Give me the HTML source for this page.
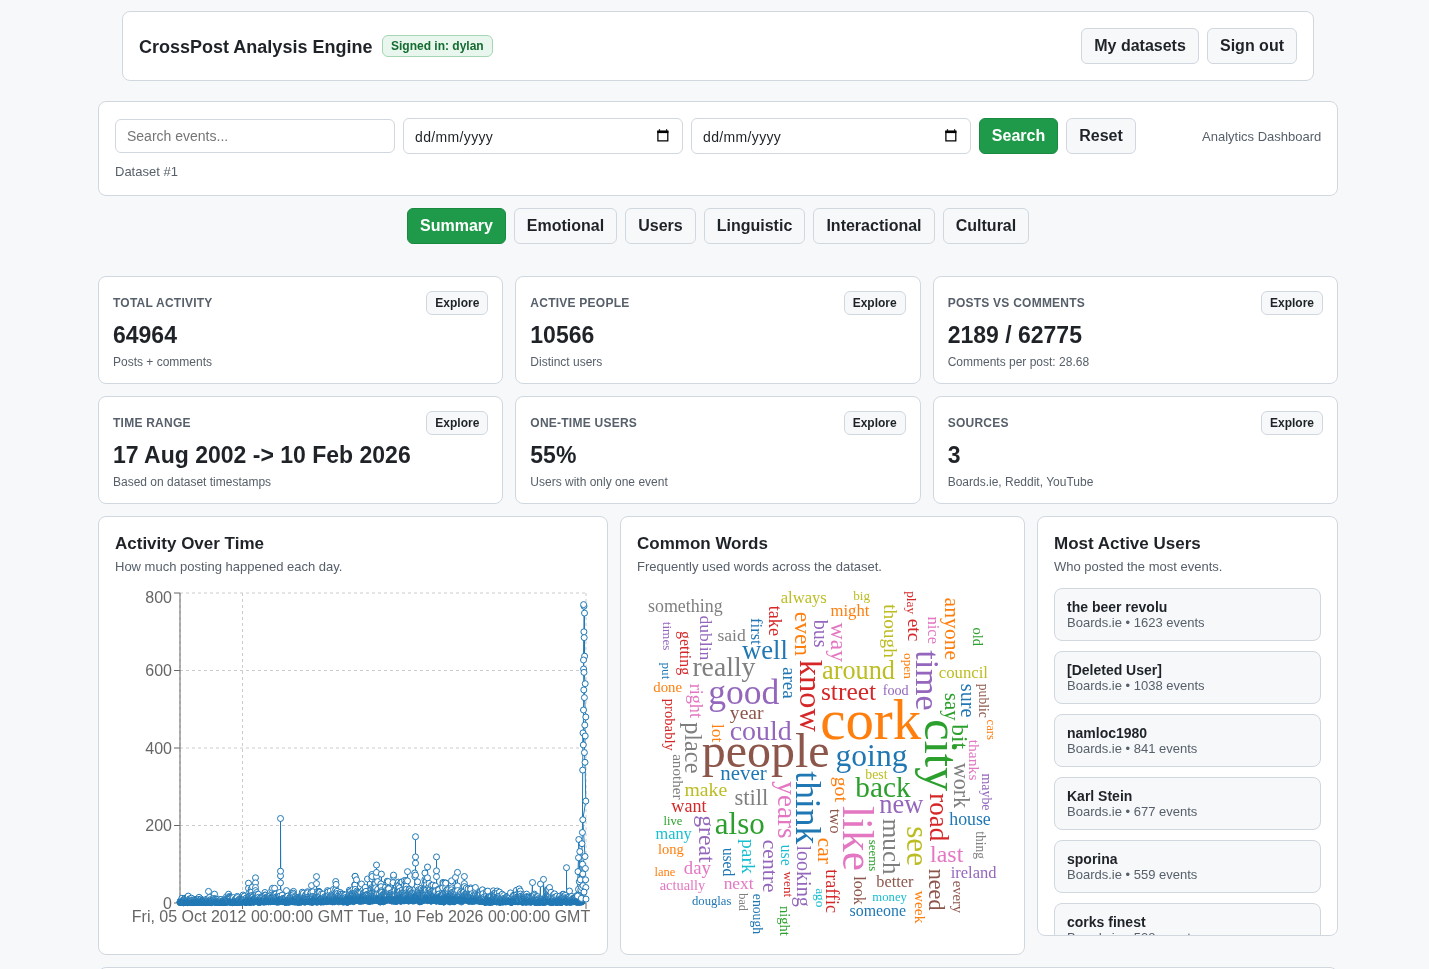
<!DOCTYPE html>
<html><head><meta charset="utf-8">
<style>
*{box-sizing:border-box;}
html,body{margin:0;padding:0;}
body{background:#f6f8fa;font-family:"Liberation Sans",sans-serif;color:#1f2328;width:1429px;height:969px;overflow:hidden;position:relative;}
.card{position:absolute;background:#fff;border:1px solid #d0d7de;border-radius:8px;}
.btn{position:absolute;height:36px;border:1px solid #d0d7de;background:#f6f8fa;border-radius:6px;font-weight:bold;font-size:16px;color:#1f2328;display:flex;align-items:center;justify-content:center;}
.btn.green{background:#1f9a4a;border-color:#1a8a40;color:#fff;}
.inp{position:absolute;border:1px solid #d0d7de;border-radius:6px;background:#fff;font-size:14px;display:flex;align-items:center;}
.abs{position:absolute;white-space:nowrap;}
.lbl{font-size:12px;font-weight:bold;color:#57606a;letter-spacing:0.02em;}
.big{font-size:23px;font-weight:bold;color:#1f2328;}
.sub{font-size:12px;color:#57606a;}
.exp{position:absolute;height:24px;padding-bottom:1px;width:62px;border:1px solid #d0d7de;background:#f6f8fa;border-radius:6px;font-size:12px;font-weight:bold;display:flex;align-items:center;justify-content:center;}
.ctitle{font-size:17px;font-weight:bold;}
.csub{font-size:13px;color:#57606a;}
.dots circle{r:3px;}
.uitem{position:absolute;left:16px;width:267px;height:53px;border:1px solid #d0d7de;background:#f6f8fa;border-radius:8px;}
.uname{position:absolute;left:12px;top:10px;font-size:14px;font-weight:bold;white-space:nowrap;}
.usub{position:absolute;left:12px;top:26px;font-size:13px;color:#57606a;white-space:nowrap;}
</style></head>
<body>
<div id="root" style="position:absolute;left:0;top:0;width:1429px;height:969px;will-change:transform;">
<!-- header -->
<div class="card" style="left:122px;top:11px;width:1192px;height:70px;">
  <div class="abs" style="left:16px;top:25px;font-size:18px;font-weight:bold;">CrossPost Analysis Engine</div>
  <div class="abs" style="left:259px;top:23px;height:22px;padding:0 8px;border:1px solid #a5d6b4;background:#e9f6ee;color:#136c30;border-radius:6px;font-size:12px;font-weight:bold;display:flex;align-items:center;">Signed in: dylan</div>
</div>
<div class="btn" style="left:1081px;top:28px;width:118px;">My datasets</div>
<div class="btn" style="left:1207px;top:28px;width:90px;">Sign out</div>

<!-- filter card -->
<div class="card" style="left:98px;top:101px;width:1240px;height:95px;"></div>
<div class="inp" style="left:115px;top:119px;width:280px;height:34px;padding-left:11px;color:#757575;font-size:14px;">Search events...</div>
<div class="inp" style="left:403px;top:118px;width:280px;height:36px;padding-left:11px;padding-top:2px;letter-spacing:0.35px;">dd/mm/yyyy<svg style="position:absolute;left:252px;top:9px" width="14" height="14" viewBox="0 0 14 14"><path d="M1.9 3.4h9.9v9.5H1.9z" fill="none" stroke="#000" stroke-width="1.25"/><path d="M1.3 2.6h11.1v2.5H1.3z" fill="#000"/><path d="M2.9 1.3h1.2v1.5H2.9zM10 1.3h1.2v1.5H10z" fill="#000"/></svg></div>
<div class="inp" style="left:691px;top:118px;width:280px;height:36px;padding-left:11px;padding-top:2px;letter-spacing:0.35px;">dd/mm/yyyy<svg style="position:absolute;left:252px;top:9px" width="14" height="14" viewBox="0 0 14 14"><path d="M1.9 3.4h9.9v9.5H1.9z" fill="none" stroke="#000" stroke-width="1.25"/><path d="M1.3 2.6h11.1v2.5H1.3z" fill="#000"/><path d="M2.9 1.3h1.2v1.5H2.9zM10 1.3h1.2v1.5H10z" fill="#000"/></svg></div>
<div class="btn green" style="left:979px;top:118px;width:79px;">Search</div>
<div class="btn" style="left:1066px;top:118px;width:70px;">Reset</div>
<div class="abs" style="left:1202px;top:129px;font-size:13px;color:#57606a;">Analytics Dashboard</div>
<div class="abs" style="left:115px;top:164px;font-size:13px;color:#57606a;">Dataset #1</div>

<!-- tabs -->
<div class="btn green" style="left:407px;top:208px;width:99px;">Summary</div>
<div class="btn" style="left:514px;top:208px;width:103px;">Emotional</div>
<div class="btn" style="left:625px;top:208px;width:71px;">Users</div>
<div class="btn" style="left:704px;top:208px;width:101px;">Linguistic</div>
<div class="btn" style="left:813px;top:208px;width:122px;">Interactional</div>
<div class="btn" style="left:943px;top:208px;width:86px;">Cultural</div>

<div class="card" style="left:98px;top:276px;width:405.33px;height:108px;">
  <div class="abs lbl" style="left:14px;top:19px;">TOTAL ACTIVITY</div>
  <div class="exp" style="right:14px;top:14px;">Explore</div>
  <div class="abs big" style="left:14px;top:45px;">64964</div>
  <div class="abs sub" style="left:14px;top:78px;">Posts + comments</div>
</div>
<div class="card" style="left:515.33px;top:276px;width:405.33px;height:108px;">
  <div class="abs lbl" style="left:14px;top:19px;">ACTIVE PEOPLE</div>
  <div class="exp" style="right:14px;top:14px;">Explore</div>
  <div class="abs big" style="left:14px;top:45px;">10566</div>
  <div class="abs sub" style="left:14px;top:78px;">Distinct users</div>
</div>
<div class="card" style="left:932.67px;top:276px;width:405.33px;height:108px;">
  <div class="abs lbl" style="left:14px;top:19px;">POSTS VS COMMENTS</div>
  <div class="exp" style="right:14px;top:14px;">Explore</div>
  <div class="abs big" style="left:14px;top:45px;">2189 / 62775</div>
  <div class="abs sub" style="left:14px;top:78px;">Comments per post: 28.68</div>
</div>
<div class="card" style="left:98px;top:396px;width:405.33px;height:108px;">
  <div class="abs lbl" style="left:14px;top:19px;">TIME RANGE</div>
  <div class="exp" style="right:14px;top:14px;">Explore</div>
  <div class="abs big" style="left:14px;top:45px;">17 Aug 2002 -&gt; 10 Feb 2026</div>
  <div class="abs sub" style="left:14px;top:78px;">Based on dataset timestamps</div>
</div>
<div class="card" style="left:515.33px;top:396px;width:405.33px;height:108px;">
  <div class="abs lbl" style="left:14px;top:19px;">ONE-TIME USERS</div>
  <div class="exp" style="right:14px;top:14px;">Explore</div>
  <div class="abs big" style="left:14px;top:45px;">55%</div>
  <div class="abs sub" style="left:14px;top:78px;">Users with only one event</div>
</div>
<div class="card" style="left:932.67px;top:396px;width:405.33px;height:108px;">
  <div class="abs lbl" style="left:14px;top:19px;">SOURCES</div>
  <div class="exp" style="right:14px;top:14px;">Explore</div>
  <div class="abs big" style="left:14px;top:45px;">3</div>
  <div class="abs sub" style="left:14px;top:78px;">Boards.ie, Reddit, YouTube</div>
</div>
<div class="card" style="left:98px;top:516px;width:510px;height:439px;">
  <div class="abs ctitle" style="left:16px;top:17px;">Activity Over Time</div>
  <div class="abs csub" style="left:16px;top:42px;">How much posting happened each day.</div>
</div>
<!-- CHART -->
<svg style="position:absolute;left:0;top:0" width="1429" height="969" font-family="Liberation Sans" font-size="16">
<g stroke="#ccc" stroke-dasharray="3 3" fill="none"><line x1="180" y1="593" x2="586" y2="593"/><line x1="180" y1="670.5" x2="586" y2="670.5"/><line x1="180" y1="748" x2="586" y2="748"/><line x1="180" y1="825.5" x2="586" y2="825.5"/><line x1="180" y1="903" x2="586" y2="903"/><line x1="180" y1="593" x2="180" y2="903"/><line x1="242.5" y1="593" x2="242.5" y2="903"/><line x1="586" y1="593" x2="586" y2="903"/></g>
<g stroke="#666" fill="none"><line x1="180" y1="593" x2="180" y2="903"/><line x1="180" y1="903" x2="586" y2="903"/><line x1="174" y1="593" x2="180" y2="593"/><line x1="174" y1="670.5" x2="180" y2="670.5"/><line x1="174" y1="748" x2="180" y2="748"/><line x1="174" y1="825.5" x2="180" y2="825.5"/><line x1="174" y1="903" x2="180" y2="903"/><line x1="242.5" y1="903" x2="242.5" y2="909"/><line x1="586" y1="903" x2="586" y2="909"/></g>
<g fill="#666" text-anchor="end"><text x="172" y="603">800</text><text x="172" y="676">600</text><text x="172" y="753.5">400</text><text x="172" y="831">200</text><text x="172" y="908.7">0</text></g>
<g fill="#666" text-anchor="middle"><text x="242.5" y="921.5">Fri, 05 Oct 2012 00:00:00 GMT</text><text x="474" y="921.5">Tue, 10 Feb 2026 00:00:00 GMT</text></g>
<path d="M180.0,901.9L180.1,901.8L180.2,902.6L180.2,902.4L180.3,902.4L180.4,902.2L180.5,902.3L180.6,901.6L180.6,901.8L180.7,901.0L180.8,900.6L180.9,901.9L181.0,902.6L181.0,902.5L181.1,902.3L181.2,902.1L181.3,902.2L181.4,900.8L181.4,901.3L181.5,900.1L181.6,902.0L181.7,901.7L181.8,901.8L181.8,901.2L181.9,898.3L182.0,900.7L182.1,901.6L182.2,901.7L182.3,901.9L182.3,901.9L182.4,901.9L182.5,902.1L182.6,902.0L182.7,902.1L182.7,901.3L182.8,901.8L182.9,901.3L183.0,901.1L183.1,901.2L183.1,900.5L183.2,902.1L183.3,901.9L183.4,902.2L183.5,902.7L183.5,902.6L183.6,902.4L183.7,902.7L183.8,902.5L183.9,902.6L183.9,902.6L184.0,901.9L184.1,901.2L184.2,900.9L184.3,900.9L184.3,901.8L184.4,900.4L184.5,899.7L184.6,899.7L184.7,898.5L184.7,899.7L184.8,900.5L184.9,900.2L185.0,899.9L185.1,898.2L185.1,900.3L185.2,898.3L185.3,899.7L185.4,899.2L185.5,899.8L185.5,901.9L185.6,901.9L185.7,902.0L185.8,902.1L185.9,900.0L186.0,901.1L186.0,900.8L186.1,900.5L186.2,901.3L186.3,902.2L186.4,902.4L186.4,901.5L186.5,902.0L186.6,901.7L186.7,901.6L186.8,902.2L186.8,901.6L186.9,901.4L187.0,902.2L187.1,902.4L187.2,902.4L187.2,901.8L187.3,902.1L187.4,902.6L187.5,901.8L187.6,902.2L187.6,902.3L187.7,902.4L187.8,902.7L187.9,902.2L188.0,901.6L188.0,900.8L188.1,900.9L188.2,896.1L188.3,900.7L188.4,901.0L188.4,901.5L188.5,902.5L188.6,902.5L188.7,902.4L188.8,902.3L188.8,902.3L188.9,902.2L189.0,902.0L189.1,902.1L189.2,901.2L189.2,901.5L189.3,900.3L189.4,898.9L189.5,899.9L189.6,901.4L189.6,901.2L189.7,900.0L189.8,902.1L189.9,902.2L190.0,900.2L190.1,901.0L190.1,901.7L190.2,902.1L190.3,902.2L190.4,902.3L190.5,902.5L190.5,902.3L190.6,902.2L190.7,902.5L190.8,901.8L190.9,901.1L190.9,901.6L191.0,901.8L191.1,901.5L191.2,901.6L191.3,901.2L191.3,900.3L191.4,898.7L191.5,898.2L191.6,900.0L191.7,900.9L191.7,902.1L191.8,901.9L191.9,900.6L192.0,900.3L192.1,901.3L192.1,901.2L192.2,901.6L192.3,901.6L192.4,901.9L192.5,900.6L192.5,902.2L192.6,902.4L192.7,902.0L192.8,902.6L192.9,902.5L192.9,902.6L193.0,902.4L193.1,902.2L193.2,902.1L193.3,902.0L193.3,902.0L193.4,900.5L193.5,901.2L193.6,902.0L193.7,901.8L193.8,902.4L193.8,902.5L193.9,902.0L194.0,901.8L194.1,901.8L194.2,901.0L194.2,901.8L194.3,902.5L194.4,901.9L194.5,901.9L194.6,899.6L194.6,901.7L194.7,901.7L194.8,901.9L194.9,901.7L195.0,901.7L195.0,901.9L195.1,900.7L195.2,899.8L195.3,900.0L195.4,899.8L195.4,900.1L195.5,901.9L195.6,902.2L195.7,901.9L195.8,901.7L195.8,900.1L195.9,901.3L196.0,901.5L196.1,901.5L196.2,901.3L196.2,900.2L196.3,901.4L196.4,900.6L196.5,900.5L196.6,901.9L196.6,902.3L196.7,902.2L196.8,900.9L196.9,900.8L197.0,900.4L197.0,900.5L197.1,901.7L197.2,902.0L197.3,902.5L197.4,901.9L197.5,902.0L197.5,901.1L197.6,901.3L197.7,902.2L197.8,902.2L197.9,901.5L197.9,901.7L198.0,901.6L198.1,902.3L198.2,902.3L198.3,901.7L198.3,901.7L198.4,901.5L198.5,901.4L198.6,901.9L198.7,901.8L198.7,901.7L198.8,902.0L198.9,900.6L199.0,898.7L199.1,897.3L199.1,899.3L199.2,901.6L199.3,901.0L199.4,901.6L199.5,901.0L199.5,901.4L199.6,901.9L199.7,902.5L199.8,902.2L199.9,901.7L199.9,901.2L200.0,900.4L200.1,901.9L200.2,901.7L200.3,901.0L200.3,900.0L200.4,901.8L200.5,901.5L200.6,900.6L200.7,900.2L200.7,901.4L200.8,900.6L200.9,900.6L201.0,899.0L201.1,900.8L201.1,900.9L201.2,901.0L201.3,900.5L201.4,901.8L201.5,901.8L201.6,902.3L201.6,902.2L201.7,902.2L201.8,902.1L201.9,901.5L202.0,901.2L202.0,900.9L202.1,900.7L202.2,901.1L202.3,901.6L202.4,901.4L202.4,902.3L202.5,902.0L202.6,902.1L202.7,902.2L202.8,902.0L202.8,901.8L202.9,902.2L203.0,902.1L203.1,901.6L203.2,902.0L203.2,901.4L203.3,902.2L203.4,902.3L203.5,901.8L203.6,901.9L203.6,902.0L203.7,901.6L203.8,901.1L203.9,901.3L204.0,901.1L204.0,901.2L204.1,901.6L204.2,901.4L204.3,901.6L204.4,902.4L204.4,902.4L204.5,902.0L204.6,901.9L204.7,901.8L204.8,902.0L204.8,902.4L204.9,902.5L205.0,902.6L205.1,902.7L205.2,902.4L205.3,902.4L205.3,902.5L205.4,902.2L205.5,901.7L205.6,902.3L205.7,901.8L205.7,902.3L205.8,900.3L205.9,900.4L206.0,902.1L206.1,901.3L206.1,901.9L206.2,901.6L206.3,900.0L206.4,899.3L206.5,901.6L206.5,901.5L206.6,901.9L206.7,901.6L206.8,901.8L206.9,901.8L206.9,900.5L207.0,901.4L207.1,900.3L207.2,901.5L207.3,901.7L207.3,902.3L207.4,901.5L207.5,901.5L207.6,902.2L207.7,902.0L207.7,902.0L207.8,902.1L207.9,902.2L208.0,901.7L208.5,891.4L208.1,901.2L208.2,900.8L208.3,900.1L208.4,899.1L208.5,899.5L208.5,901.0L208.6,900.3L208.7,901.8L208.8,902.0L208.9,901.2L208.9,902.2L209.0,902.3L209.1,902.5L209.2,902.2L209.3,902.4L209.4,902.1L209.4,901.9L209.5,900.3L209.6,897.4L209.7,900.3L209.8,901.3L209.8,901.4L209.9,901.7L210.0,901.8L210.1,901.8L210.2,901.1L210.2,899.8L210.3,901.6L210.4,901.2L210.5,901.2L210.6,901.9L210.6,901.8L210.7,902.0L210.8,901.8L210.9,901.6L211.0,902.3L211.0,902.3L211.1,902.0L211.2,902.2L211.3,902.7L211.4,902.2L211.4,902.1L211.5,901.6L211.6,901.9L211.7,902.2L211.8,901.5L211.8,901.4L211.9,901.7L212.0,901.4L212.1,901.7L212.2,901.4L212.2,900.8L212.3,901.0L212.4,901.5L212.5,900.9L212.6,899.8L212.6,900.2L212.7,900.6L212.8,900.9L212.9,901.5L213.0,901.0L213.1,901.5L213.1,901.7L213.2,901.4L213.3,900.0L213.4,898.9L213.5,901.1L213.5,899.7L213.6,899.3L213.7,900.0L213.8,899.2L213.9,899.7L213.9,897.1L214.5,894.1L214.1,898.5L214.2,900.3L214.3,900.9L214.3,900.3L214.4,902.0L214.5,901.3L214.6,900.1L214.7,901.8L214.7,902.0L214.8,901.3L214.9,901.9L215.0,902.3L215.1,901.1L215.1,901.5L215.2,899.9L215.3,899.1L215.4,899.5L215.5,901.0L215.5,900.1L215.6,900.0L215.7,901.1L215.8,901.7L215.9,901.8L215.9,902.2L216.0,902.2L216.1,901.8L216.2,902.1L216.3,902.1L216.3,902.1L216.4,902.0L216.5,902.1L216.6,901.8L216.7,900.8L216.8,901.9L216.8,902.0L216.9,901.9L217.0,901.0L217.1,901.3L217.2,901.7L217.2,901.0L217.3,901.3L217.4,901.9L217.5,901.7L217.6,901.5L217.6,901.9L217.7,902.4L217.8,902.4L217.9,902.0L218.0,901.7L218.0,902.3L218.1,902.5L218.2,901.9L218.3,902.4L218.4,901.9L218.4,901.4L218.5,899.2L218.6,901.6L218.7,900.9L218.8,901.5L218.8,901.5L218.9,902.0L219.0,901.3L219.1,900.9L219.2,901.8L219.2,902.3L219.3,902.0L219.4,902.1L219.5,901.8L219.6,901.6L219.6,901.3L219.7,901.3L219.8,901.7L219.9,900.9L220.0,900.3L220.0,900.8L220.1,900.6L220.2,900.9L220.3,901.2L220.4,901.6L220.4,900.4L220.5,901.2L220.6,899.9L220.7,899.7L220.8,899.6L220.9,899.4L220.9,899.6L221.0,901.4L221.1,902.2L221.2,902.3L221.3,902.3L221.3,902.1L221.4,902.0L221.5,901.7L221.6,902.3L221.7,902.1L221.7,902.3L221.8,902.3L221.9,902.4L222.0,902.2L222.1,902.4L222.1,901.9L222.2,901.4L222.3,901.9L222.4,902.1L222.5,902.0L222.5,901.2L222.6,900.8L222.7,901.6L222.8,901.7L222.9,902.2L222.9,902.2L223.0,902.4L223.1,902.1L223.2,902.1L223.3,902.0L223.3,902.4L223.4,902.4L223.5,902.4L223.6,901.7L223.7,902.4L223.7,902.5L223.8,902.5L223.9,902.3L224.0,902.3L224.1,901.6L224.1,900.3L224.2,902.0L224.3,901.2L224.4,900.7L224.5,900.2L224.6,900.2L224.6,900.9L224.7,901.5L224.8,901.9L224.9,902.2L225.0,901.9L225.0,901.8L225.1,901.7L225.2,901.5L225.3,902.3L225.4,902.1L225.4,902.3L225.5,902.4L225.6,902.2L225.7,901.7L225.8,901.8L225.8,901.5L225.9,900.1L226.0,899.8L226.1,899.8L226.2,901.1L226.2,900.4L226.3,901.1L226.4,899.5L226.5,896.6L226.6,899.9L226.6,900.1L226.7,900.3L226.8,898.6L226.9,901.1L227.0,899.9L227.0,898.9L227.1,899.7L227.2,899.5L227.3,900.3L227.4,900.2L227.4,900.7L227.5,901.8L227.6,902.0L227.7,902.0L227.8,901.5L227.8,901.7L227.9,901.3L228.5,897.2L228.1,901.0L228.2,900.6L228.2,901.7L228.3,901.5L228.4,900.6L228.5,899.7L228.6,894.2L228.7,897.5L228.7,898.9L228.8,899.7L228.9,901.0L229.0,901.1L229.1,901.9L229.1,901.9L229.2,898.5L229.3,900.5L229.4,899.7L229.5,898.2L229.5,896.4L229.6,897.2L229.7,898.4L229.8,898.0L229.9,897.4L229.9,900.9L230.0,899.3L230.1,899.9L230.2,899.1L230.3,898.2L230.3,898.9L230.4,901.1L230.5,902.1L230.6,901.4L230.7,901.8L230.7,902.3L230.8,902.3L230.9,902.1L231.0,900.9L231.1,901.8L231.1,901.4L231.2,901.3L231.3,901.6L231.4,902.1L231.5,901.0L231.5,901.3L231.6,901.1L231.7,901.4L231.8,899.4L231.9,899.8L231.9,900.8L232.0,900.1L232.1,900.4L232.2,901.5L232.3,902.2L232.4,902.2L232.4,902.2L232.5,902.5L232.6,902.7L232.7,902.5L232.8,902.3L232.8,901.9L232.9,902.3L233.5,897.6L233.1,901.9L233.2,902.0L233.2,902.2L233.3,902.1L233.4,902.2L233.5,902.2L233.6,902.2L233.6,902.4L233.7,902.5L233.8,902.4L233.9,902.2L234.0,901.7L234.0,901.8L234.1,902.1L234.2,902.4L234.3,901.9L234.4,902.0L234.4,902.3L234.5,901.4L234.6,900.7L234.7,901.4L234.8,901.5L234.8,902.0L234.9,901.9L235.0,900.9L235.1,901.2L235.2,900.4L235.2,899.2L235.3,901.7L235.4,902.0L235.5,901.0L235.6,901.6L235.6,901.9L235.7,902.1L235.8,901.5L235.9,901.6L236.0,898.9L236.1,899.5L236.1,901.9L236.2,902.3L236.3,902.0L236.4,900.5L236.5,899.8L236.5,901.1L236.6,901.6L236.7,902.3L236.8,901.6L236.9,902.3L236.9,901.8L237.0,901.0L237.1,900.8L237.2,899.8L237.3,896.4L237.3,899.9L237.4,897.6L237.5,901.5L237.6,901.7L237.7,901.7L237.7,901.7L237.8,900.7L237.9,901.1L238.0,901.8L238.1,902.1L238.1,902.1L238.2,901.7L238.3,902.1L238.4,902.2L238.5,902.3L238.5,901.9L238.6,901.6L238.7,902.1L238.8,902.4L238.9,902.4L238.9,902.1L239.0,901.2L239.1,901.2L239.2,901.7L239.3,899.6L239.3,899.2L239.4,902.0L239.5,901.4L239.6,900.4L239.7,899.5L239.7,900.8L239.8,902.0L239.9,901.8L240.0,901.3L240.1,900.9L240.2,900.7L240.2,901.5L240.3,901.4L240.4,901.4L240.5,901.7L240.6,900.0L240.6,900.8L240.7,901.2L240.8,899.1L240.9,900.5L241.0,901.1L241.0,901.3L241.1,902.0L241.2,901.5L241.3,901.7L241.4,901.5L241.4,900.5L241.5,901.3L241.6,901.6L241.7,902.3L241.8,901.7L241.8,901.9L241.9,901.2L242.0,901.3L242.1,901.7L242.2,902.0L242.2,901.0L242.3,900.5L242.4,899.5L242.5,900.2L242.6,901.7L242.6,901.6L242.7,901.0L242.8,900.4L242.9,899.5L243.0,898.4L243.0,897.7L243.1,895.0L243.2,900.5L243.3,899.9L243.4,899.4L243.4,898.6L243.5,899.3L243.6,900.7L243.7,900.5L243.8,899.6L243.9,899.9L243.9,898.6L244.0,897.6L244.1,901.3L244.2,898.0L244.3,900.5L244.3,896.1L244.4,896.1L244.5,899.2L244.6,899.3L244.7,899.9L244.7,899.3L244.8,901.2L244.9,901.3L245.0,902.3L245.1,902.0L245.1,902.0L245.2,902.2L245.3,902.3L245.4,902.1L245.5,902.0L245.5,901.8L245.6,901.8L245.7,901.9L245.8,901.9L245.9,900.9L245.9,901.1L246.0,901.0L246.1,900.1L246.2,898.1L246.3,900.8L246.3,901.1L246.4,901.6L246.5,901.2L246.6,900.9L246.7,901.9L246.7,902.1L246.8,902.1L246.9,901.2L247.0,902.2L247.1,901.6L247.1,901.3L247.2,901.5L247.3,901.1L247.4,901.5L247.5,898.9L247.5,899.3L247.6,900.3L247.7,898.6L247.8,899.1L247.9,900.6L248.0,900.7L248.0,900.2L248.1,900.1L248.2,899.8L248.3,899.6L248.4,898.7L248.4,899.3L248.5,883.2L248.5,888.3L248.7,893.8L248.8,896.5L248.8,899.2L248.9,899.5L249.0,899.5L249.1,900.4L249.2,902.2L249.2,902.1L249.3,900.9L249.4,898.5L249.5,895.4L249.6,898.1L249.6,899.4L249.7,896.0L249.8,895.6L249.9,899.6L250.0,901.0L250.0,901.5L250.1,901.5L250.2,902.4L250.3,902.3L250.4,902.2L250.4,901.4L250.5,901.3L250.6,902.1L250.7,901.5L250.8,900.2L250.8,897.0L250.9,895.6L251.0,894.8L251.1,890.3L251.2,898.2L251.2,894.0L251.3,888.6L251.4,896.4L251.5,894.5L251.6,899.5L251.7,891.3L251.7,891.7L251.8,895.4L251.9,899.1L252.0,899.2L252.1,898.0L252.1,898.6L252.2,896.6L252.3,897.0L252.4,899.1L252.5,897.3L252.5,886.9L252.6,898.6L252.7,898.9L252.8,897.2L252.9,899.3L252.9,900.8L253.0,901.2L253.1,900.8L253.2,901.4L253.3,902.1L253.3,902.3L253.4,901.8L253.5,901.6L253.6,900.3L253.7,900.1L253.7,901.2L253.8,901.5L253.9,901.7L254.0,900.7L254.1,900.6L254.1,900.7L254.2,900.2L254.3,899.4L254.4,900.5L254.5,901.6L254.5,901.3L254.6,901.4L254.7,900.8L254.8,901.7L254.9,899.9L254.9,900.1L255.0,898.0L255.1,897.6L255.2,898.8L255.3,900.5L255.3,900.5L255.5,877.8L255.5,882.9L255.5,887.5L255.5,890.6L255.8,901.0L255.8,901.3L255.9,900.8L256.0,897.1L256.1,900.1L256.2,900.0L256.2,898.2L256.3,898.8L256.4,899.9L256.5,892.6L256.6,894.6L256.6,898.3L256.7,901.0L256.8,901.5L256.9,901.6L257.0,900.3L257.0,900.2L257.1,901.0L257.2,898.3L257.3,896.3L257.4,898.6L257.4,897.2L257.5,898.2L257.6,899.7L257.7,901.0L257.8,900.9L257.8,900.6L257.9,900.1L258.0,899.8L258.1,898.1L258.2,895.0L258.2,897.1L258.3,896.6L258.4,894.3L258.5,897.3L258.6,899.6L258.6,901.6L258.7,901.5L258.8,902.3L258.9,902.3L259.0,901.7L259.0,900.6L259.1,901.5L259.2,902.3L259.3,902.4L259.4,901.9L259.5,899.3L259.5,899.7L259.6,901.7L259.7,902.0L259.8,900.7L259.9,900.0L259.9,899.1L260.0,899.6L260.1,899.9L260.2,901.7L260.3,900.6L260.3,897.9L260.4,899.7L260.5,900.7L260.6,900.7L260.7,900.9L260.7,901.6L260.8,902.0L260.9,901.4L261.0,899.9L261.1,900.6L261.1,901.7L261.2,901.0L261.3,899.3L261.4,900.5L261.5,901.4L261.5,901.5L261.6,901.3L261.7,899.2L261.8,900.8L261.9,900.2L261.9,899.6L262.0,900.3L262.1,897.0L262.2,896.7L262.3,899.1L262.3,899.8L262.4,899.8L262.5,896.7L262.6,898.6L262.7,897.7L262.7,897.6L262.8,900.1L262.9,899.6L263.0,901.0L263.1,901.1L263.2,901.0L263.2,900.1L263.3,900.2L263.4,900.6L263.5,901.0L263.6,901.2L263.6,900.7L263.7,901.6L263.8,901.7L263.9,901.4L264.0,902.3L264.0,901.6L264.1,900.5L264.2,901.1L264.3,900.9L264.4,900.8L264.4,901.0L264.5,900.6L264.6,901.5L264.7,900.4L264.8,901.0L264.8,899.5L264.9,892.5L265.0,895.0L265.1,895.7L265.2,896.7L265.2,898.2L265.3,897.4L265.4,895.8L265.5,898.7L265.6,896.1L265.6,898.2L265.7,895.2L265.8,897.6L265.9,901.2L266.0,901.2L266.0,901.6L266.1,901.4L266.2,900.3L266.3,900.9L266.4,901.3L266.4,900.9L266.5,901.7L266.6,901.7L266.7,900.0L266.8,897.4L266.8,899.4L266.9,900.1L267.0,899.0L267.1,896.8L267.2,898.8L267.3,900.4L267.3,901.0L267.4,899.3L267.5,898.6L267.6,900.2L267.7,897.3L267.7,898.9L267.8,900.3L267.9,898.7L268.0,896.9L268.1,899.3L268.1,900.2L268.2,899.3L268.3,899.9L268.4,897.8L268.5,896.6L268.5,898.9L268.6,901.9L268.7,901.4L268.8,901.1L268.9,897.4L268.9,900.0L269.0,900.2L269.1,897.2L269.2,898.6L269.3,897.0L269.3,897.6L269.4,898.5L269.5,897.7L269.6,899.2L269.7,900.5L269.7,899.8L269.8,900.2L269.9,899.5L270.0,897.0L270.1,895.9L270.1,899.6L270.2,900.8L270.3,901.6L270.4,901.6L270.5,901.7L270.5,901.0L270.6,899.1L270.7,898.6L270.8,901.4L270.9,901.2L271.0,900.9L271.0,898.9L271.1,898.4L271.2,897.3L271.3,897.7L271.4,900.6L271.4,899.8L271.5,898.1L271.6,900.4L271.7,897.1L271.8,890.1L271.8,897.2L271.9,899.3L272.0,900.8L272.1,900.3L272.2,901.0L272.2,898.2L272.3,899.7L272.4,899.8L272.5,898.7L272.6,899.7L272.5,888.3L272.7,897.9L272.8,898.2L272.9,897.2L273.0,900.2L273.0,899.9L273.1,900.6L273.2,900.2L273.3,901.2L273.4,899.1L273.4,898.3L273.5,899.4L273.6,899.8L273.7,901.4L273.8,900.7L273.8,901.5L273.9,900.3L274.0,900.9L274.1,898.3L274.2,899.4L274.2,900.3L274.3,898.4L274.4,899.2L274.5,894.7L274.6,888.3L274.6,895.9L274.7,893.8L274.8,894.3L274.9,896.1L275.0,900.5L275.1,900.5L275.1,900.8L275.2,899.1L275.3,896.8L275.4,899.9L275.5,901.3L275.5,900.8L275.6,900.9L275.7,899.5L275.8,900.4L275.9,898.1L275.9,894.1L276.0,899.2L276.1,900.6L276.2,900.3L276.3,900.5L276.3,896.9L276.4,898.3L276.5,899.2L276.6,901.2L276.7,900.3L276.7,901.2L276.8,901.4L276.9,902.2L277.0,901.9L277.1,901.4L277.1,900.9L277.2,901.8L277.3,901.3L277.4,900.6L277.5,899.6L277.5,901.3L277.6,900.8L277.7,900.3L277.8,900.3L277.9,899.8L277.9,901.0L278.0,901.4L278.1,898.0L278.2,896.1L278.3,895.4L278.3,896.1L278.4,898.4L278.5,900.0L278.6,901.3L278.7,901.2L278.8,902.0L278.8,901.6L278.9,901.8L279.0,901.6L279.1,901.6L279.2,899.3L279.2,895.0L279.3,899.4L279.4,894.2L279.5,893.4L279.6,894.2L279.6,892.5L279.7,900.5L279.8,900.0L279.9,896.5L280.0,898.7L280.0,896.2L280.1,898.8L280.2,900.5L280.3,899.7L280.4,900.2L280.4,900.8L280.5,882.9L280.5,875.9L280.5,871.2L280.5,818.5L280.8,899.4L280.9,899.7L281.0,900.6L281.1,901.2L281.2,901.2L281.2,901.4L281.3,901.4L281.4,900.5L281.5,900.2L281.6,900.0L281.6,900.9L281.7,901.1L281.8,901.1L281.9,901.4L282.0,900.3L282.0,896.9L282.1,895.2L282.2,899.1L282.3,899.9L282.4,899.0L282.5,899.7L282.5,899.6L282.6,901.1L282.7,901.7L282.8,900.9L282.9,901.2L282.9,900.3L283.0,898.8L283.1,900.2L283.2,901.0L283.3,898.5L283.3,899.2L283.4,898.8L283.5,898.5L283.6,899.2L283.7,899.3L283.7,898.3L283.8,899.1L283.9,901.3L284.0,901.3L284.1,901.4L284.1,901.4L284.2,900.0L284.3,901.5L284.4,900.6L284.5,901.5L284.5,901.6L284.6,900.8L284.7,901.3L284.8,899.6L284.9,898.0L284.9,899.3L285.0,900.0L285.1,900.5L285.2,902.1L285.3,902.1L285.3,902.1L285.4,901.6L285.5,900.8L285.6,902.4L285.7,902.3L285.7,901.6L285.8,900.8L285.9,898.5L286.5,890.6L286.1,901.2L286.1,901.0L286.2,900.2L286.3,901.2L286.4,901.6L286.5,902.0L286.6,901.2L286.6,901.8L286.7,901.4L286.8,901.1L286.9,901.1L287.0,900.5L287.0,900.4L287.1,901.5L287.2,901.7L287.3,901.1L287.4,898.6L287.4,897.7L287.5,898.5L287.6,898.6L287.7,900.3L287.8,898.0L287.8,896.1L287.9,900.9L288.0,899.9L288.1,901.6L288.2,901.3L288.2,899.6L288.3,900.7L288.4,900.4L288.5,900.6L288.6,902.4L288.6,900.6L288.7,899.7L288.8,902.0L288.9,900.3L289.0,901.0L289.0,901.2L289.1,901.4L289.2,900.0L289.3,899.3L289.4,900.8L289.4,900.7L289.5,901.5L289.6,900.0L289.7,899.6L289.8,898.2L289.8,900.7L289.9,900.5L290.0,897.2L290.1,899.3L290.2,899.7L290.3,900.5L290.3,901.1L290.4,900.7L290.5,900.8L290.6,901.3L290.7,901.6L290.7,900.8L290.8,898.6L290.9,898.5L291.0,898.1L291.1,899.8L291.1,900.3L291.2,901.1L291.3,900.8L291.4,900.6L291.5,898.7L291.5,896.2L291.6,898.6L291.7,897.6L291.8,898.8L291.9,900.7L291.9,901.1L292.0,900.5L292.1,900.1L292.2,899.0L292.3,900.4L292.3,900.6L292.4,901.8L292.5,900.7L292.6,892.2L292.7,894.5L292.7,900.6L292.8,900.4L292.9,900.3L293.5,891.4L293.1,898.4L293.1,895.2L293.2,893.2L293.3,894.7L293.4,898.4L293.5,899.9L293.5,899.7L293.6,900.3L293.7,898.5L293.8,897.6L293.9,896.6L293.9,901.3L294.0,901.6L294.1,900.1L294.2,899.9L294.3,899.7L294.4,898.4L294.4,899.9L294.5,900.7L294.6,900.9L294.7,901.6L294.8,901.4L294.8,902.2L294.9,900.8L295.0,897.8L295.1,897.1L295.2,897.8L295.2,901.1L295.3,897.7L295.4,897.0L295.5,899.5L295.6,900.7L295.6,900.3L295.7,901.0L295.8,900.3L295.9,898.7L296.0,900.8L296.0,901.8L296.1,901.8L296.2,900.6L296.3,900.1L296.4,899.9L296.4,900.2L296.5,898.3L296.6,900.3L296.7,898.1L296.8,900.0L296.8,900.5L296.9,899.9L297.0,897.5L297.1,898.1L297.2,900.6L297.2,900.4L297.3,901.7L297.4,900.5L297.5,900.2L297.6,900.3L297.6,899.4L297.7,900.9L297.8,902.0L297.9,901.8L298.0,901.7L298.1,902.3L298.1,901.8L298.2,900.7L298.3,898.1L298.4,897.4L298.5,898.4L298.5,901.7L298.6,902.4L298.7,901.6L298.8,899.8L298.9,900.7L298.9,900.4L299.0,899.5L299.1,899.1L299.2,898.0L299.3,899.9L299.3,901.6L299.4,901.4L299.5,901.1L299.6,902.3L299.7,902.0L299.7,898.5L299.8,897.2L299.9,898.7L300.0,897.9L300.1,897.3L300.1,898.0L300.2,899.2L300.3,901.1L300.4,901.7L300.5,900.8L300.5,901.2L300.6,901.2L300.7,900.2L300.8,899.2L300.9,900.2L300.9,901.6L301.0,901.6L301.1,901.8L301.2,900.9L301.3,901.9L301.3,901.5L301.4,900.8L301.5,901.9L301.6,901.4L301.7,900.8L301.7,898.2L301.8,897.7L301.9,896.6L302.0,897.4L302.1,894.0L302.2,898.0L302.2,893.7L302.3,892.2L302.4,899.4L302.5,900.4L302.6,898.0L302.6,896.0L302.7,898.1L302.8,899.3L302.9,898.2L303.0,900.9L303.0,900.6L303.1,898.3L303.2,900.8L303.3,897.9L303.4,893.3L303.4,897.8L303.5,900.3L303.6,900.2L303.7,899.5L303.8,898.1L303.8,899.3L303.9,900.9L304.0,899.0L304.1,900.3L304.2,901.3L304.2,901.6L304.3,900.6L304.4,901.0L304.5,901.2L304.6,899.7L304.6,901.0L304.7,902.2L304.8,901.7L304.9,901.0L305.0,900.2L305.0,900.8L305.1,901.7L305.2,901.6L305.3,901.9L305.4,900.8L305.4,900.2L305.5,896.3L305.6,895.6L305.7,897.8L305.8,894.8L305.9,898.7L305.9,896.5L306.0,894.6L306.1,897.4L306.2,899.7L306.3,899.7L306.3,900.3L306.4,900.1L306.5,899.3L306.6,898.9L306.7,899.0L306.7,897.4L306.8,897.5L306.9,893.3L307.0,899.6L307.1,899.3L307.1,900.2L307.2,898.2L307.3,898.5L307.4,896.0L307.5,891.7L307.5,895.7L307.6,893.7L307.7,892.8L307.8,897.7L307.9,899.4L307.9,898.1L308.0,901.1L308.1,901.1L308.2,901.3L308.3,901.1L308.3,900.7L308.4,897.0L308.5,898.9L308.6,900.8L308.7,900.5L308.7,901.2L308.8,899.8L308.9,898.4L309.0,900.8L309.1,901.6L309.1,901.0L309.2,901.1L309.3,900.8L309.4,898.3L309.5,899.0L309.6,898.6L309.6,900.7L309.7,901.6L309.8,901.9L309.9,901.8L310.0,901.0L310.0,899.5L310.1,895.9L310.2,899.2L310.3,897.9L310.4,899.8L310.4,901.5L310.5,899.2L310.6,898.4L310.7,900.0L310.8,900.2L310.8,898.8L310.9,894.1L311.0,892.7L311.1,892.6L311.2,897.7L311.2,900.7L311.3,900.5L311.4,901.4L311.5,901.4L311.6,899.4L311.6,899.1L311.5,885.6L311.8,901.8L311.9,902.0L312.0,901.1L312.0,902.2L312.1,902.3L312.2,901.6L312.3,901.6L312.4,901.2L312.4,901.7L312.5,900.4L312.6,895.4L312.7,895.6L312.8,891.8L312.8,896.4L312.9,896.6L313.0,897.6L313.1,900.8L313.2,900.6L313.2,900.4L313.3,900.7L313.4,900.8L313.5,901.9L313.6,900.9L313.7,901.3L313.7,900.7L313.8,900.9L313.9,899.4L314.0,899.3L314.1,898.2L314.1,900.4L314.2,899.3L314.3,898.6L314.4,899.2L314.5,900.0L314.5,899.4L314.6,898.6L314.7,899.0L314.8,899.0L314.9,899.8L314.9,900.6L315.0,901.5L315.1,900.0L315.2,899.3L315.3,899.2L315.3,899.8L315.4,900.0L315.5,900.6L315.6,899.2L315.7,898.9L315.7,899.0L315.8,899.5L315.9,900.6L316.0,898.2L316.1,898.9L316.1,897.3L316.2,899.2L316.3,899.0L316.4,896.9L316.5,900.1L316.5,900.8L316.6,901.4L316.7,900.6L316.5,876.6L316.5,883.6L316.9,902.0L317.0,902.3L317.1,900.1L317.2,900.4L317.3,898.1L317.4,895.7L317.4,891.6L317.5,895.5L317.6,899.4L317.7,893.6L317.8,899.6L317.8,901.5L317.9,900.4L318.0,898.8L318.1,897.2L318.2,898.7L318.2,900.8L318.3,900.2L318.4,898.3L318.5,898.8L318.6,895.5L318.6,897.3L318.7,895.7L318.8,898.7L318.9,898.1L319.0,894.6L319.0,891.3L319.1,892.0L319.2,895.4L319.3,898.4L319.4,898.8L319.4,896.6L319.5,895.3L319.6,899.1L319.7,896.4L319.8,892.3L319.8,897.3L319.9,896.8L320.0,899.6L320.1,899.3L320.2,899.5L320.2,898.9L320.3,899.1L320.4,899.9L320.5,899.1L320.6,901.7L320.6,901.9L320.7,901.4L320.8,901.1L320.9,900.1L321.0,900.9L321.0,901.7L321.1,901.3L321.2,901.3L321.3,902.1L321.4,901.0L321.5,900.2L321.5,900.2L321.6,893.8L321.7,898.4L321.8,898.5L321.9,897.3L321.9,898.1L322.0,899.4L322.1,899.4L322.2,898.8L322.3,897.2L322.3,899.1L322.4,899.9L322.5,900.7L322.6,901.0L322.7,901.1L322.7,901.3L322.8,898.2L322.9,899.6L323.0,900.3L323.1,895.2L323.1,894.1L323.2,901.0L323.3,900.7L323.4,900.7L323.5,901.6L323.5,902.0L323.6,901.0L323.7,900.2L323.8,899.9L323.9,900.8L323.9,898.6L324.0,898.5L324.1,898.8L324.2,898.9L324.3,901.1L324.3,900.3L324.4,897.4L324.5,897.3L324.6,899.0L324.7,896.7L324.7,900.0L324.8,900.6L324.9,899.9L325.0,898.9L325.1,898.4L325.2,900.9L325.2,899.9L325.3,899.3L325.4,900.4L325.5,897.1L325.6,898.5L325.6,899.0L325.7,898.1L325.8,897.8L325.9,897.6L326.0,899.3L326.0,898.9L326.1,899.1L326.2,900.7L326.3,901.7L326.4,898.2L326.4,900.3L326.5,900.9L326.6,899.7L326.7,899.3L326.8,901.3L326.8,900.2L326.9,898.8L327.5,890.6L327.1,899.8L327.2,899.7L327.2,900.7L327.3,901.5L327.4,900.6L327.5,897.1L327.6,894.8L327.6,895.3L327.7,894.3L327.8,894.7L327.9,893.1L328.0,891.9L328.0,898.2L328.1,899.7L328.2,896.4L328.3,899.2L328.4,901.3L328.4,899.2L328.5,899.1L328.6,898.2L328.7,895.2L328.8,898.8L328.9,898.6L328.9,898.2L329.0,899.0L329.1,899.2L329.2,899.7L329.3,898.7L329.3,900.0L329.4,899.9L329.5,901.0L329.6,900.4L329.7,898.7L329.7,900.0L329.8,900.1L329.9,901.0L330.0,897.8L330.1,898.3L330.1,897.8L330.2,891.2L330.3,895.5L330.4,897.1L330.5,899.3L330.5,900.8L330.6,897.9L330.7,897.8L330.8,898.1L330.9,897.5L330.9,899.3L331.0,898.8L331.1,897.9L331.2,895.6L331.3,897.2L331.3,898.7L331.4,898.7L331.5,897.3L331.6,895.1L331.7,897.6L331.7,899.3L331.8,901.0L331.9,901.1L332.0,900.4L332.1,899.4L332.1,900.7L332.2,901.8L332.3,901.8L332.4,899.8L332.5,898.6L332.5,899.2L332.6,893.9L332.7,895.3L332.8,897.4L332.9,897.5L333.0,897.9L333.5,889.4L333.1,896.8L333.2,897.7L333.3,898.0L333.4,897.4L333.4,895.3L333.5,899.6L333.6,900.6L333.7,900.6L333.8,900.9L333.8,900.7L333.9,901.2L334.0,901.5L334.1,901.9L334.2,901.2L334.2,898.8L334.3,900.3L334.4,897.6L334.5,894.8L334.6,900.1L334.6,899.5L334.7,898.8L334.8,901.4L334.9,900.6L335.0,900.5L335.0,900.0L335.1,897.0L335.2,897.4L335.3,897.0L335.4,899.9L335.4,898.4L335.5,897.1L335.6,895.6L335.7,881.5L335.8,889.5L335.8,889.6L335.9,894.3L336.0,894.1L336.1,884.4L336.2,892.7L336.2,898.1L336.3,895.4L336.4,898.0L336.5,898.8L336.6,898.2L336.7,898.9L336.7,898.7L336.8,897.1L336.9,893.6L337.0,898.3L337.1,891.3L337.1,893.8L337.2,897.6L337.3,899.6L337.4,898.4L337.5,893.5L337.5,896.9L337.6,899.6L337.7,896.4L337.8,899.4L337.9,898.3L337.9,896.8L338.0,897.6L338.1,900.2L338.2,898.7L338.3,897.7L338.3,898.1L338.4,895.9L338.5,898.0L338.6,900.6L338.7,901.9L338.7,901.2L338.8,901.2L338.9,899.9L339.0,899.2L339.1,898.9L339.1,899.9L339.2,899.5L339.3,897.5L339.4,899.8L339.5,896.9L339.5,898.0L339.6,896.8L339.7,898.9L339.8,897.1L339.9,898.0L339.9,898.3L340.0,897.8L340.1,892.8L340.2,892.5L340.3,894.3L340.3,898.8L340.4,898.8L340.5,900.6L340.6,899.7L340.7,900.0L340.8,899.6L340.8,900.5L340.9,900.1L341.0,899.4L341.1,895.3L341.2,895.0L341.2,894.1L341.3,898.4L341.4,896.5L341.5,898.6L341.6,900.2L341.6,900.3L341.7,899.6L341.8,900.0L341.9,900.5L342.0,899.2L342.0,900.3L342.1,900.4L342.2,900.7L342.3,900.3L342.4,899.7L342.4,900.5L342.5,898.6L342.6,901.7L342.7,900.9L342.8,898.6L342.8,894.5L342.9,894.5L343.0,894.2L343.1,897.1L343.2,898.5L343.2,900.2L343.3,900.5L343.4,901.6L343.5,902.2L343.6,900.9L343.6,900.1L343.7,897.4L343.8,898.5L343.9,900.5L344.0,899.7L344.0,897.1L344.1,900.8L344.2,900.7L344.3,900.2L344.4,895.0L344.5,895.7L344.5,899.4L344.6,900.7L344.7,901.3L344.8,901.5L344.9,900.4L344.9,900.3L345.0,899.8L345.1,901.2L345.2,897.3L345.3,899.1L345.3,900.9L345.4,900.9L345.5,899.7L345.6,900.1L345.7,900.0L345.7,895.0L345.8,898.7L345.9,897.4L346.0,901.3L346.1,900.7L346.1,900.9L346.2,899.5L346.3,899.3L346.4,900.4L346.5,900.1L346.5,899.8L346.6,900.0L346.7,900.7L346.8,901.4L346.9,901.6L346.9,901.4L347.0,901.6L347.1,900.6L347.2,901.5L347.3,902.2L347.3,902.3L347.4,902.2L347.5,902.0L347.6,901.0L347.7,900.7L347.7,899.1L347.8,899.1L347.9,898.8L348.0,896.2L348.1,897.0L348.2,896.6L348.2,898.5L348.3,900.2L348.4,900.4L348.5,897.2L348.6,897.3L348.6,901.2L348.7,901.7L348.8,900.8L348.9,901.0L349.0,899.6L349.0,898.9L349.1,899.6L349.2,895.4L349.3,897.4L349.4,890.2L349.4,892.0L349.5,892.3L349.6,893.8L349.7,898.3L349.8,899.0L349.8,898.1L349.9,899.9L350.0,897.7L350.1,897.7L350.2,897.7L350.2,898.1L350.3,901.4L350.4,900.4L350.5,898.7L350.6,892.2L350.6,891.3L350.7,894.3L350.8,895.1L350.9,897.4L351.0,898.0L351.0,900.7L351.1,900.0L351.2,896.7L351.3,896.5L351.4,899.2L351.4,899.8L351.5,897.3L351.6,893.7L351.7,898.9L351.8,900.1L351.8,899.9L351.9,898.4L352.0,898.1L352.1,897.6L352.2,895.1L352.3,894.0L352.3,898.8L352.4,897.6L352.5,898.7L352.6,899.3L352.7,898.9L352.7,899.0L352.8,899.0L352.9,896.8L353.0,889.4L353.1,894.3L353.1,894.3L353.2,897.9L353.3,900.1L353.4,901.1L353.5,901.7L353.5,901.1L353.6,900.8L353.7,898.3L353.8,897.6L353.9,896.9L353.9,898.4L354.0,899.3L354.1,897.3L354.2,897.0L354.3,895.7L354.3,894.3L354.4,898.4L354.5,898.8L354.6,894.2L354.7,893.0L354.7,884.7L354.8,890.9L354.9,891.1L355.0,885.1L355.1,876.3L355.1,876.3L355.2,889.4L355.3,893.0L355.4,897.0L355.5,898.4L355.5,898.1L355.6,899.1L355.7,898.0L355.8,900.5L355.9,899.7L356.0,900.4L356.0,900.3L356.1,896.8L356.2,898.4L356.3,898.0L356.4,896.4L356.4,893.6L356.5,879.8L356.6,895.3L356.7,898.0L356.8,895.3L356.8,891.1L356.9,897.3L357.0,894.7L357.1,895.9L357.2,894.9L357.2,897.9L357.3,895.3L357.4,892.3L357.5,899.4L357.6,895.4L357.6,895.4L357.7,898.8L357.8,896.3L357.9,899.1L358.0,897.1L358.0,892.5L358.1,896.1L358.2,898.4L358.3,900.6L358.4,900.7L358.4,896.7L358.5,899.3L358.6,895.5L358.7,893.2L358.8,896.2L358.8,894.8L358.9,895.6L359.0,895.7L359.1,894.0L359.2,893.2L359.2,896.6L359.3,896.5L359.4,896.3L359.5,897.2L359.6,898.8L359.6,898.7L359.7,898.6L359.8,898.2L359.9,900.1L360.0,901.5L360.1,900.0L360.1,899.2L360.2,900.3L360.3,898.3L360.4,898.8L360.5,899.9L360.5,896.7L360.6,893.5L360.7,896.1L360.8,893.4L360.9,892.7L360.9,898.4L361.0,900.6L361.1,899.8L361.2,900.1L361.3,900.8L361.3,900.5L361.4,899.5L361.5,897.6L361.5,884.0L361.7,899.5L361.7,897.3L361.8,899.7L361.9,900.8L362.0,900.8L362.1,900.9L362.1,899.8L362.2,900.1L362.3,898.0L362.4,899.3L362.5,900.0L362.5,895.6L362.6,897.3L362.7,898.7L362.8,897.9L362.9,894.4L362.9,890.3L363.0,896.2L363.1,900.0L363.2,900.9L363.3,900.8L363.3,898.5L363.4,894.9L363.5,897.9L363.6,899.7L363.7,897.0L363.8,897.6L363.8,898.0L363.9,893.4L364.0,892.3L364.1,898.2L364.2,897.3L364.2,897.5L364.3,895.1L364.4,899.3L364.5,899.3L364.6,900.1L364.6,899.5L364.7,900.5L364.8,898.8L364.9,900.2L365.0,897.8L365.0,894.7L365.1,896.2L365.2,892.0L365.3,887.4L365.4,892.6L365.4,897.4L365.5,898.8L365.6,899.6L365.7,897.0L365.8,894.9L365.8,895.0L365.9,893.4L366.0,891.3L366.1,896.5L366.2,898.1L366.2,900.1L366.3,898.3L366.4,896.9L366.5,894.6L366.6,894.9L366.6,895.0L366.7,897.6L366.8,899.1L366.9,895.2L367.0,900.1L367.0,897.2L367.1,899.7L367.2,900.2L367.3,897.8L367.4,899.3L367.4,901.1L367.5,879.0L367.6,897.4L367.7,896.4L367.8,899.6L367.9,898.7L367.9,898.6L368.0,898.9L368.1,898.1L368.2,899.8L368.3,896.5L368.3,898.3L368.4,897.9L368.5,896.9L368.6,897.3L368.7,895.3L368.7,896.0L368.8,894.9L368.9,898.7L369.0,897.5L369.1,897.6L369.1,899.9L369.2,899.4L369.3,900.0L369.4,900.2L369.5,901.3L369.5,901.5L369.6,901.5L369.7,900.9L369.8,900.2L369.9,900.0L369.9,900.7L370.0,900.0L370.1,897.2L370.2,895.5L370.3,895.4L370.3,895.2L370.4,896.6L370.5,896.8L370.6,896.1L370.7,895.8L370.7,894.2L370.8,891.1L370.9,887.9L371.0,889.3L371.1,893.8L371.1,898.1L371.2,900.6L371.3,898.3L371.4,896.6L371.5,897.2L371.6,899.4L371.6,898.4L371.7,894.4L371.8,889.3L371.9,874.5L372.0,877.3L372.0,879.1L372.1,876.5L372.2,894.7L372.3,892.6L372.4,896.7L372.4,895.9L372.5,899.7L372.6,900.5L372.7,900.9L372.8,900.9L372.8,899.2L372.9,900.3L373.0,898.6L373.1,895.8L373.2,899.0L373.2,896.4L373.3,889.8L373.4,895.4L373.5,894.0L373.6,888.6L373.6,894.7L373.7,897.5L373.8,897.9L373.9,898.1L374.0,899.8L374.0,899.9L374.1,900.5L374.2,899.1L374.3,891.2L374.4,888.3L374.4,897.1L374.5,893.3L374.6,897.6L374.7,896.1L374.8,897.4L374.8,892.8L374.9,894.4L375.0,895.2L375.1,896.0L375.2,896.9L375.3,896.2L375.3,889.2L375.4,882.2L375.5,883.8L375.6,889.3L375.7,893.0L375.7,887.8L375.8,895.3L375.9,898.4L376.0,899.4L376.1,898.4L376.1,897.4L376.2,896.4L376.5,876.6L376.5,872.4L376.5,865.0L376.5,900.1L376.6,900.4L376.7,898.0L376.8,899.9L376.9,899.2L376.9,897.7L377.0,896.8L377.1,894.8L377.2,892.4L377.3,893.1L377.3,891.0L377.4,893.7L377.5,895.4L377.6,881.6L377.7,889.3L377.7,893.8L377.8,899.5L377.9,900.4L378.0,899.7L378.1,900.3L378.1,899.7L378.2,900.8L378.3,898.2L378.4,897.7L378.5,898.6L378.5,899.2L378.6,899.2L378.7,897.3L378.8,898.8L378.9,897.7L378.9,898.4L379.0,900.3L379.1,900.2L379.2,899.7L379.3,898.4L379.4,893.7L379.4,898.0L379.5,899.2L379.6,897.8L379.7,898.1L379.8,900.4L379.8,898.4L379.9,900.1L380.0,901.1L380.1,901.4L380.2,902.0L380.2,901.9L380.3,900.9L380.4,898.7L380.5,899.2L380.6,900.0L380.6,899.4L380.7,899.9L380.8,891.1L380.9,883.9L381.0,886.7L381.0,892.5L381.1,892.4L381.2,890.7L381.3,894.1L381.4,892.0L381.4,874.1L381.5,895.6L381.6,895.3L381.7,892.5L381.8,896.7L381.8,899.2L381.9,897.9L382.0,898.1L382.1,898.7L382.2,900.2L382.2,896.3L382.3,897.4L382.4,895.0L382.5,895.8L382.6,899.2L382.6,898.8L382.7,901.0L382.8,899.6L382.9,899.1L383.0,900.9L383.1,899.5L383.1,895.8L383.2,898.4L383.3,901.0L383.4,901.8L383.5,901.6L383.5,898.9L383.6,900.4L383.7,895.8L383.8,899.1L383.9,898.5L383.9,900.7L384.0,898.9L384.1,899.1L384.2,895.7L384.3,896.1L384.3,895.2L384.4,893.6L384.5,893.4L384.6,893.5L384.7,895.8L384.7,896.9L384.8,898.5L384.9,894.8L385.0,897.1L385.1,900.7L385.1,899.5L385.2,897.1L385.3,898.6L385.4,898.5L385.5,899.1L385.5,897.5L385.6,892.8L385.7,894.1L385.8,895.6L385.5,887.1L385.9,892.1L386.0,895.6L386.1,896.4L386.2,890.4L386.3,892.2L386.3,892.3L386.4,897.2L386.5,892.4L386.6,896.0L386.7,896.2L386.7,895.9L386.8,898.4L386.9,900.0L387.0,896.9L387.1,897.0L387.2,894.1L387.2,881.2L387.3,892.4L387.4,894.0L387.5,894.7L387.6,899.4L387.6,900.1L387.7,894.7L387.8,895.5L387.9,891.8L388.0,882.0L388.0,890.8L388.1,883.4L388.2,881.6L388.3,890.6L388.4,890.8L388.4,888.2L388.5,892.9L388.6,890.2L388.7,888.8L388.8,899.6L388.8,898.6L388.9,899.5L389.0,897.5L389.1,897.6L389.2,894.9L389.2,896.8L389.3,899.4L389.4,894.4L389.5,896.5L389.6,893.5L389.6,895.3L389.7,898.5L389.8,900.0L389.9,896.5L390.0,895.6L390.0,895.5L390.1,899.8L390.2,899.0L390.3,899.3L390.4,898.1L390.4,898.0L390.5,898.5L390.6,898.2L390.7,898.9L390.8,895.5L390.9,897.7L390.9,898.6L391.0,894.9L391.1,893.0L391.2,894.1L391.3,894.7L391.3,893.0L391.4,894.8L391.5,898.9L391.6,895.5L391.7,896.7L391.7,900.4L391.8,901.0L391.9,901.0L392.0,900.5L392.1,897.1L392.1,897.7L392.2,898.2L392.3,900.2L392.4,897.5L392.5,897.4L392.5,899.5L392.6,897.7L392.7,892.5L392.8,895.8L392.9,896.9L392.9,893.9L393.0,882.6L393.1,895.3L393.5,876.6L393.5,875.1L393.3,900.4L393.4,898.5L393.5,900.8L393.6,901.0L393.7,896.5L393.7,898.8L393.8,895.7L393.9,899.0L394.0,899.3L394.1,898.0L394.1,901.1L394.2,901.0L394.3,897.1L394.4,898.8L394.5,899.0L394.6,898.6L394.6,899.4L394.7,893.2L394.8,899.1L394.9,895.1L395.0,892.8L395.0,894.7L395.1,890.6L395.2,898.0L395.3,897.6L395.4,894.8L395.4,894.3L395.5,897.9L395.6,897.1L395.7,895.4L395.8,899.0L395.8,898.7L395.9,900.3L396.0,900.8L396.1,901.4L396.2,900.4L396.2,900.5L396.3,901.0L396.4,899.7L396.5,900.5L396.6,900.5L396.6,901.1L396.7,901.3L396.8,898.5L396.9,898.6L397.0,900.2L397.0,898.4L397.1,899.1L397.2,898.9L397.3,898.2L397.4,894.2L397.4,891.1L397.5,898.0L397.5,884.0L397.7,889.4L397.8,896.3L397.8,898.0L397.9,897.3L398.0,893.7L398.1,898.5L398.2,893.5L398.2,889.6L398.3,891.3L398.4,882.1L398.5,894.3L398.6,885.3L398.7,890.2L398.7,885.7L398.8,896.2L398.9,891.5L399.0,892.3L399.1,898.1L399.1,898.4L399.2,890.9L399.3,896.1L399.4,896.2L399.5,893.5L399.5,887.7L399.6,891.4L399.7,892.1L399.8,893.3L399.9,891.3L399.9,898.1L400.0,899.5L400.1,900.3L400.2,897.0L400.3,899.6L400.3,900.4L400.4,898.0L400.5,900.8L400.6,901.2L400.7,901.0L400.7,898.3L400.8,893.9L400.9,882.1L401.0,899.1L401.1,900.6L401.1,899.1L401.2,901.1L401.3,899.3L401.4,900.9L401.5,898.7L401.5,899.3L401.6,900.6L401.7,900.3L401.8,894.7L401.9,892.6L401.9,882.0L402.0,894.2L402.1,895.6L402.2,893.6L402.3,889.8L402.4,892.6L402.4,893.7L402.5,896.4L402.6,897.0L402.7,898.5L402.8,895.6L402.8,895.0L402.9,895.9L403.0,894.9L403.1,893.1L403.2,896.2L403.2,897.6L403.3,897.1L403.4,900.3L403.5,900.4L403.6,900.6L403.6,898.7L403.7,900.4L403.8,899.7L403.9,898.6L404.0,900.1L404.0,895.2L404.1,900.3L404.2,900.9L404.3,895.6L404.4,880.5L404.4,886.4L404.5,885.0L404.6,893.0L404.7,894.4L404.8,896.3L404.8,893.1L404.9,892.5L405.0,896.6L405.1,894.6L405.2,899.5L405.2,893.9L405.3,898.7L405.4,900.0L405.5,898.0L405.6,897.6L405.6,895.3L405.7,896.7L405.8,888.0L405.9,898.9L406.0,895.8L406.0,882.1L406.1,880.5L406.2,886.2L406.3,886.3L406.4,891.3L406.5,889.1L406.5,893.3L406.6,892.7L406.7,894.4L406.8,895.3L406.9,898.0L406.9,898.7L407.0,900.6L407.1,900.5L407.2,900.0L407.3,898.9L407.3,898.7L407.4,899.3L407.5,899.1L407.6,899.5L407.7,898.8L407.7,895.9L407.8,897.6L407.5,880.9L407.5,871.6L408.1,897.7L408.1,894.1L408.2,899.6L408.3,899.4L408.4,900.4L408.5,900.9L408.5,901.0L408.6,900.4L408.7,898.8L408.8,900.0L408.9,900.9L408.9,899.8L409.0,895.9L409.1,892.4L409.2,889.0L409.3,892.8L409.3,891.0L409.4,889.7L409.5,898.4L409.6,897.1L409.7,899.4L409.7,894.5L409.8,895.4L409.9,897.5L410.0,896.1L410.1,895.8L410.2,893.1L410.2,891.2L410.3,897.5L410.4,898.9L410.5,898.8L410.6,897.1L410.6,891.9L410.7,895.6L410.8,895.0L410.9,891.9L411.0,890.8L411.0,895.9L411.1,896.3L411.2,894.3L411.3,895.6L411.4,896.3L411.4,897.9L411.5,899.7L411.6,899.8L411.7,900.5L411.8,900.3L411.8,900.0L411.9,895.6L412.0,892.6L412.1,894.9L412.2,893.8L412.2,900.1L412.3,899.3L412.4,895.4L412.5,899.7L412.6,900.7L412.6,900.7L412.7,900.7L412.8,899.4L412.9,897.2L413.0,899.4L413.0,900.4L413.1,898.5L413.2,895.6L413.3,892.2L413.4,892.6L413.4,896.0L413.5,896.9L413.6,899.3L413.7,900.4L413.8,901.1L413.8,900.4L413.9,899.5L414.0,899.5L414.1,898.9L414.2,897.5L414.3,896.7L414.3,898.1L414.4,898.3L414.5,897.1L414.6,895.9L414.7,892.7L414.7,873.0L414.8,876.6L414.9,890.6L415.0,889.3L415.1,893.4L415.1,897.2L415.2,899.7L415.5,875.1L415.5,863.1L415.5,856.9L415.5,836.7L415.6,888.5L415.7,895.1L415.8,896.1L415.9,897.5L415.9,898.9L416.0,897.5L416.1,895.5L416.2,896.8L416.3,897.1L416.3,897.1L416.4,896.7L416.5,898.2L416.6,899.5L416.7,897.8L416.7,899.8L416.8,897.5L416.9,898.2L417.0,897.6L417.1,898.3L417.1,894.2L417.2,894.7L417.3,886.5L417.4,893.3L417.5,896.3L417.5,892.5L417.6,881.8L417.7,893.5L417.8,897.4L417.9,895.0L418.0,896.2L418.0,893.2L418.1,890.1L418.2,893.7L418.3,896.0L418.4,894.9L418.4,891.1L418.5,889.8L418.6,896.1L418.7,895.8L418.8,893.7L418.8,891.3L418.9,893.6L419.0,894.8L419.1,899.2L419.2,899.8L419.2,894.7L419.3,896.1L419.4,896.9L419.5,896.1L419.6,897.6L419.6,901.1L419.7,901.9L419.8,901.3L419.9,900.0L420.0,899.8L420.0,897.8L420.1,899.0L420.2,896.1L420.3,894.7L420.4,898.5L420.4,898.3L420.5,896.6L420.6,889.8L420.7,897.3L420.8,898.4L420.8,897.8L420.9,901.6L421.0,901.2L421.1,900.5L421.2,899.7L421.2,895.5L421.3,891.3L421.4,891.4L421.5,888.3L421.6,893.9L421.7,894.1L421.7,893.2L421.8,897.9L421.9,894.4L422.0,896.0L422.1,900.1L422.1,897.3L422.2,899.1L422.3,900.6L422.4,899.8L422.5,899.3L422.5,895.8L422.6,898.5L422.7,894.0L422.8,890.9L422.9,891.7L422.9,891.7L423.0,889.3L423.1,895.6L423.2,893.8L423.3,893.0L423.3,898.7L423.4,900.5L423.5,899.8L423.6,898.9L423.7,900.0L423.7,896.8L423.8,896.3L423.9,893.4L424.0,895.1L424.1,896.7L424.1,893.8L424.2,894.9L424.3,889.4L424.4,891.3L424.5,892.0L424.5,895.9L424.6,892.7L424.7,884.5L424.8,891.4L424.9,873.0L424.9,879.5L425.0,887.9L425.1,888.4L425.2,893.5L425.3,893.5L425.3,890.4L425.4,891.2L425.5,893.2L425.6,896.8L425.7,895.2L425.8,896.4L425.8,898.6L425.9,894.2L426.0,885.8L426.1,889.4L426.2,887.2L426.2,880.1L426.3,881.7L426.4,886.4L426.5,889.9L426.6,884.7L426.6,894.7L426.7,897.9L426.8,896.2L426.9,898.2L427.0,900.0L427.0,899.2L427.1,898.9L427.2,899.7L427.3,897.8L427.4,898.0L427.4,899.1L427.5,899.4L427.6,900.7L427.7,899.9L427.5,877.8L427.5,867.0L427.9,898.4L428.0,895.1L428.1,894.3L428.2,894.0L428.2,896.8L428.3,896.5L428.4,898.5L428.5,898.9L428.6,896.1L428.6,894.4L428.7,896.9L428.8,889.6L428.9,886.6L429.0,886.6L429.0,886.7L429.1,883.4L429.2,890.2L429.3,890.5L429.4,889.4L429.5,896.3L429.5,899.7L429.6,898.6L429.7,899.4L429.8,898.4L429.9,900.2L429.9,898.6L430.0,893.9L430.1,894.8L430.2,889.6L430.3,893.1L430.3,896.1L430.4,897.8L430.5,900.8L430.6,900.2L430.7,899.4L430.7,898.2L430.8,898.4L430.9,898.4L431.0,898.7L431.1,901.0L431.1,901.1L431.2,900.0L431.3,900.9L431.4,899.1L431.5,893.5L431.5,885.3L431.6,891.3L431.7,895.3L431.8,891.0L431.9,895.7L431.9,897.9L432.0,893.5L432.1,898.3L432.2,899.7L432.3,897.5L432.3,898.1L432.4,898.4L432.5,896.2L432.6,893.5L432.7,896.0L432.7,896.0L432.8,893.8L432.9,885.1L433.0,890.0L433.1,895.3L433.1,896.1L433.2,894.6L433.3,893.8L433.4,899.1L433.5,899.1L433.6,900.0L433.6,897.1L433.7,896.2L433.8,897.6L433.9,889.6L434.0,897.0L434.0,898.0L434.1,895.8L434.2,894.4L434.3,897.0L434.4,896.0L434.4,894.0L434.5,891.4L434.6,896.7L434.7,898.9L434.8,899.5L434.8,899.5L434.9,898.4L435.0,900.6L435.1,892.9L435.2,888.1L435.2,889.6L435.3,892.6L435.4,885.9L435.5,890.6L435.6,891.5L435.6,897.3L435.7,896.9L435.8,899.7L435.9,899.8L436.0,897.8L436.0,899.6L436.1,899.4L436.2,901.0L436.3,901.1L436.4,900.9L436.4,899.8L436.5,897.0L436.5,876.6L436.5,870.8L436.5,856.9L436.8,899.2L436.9,899.8L437.0,899.8L437.1,900.8L437.2,900.4L437.3,899.7L437.3,899.1L437.4,899.7L437.5,899.8L437.6,898.7L437.7,898.0L437.7,897.3L437.8,897.0L437.9,897.9L438.0,895.9L438.1,898.7L438.1,892.4L438.2,896.8L438.3,896.1L438.4,890.2L438.5,889.2L438.5,889.6L438.6,894.6L438.7,889.9L438.8,894.2L438.9,894.2L438.9,896.6L439.0,897.4L439.1,899.0L439.2,900.5L439.3,898.0L439.3,899.5L439.4,899.1L439.5,899.2L439.6,899.6L439.7,900.0L439.7,899.3L439.8,898.8L439.9,901.4L440.0,901.5L440.1,901.0L440.1,899.3L440.2,899.1L440.3,896.1L440.4,897.0L440.5,897.1L440.5,897.9L440.6,897.2L440.7,901.2L440.8,900.3L440.9,899.3L441.0,899.5L441.0,900.0L441.1,898.2L441.2,899.9L441.3,898.9L441.4,897.5L441.4,900.4L441.5,901.5L441.6,901.1L441.7,899.4L441.8,899.6L441.8,900.1L441.9,899.0L442.0,898.3L442.1,899.3L442.2,898.5L442.2,895.3L442.3,896.9L442.4,892.4L442.5,892.5L442.6,885.8L442.6,887.4L442.7,887.8L442.8,894.3L442.9,882.4L443.0,895.8L443.0,894.1L443.1,895.2L443.5,883.2L443.3,900.0L443.4,900.2L443.4,898.5L443.5,898.6L443.6,898.8L443.7,901.9L443.8,902.0L443.8,901.8L443.9,901.4L444.0,901.9L444.1,899.1L444.2,899.3L444.2,896.9L444.3,900.2L444.4,900.7L444.5,899.3L444.6,899.4L444.6,899.8L444.7,896.2L444.8,896.7L444.9,898.8L445.0,900.2L445.1,899.0L445.1,897.5L445.2,893.3L445.3,894.0L445.4,894.8L445.5,894.2L445.5,882.8L445.6,887.8L445.7,883.2L445.8,891.9L445.9,896.5L445.9,898.9L446.0,898.5L446.1,899.1L446.2,896.8L446.3,895.0L446.3,895.7L446.4,897.0L446.5,899.5L446.6,899.1L446.7,897.7L446.7,891.0L446.8,890.1L446.9,896.7L447.0,890.7L447.1,889.9L447.1,893.1L447.2,898.1L447.3,897.3L447.4,899.3L447.5,898.8L447.5,900.7L447.6,900.7L447.7,899.8L447.8,898.0L447.9,895.3L447.9,891.8L448.0,895.0L448.1,895.0L448.2,891.6L448.3,896.5L448.3,896.5L448.4,896.6L448.5,897.3L448.6,889.6L448.7,896.4L448.8,896.0L448.8,897.3L448.9,898.5L449.0,897.1L449.1,899.7L449.2,900.3L449.2,899.4L449.3,897.5L449.4,897.5L449.5,898.1L449.6,901.1L449.6,901.4L449.7,901.4L449.8,902.0L449.9,900.5L450.0,900.7L450.0,899.9L450.1,900.3L450.2,899.2L450.3,892.8L450.4,898.5L450.4,898.2L450.5,896.9L450.6,899.4L450.7,900.8L450.8,898.8L450.8,895.0L450.9,890.6L451.0,898.7L451.1,889.5L451.2,895.2L451.2,896.4L451.3,885.0L451.4,894.1L451.5,880.8L451.6,887.8L451.6,897.4L451.7,889.8L451.8,894.7L451.9,898.6L452.0,898.2L452.0,894.3L452.1,893.6L452.2,892.3L452.3,897.8L452.4,898.9L452.4,899.2L452.5,894.8L452.6,895.0L452.7,896.8L452.8,900.0L452.9,901.2L452.9,900.4L453.0,898.0L453.1,896.0L453.2,895.0L453.3,898.1L453.3,896.6L453.4,893.1L453.5,899.2L453.6,892.6L453.7,893.7L453.7,897.6L453.8,891.7L453.9,899.0L454.0,901.8L454.1,901.7L454.1,900.8L454.2,900.3L454.3,898.8L454.4,899.7L454.5,897.4L454.5,894.0L454.6,894.4L454.7,896.4L454.8,897.4L454.9,899.5L454.9,891.4L455.0,894.9L455.1,892.5L455.2,898.5L455.3,899.0L455.3,898.9L455.4,898.9L455.5,898.2L455.6,898.8L455.5,877.4L455.7,898.4L455.8,899.4L455.9,895.5L456.0,893.9L456.1,896.8L456.1,895.3L456.2,893.3L456.3,895.6L456.4,898.4L456.5,899.6L456.6,893.9L456.6,898.2L456.7,898.7L456.8,898.6L456.9,899.6L457.0,899.0L457.0,898.6L457.5,872.4L457.2,898.3L457.3,895.8L457.4,895.7L457.4,889.1L457.5,885.9L457.6,890.6L457.7,897.6L457.8,898.0L457.8,899.9L457.9,895.9L458.0,896.9L458.1,898.3L458.2,900.0L458.2,900.5L458.3,898.0L458.4,898.9L458.5,895.1L458.6,896.3L458.6,897.0L458.7,900.7L458.8,900.1L458.9,900.8L459.0,899.2L459.0,898.5L459.1,900.0L459.2,897.2L459.3,899.2L459.4,898.0L459.4,898.5L459.5,898.8L459.6,900.2L459.7,896.9L459.8,895.9L459.8,899.5L459.9,900.4L460.0,899.0L460.1,899.3L460.2,898.7L460.3,897.7L460.3,898.1L460.4,899.8L460.5,895.5L460.6,892.6L460.7,892.0L460.7,895.9L460.8,895.6L460.9,899.7L461.0,898.7L461.1,900.1L461.1,898.2L461.2,899.8L461.3,900.8L461.4,901.2L461.5,900.9L461.5,902.0L461.6,900.5L461.7,899.7L461.8,893.4L461.9,896.4L461.9,899.7L462.0,897.4L462.1,898.6L462.2,898.7L462.3,898.6L462.3,897.4L462.4,897.6L462.5,896.7L462.6,898.9L462.7,898.5L462.7,899.4L462.8,898.3L462.9,897.5L463.0,894.1L463.1,898.8L463.1,897.7L463.2,898.8L463.3,897.9L463.4,899.8L463.5,898.0L463.5,897.9L463.6,898.0L463.7,892.2L463.8,890.9L463.9,894.3L463.9,892.2L464.0,896.1L464.1,896.2L464.2,895.5L464.3,887.0L464.4,876.5L464.4,883.6L464.5,886.6L464.6,897.2L464.7,898.3L464.8,900.1L464.8,896.1L464.9,896.7L465.0,899.1L465.1,898.3L465.2,894.2L465.2,895.2L465.3,897.0L465.4,894.0L465.5,894.3L465.6,896.4L465.6,899.8L465.7,899.6L465.8,899.5L465.9,897.5L466.0,898.2L466.0,898.6L466.1,897.7L466.2,895.8L466.3,888.0L466.4,896.8L466.4,898.9L466.5,893.7L466.6,895.7L466.7,898.5L466.8,897.7L466.8,893.0L466.9,893.9L467.0,895.1L467.1,895.2L467.2,897.4L467.2,899.6L467.3,893.9L467.4,897.2L467.5,897.6L467.6,893.5L467.6,898.3L467.7,899.7L467.8,897.5L467.9,897.9L468.0,897.4L468.1,897.2L468.1,888.9L468.2,895.5L468.3,898.5L468.4,896.7L468.5,893.8L468.5,896.4L468.6,897.9L468.7,901.0L468.8,901.3L468.9,900.9L468.9,900.3L469.0,900.1L469.1,899.4L469.2,898.5L469.3,893.3L469.3,896.3L469.4,893.8L469.5,898.3L469.6,898.7L469.7,899.5L469.7,900.1L469.8,899.9L469.9,898.2L470.0,899.2L470.1,901.2L470.1,899.3L470.2,894.0L470.3,893.6L470.4,895.5L470.5,897.1L470.5,896.2L470.6,887.9L470.7,889.1L470.8,895.7L470.9,894.4L470.9,898.2L471.0,895.0L471.1,896.5L471.2,895.1L471.3,897.0L471.3,900.9L471.4,900.0L471.5,900.4L471.6,899.8L471.7,896.9L471.7,899.9L471.8,900.5L471.9,901.2L472.0,900.8L472.1,899.9L472.2,899.5L472.2,898.6L472.3,896.6L472.4,893.6L472.5,900.2L472.6,901.3L472.6,900.7L472.7,901.1L472.8,899.7L472.9,896.9L473.0,899.3L473.0,899.2L473.1,899.4L473.2,897.1L473.3,898.8L473.4,899.1L473.4,897.5L473.5,898.2L473.6,899.6L473.7,895.9L473.8,899.0L473.8,900.0L473.9,895.2L474.0,896.7L474.1,894.6L474.2,898.6L474.2,901.3L474.3,899.7L474.4,899.7L474.5,900.9L474.6,900.1L474.6,900.1L474.7,899.8L474.8,898.1L474.9,899.7L475.0,898.0L475.0,899.1L475.1,897.7L475.2,895.0L475.3,889.6L475.4,887.5L475.4,896.8L475.5,899.8L475.6,897.4L475.7,899.2L475.8,900.0L475.9,900.5L475.9,894.5L476.0,899.6L476.1,899.5L476.2,899.2L476.3,898.2L476.3,899.2L476.4,899.5L476.5,899.0L476.6,898.6L476.7,899.2L476.7,899.0L476.8,898.1L476.9,900.2L477.0,901.0L477.1,898.4L477.1,898.3L477.2,895.2L477.3,898.4L477.4,896.9L477.5,899.5L477.5,897.9L477.6,898.0L477.7,895.4L477.8,898.8L477.9,897.0L477.9,898.9L478.0,900.2L478.1,899.1L478.2,900.6L478.3,899.6L478.3,899.7L478.4,898.7L478.5,898.6L478.6,898.6L478.7,899.3L478.7,900.1L478.8,900.9L478.9,899.6L479.0,899.9L479.1,896.0L479.1,893.8L479.2,897.2L479.3,896.8L479.4,894.0L479.5,898.1L479.5,901.0L479.6,899.4L479.7,900.3L479.8,901.6L479.9,901.0L480.0,900.9L480.0,899.7L480.1,896.7L480.2,891.6L480.3,892.1L480.4,892.2L480.4,898.1L480.5,895.1L480.6,894.4L480.7,898.2L480.8,899.1L480.8,900.6L480.9,900.4L481.0,900.6L481.1,900.2L481.2,901.6L481.2,900.0L481.3,899.9L481.4,900.5L481.5,900.4L481.6,901.1L481.6,900.1L481.7,900.1L481.8,900.8L481.9,900.3L482.0,900.7L482.0,900.5L482.1,900.8L482.2,898.3L482.3,897.5L482.4,897.5L482.4,896.9L482.5,895.6L482.6,890.4L482.7,894.2L482.8,894.1L482.8,894.4L482.5,889.8L483.0,893.7L483.1,897.8L483.2,897.8L483.2,899.6L483.3,900.3L483.4,900.4L483.5,901.0L483.6,898.8L483.7,899.7L483.7,897.9L483.8,897.6L483.9,899.1L484.0,897.3L484.1,901.7L484.1,901.8L484.2,899.5L484.3,899.4L484.4,900.0L484.5,898.7L484.5,900.6L484.6,901.7L484.7,901.7L484.8,902.1L484.9,901.9L484.9,901.7L485.0,901.4L485.1,901.4L485.2,902.0L485.3,901.7L485.3,902.3L485.4,902.1L485.5,900.3L485.6,899.5L485.7,900.9L485.7,900.3L485.8,900.3L485.9,900.7L486.5,891.4L486.1,901.0L486.1,900.5L486.2,899.1L486.3,898.5L486.4,893.5L486.5,895.9L486.5,901.8L486.6,902.0L486.7,901.4L486.8,901.8L486.9,900.2L486.9,901.6L487.0,901.7L487.1,901.7L487.2,901.8L487.3,900.1L487.4,900.7L487.4,899.9L487.5,900.7L487.6,898.6L487.7,897.1L487.8,891.1L487.8,897.8L487.9,898.6L488.0,898.0L488.1,899.0L488.2,900.4L488.2,901.7L488.3,901.1L488.4,900.6L488.5,900.4L488.6,900.3L488.6,900.6L488.7,900.9L488.8,902.3L488.9,901.5L489.0,901.2L489.0,900.7L489.1,901.4L489.2,901.7L489.3,901.7L489.4,901.3L489.4,901.4L489.5,900.6L489.6,900.0L489.7,899.5L489.8,898.9L489.8,899.3L489.9,900.4L490.0,901.1L490.1,901.9L490.2,902.4L490.2,902.3L490.3,901.3L490.4,901.3L490.5,901.3L490.6,901.0L490.6,901.1L490.7,901.8L490.8,902.0L490.9,900.3L491.0,900.6L491.0,898.8L491.1,897.7L491.2,899.4L491.3,896.3L491.4,896.5L491.5,900.8L491.5,901.2L491.6,900.4L491.7,901.7L491.8,901.3L491.9,900.0L491.9,900.4L492.0,900.0L492.1,900.2L492.2,899.5L492.3,898.9L492.3,899.8L492.4,901.9L492.5,901.9L492.6,901.8L492.7,900.5L492.7,900.4L492.8,901.9L492.9,901.3L493.0,901.6L493.1,901.5L493.1,900.6L493.2,899.6L493.3,892.2L493.4,890.8L493.5,895.1L493.5,894.5L493.6,896.0L493.7,899.7L493.8,900.1L493.9,898.4L493.9,897.1L494.0,897.0L494.1,893.8L494.2,894.9L494.3,893.6L494.3,897.6L494.4,899.9L494.5,899.4L494.6,898.0L494.7,897.6L494.7,897.2L494.8,893.6L494.9,896.1L495.0,895.6L495.1,898.0L495.2,898.8L495.2,897.7L495.3,892.7L495.4,896.8L495.5,899.8L495.6,898.1L495.6,894.9L495.7,896.1L495.8,898.3L495.9,898.6L496.0,899.4L496.0,901.2L496.1,900.7L496.2,899.2L496.3,900.3L496.4,897.8L496.4,901.1L496.5,899.8L496.6,901.4L496.7,901.5L496.8,901.8L496.8,902.0L496.9,899.5L497.0,899.8L497.1,896.7L497.2,891.0L497.2,893.3L497.3,897.2L497.4,899.0L497.5,900.6L497.6,900.1L497.6,898.1L497.7,900.1L497.8,901.0L497.9,900.9L498.0,898.3L498.0,899.4L498.1,896.2L498.2,899.9L498.3,899.4L498.4,896.4L498.4,899.5L498.5,900.4L498.6,899.0L498.7,899.7L498.8,899.1L498.8,898.4L498.9,896.5L499.5,892.1L499.1,898.2L499.2,898.8L499.3,897.0L499.3,896.4L499.4,896.1L499.5,899.1L499.6,898.3L499.7,900.3L499.7,897.7L499.8,899.2L499.9,902.0L500.0,902.6L500.1,902.0L500.1,900.1L500.2,899.6L500.3,898.9L500.4,899.1L500.5,899.6L500.5,900.2L500.6,901.7L500.7,901.4L500.8,900.6L500.9,901.0L500.9,900.5L501.0,899.4L501.1,901.4L501.2,901.0L501.3,901.1L501.3,899.5L501.4,898.9L501.5,898.6L501.6,901.3L501.7,900.2L501.7,901.1L501.8,901.6L501.9,901.5L502.0,900.8L502.1,901.2L502.1,898.1L502.2,894.2L502.3,898.2L502.4,898.8L502.5,900.5L502.5,901.6L502.6,901.9L502.7,900.9L502.8,900.9L502.9,901.4L503.0,901.6L503.0,902.0L503.1,901.8L503.2,901.1L503.3,898.8L503.4,898.6L503.4,899.8L503.5,900.8L503.6,895.6L503.7,898.4L503.8,899.2L503.8,901.4L503.9,901.4L504.0,901.5L504.1,901.1L504.2,899.4L504.2,898.6L504.3,900.4L504.4,901.7L504.5,901.5L504.6,900.8L504.6,901.3L504.7,901.4L504.8,900.9L504.9,901.5L505.0,900.7L505.0,901.3L505.1,898.7L505.2,899.4L505.3,900.4L505.4,900.7L505.4,901.5L505.5,901.1L505.6,901.8L505.7,900.8L505.8,900.8L505.8,901.8L505.9,901.0L506.0,900.5L506.1,901.6L506.2,900.9L506.2,901.0L506.3,900.6L506.4,901.7L506.5,900.3L506.6,901.0L506.7,900.5L506.7,898.3L506.8,899.2L506.9,898.5L507.0,896.4L507.1,899.7L507.1,900.7L507.2,900.3L507.3,899.1L507.4,900.3L507.5,898.1L507.5,896.8L507.6,898.3L507.7,899.9L507.8,896.7L507.9,899.4L507.9,898.5L508.0,901.6L508.1,901.2L508.2,900.9L508.3,900.9L508.3,899.6L508.4,899.0L508.5,900.9L508.6,899.3L508.7,899.7L508.7,897.0L508.8,898.9L508.9,899.7L509.0,899.1L509.1,900.7L509.1,900.1L509.2,900.4L509.3,901.3L509.4,900.2L509.5,899.4L509.5,901.0L509.6,899.9L509.7,897.9L509.8,897.4L509.9,899.9L509.9,900.4L510.5,892.9L510.1,899.9L510.2,901.5L510.3,901.0L510.3,900.3L510.4,901.9L510.5,900.6L510.6,900.0L510.7,901.6L510.8,901.6L510.8,900.6L510.9,901.4L511.0,902.2L511.1,902.2L511.2,902.1L511.2,901.6L511.3,900.9L511.4,901.4L511.5,902.3L511.6,902.2L511.6,902.2L511.7,901.8L511.8,900.5L511.9,901.5L512.0,899.4L512.0,899.2L512.1,897.7L512.2,901.4L512.3,901.3L512.4,900.4L512.4,901.0L512.5,900.9L512.6,901.2L512.7,901.3L512.8,901.5L512.8,900.4L512.9,901.1L513.0,901.3L513.1,899.7L513.2,900.0L513.2,900.6L513.3,895.9L513.4,901.1L513.5,900.3L513.6,900.2L513.6,895.2L513.7,896.4L513.8,899.5L513.9,900.1L514.0,901.1L514.0,898.6L514.1,899.0L514.2,899.2L514.3,899.9L514.4,899.2L514.5,900.7L514.5,900.5L514.6,900.9L514.7,900.4L514.8,900.6L514.9,900.2L514.9,898.2L515.0,898.9L515.1,898.3L515.2,899.7L515.3,900.7L515.3,900.8L515.4,901.0L515.5,900.7L515.6,900.9L515.7,901.1L515.7,901.7L515.8,900.8L515.9,901.3L516.0,901.4L516.1,900.0L516.1,896.3L516.2,893.6L516.3,893.2L516.4,890.3L516.5,896.9L516.5,894.8L516.6,894.9L516.7,897.1L516.8,897.9L516.9,897.8L516.9,900.4L517.0,899.3L517.1,898.9L517.2,899.3L517.3,901.0L517.3,900.2L517.4,901.0L517.5,899.1L517.6,900.0L517.7,899.9L517.7,901.9L517.8,901.1L517.9,901.0L518.0,899.7L518.1,897.6L518.1,900.1L518.2,901.4L518.3,901.6L518.4,900.7L518.5,900.6L518.6,899.9L518.6,900.6L518.7,901.0L518.8,901.5L518.9,899.8L519.0,898.2L519.0,897.8L519.1,892.1L519.2,888.9L519.3,896.6L519.4,895.0L519.4,895.3L519.5,894.7L519.6,898.9L519.7,898.2L519.8,898.9L519.8,895.9L519.9,897.0L520.0,897.4L520.1,895.3L520.2,898.4L520.2,895.8L520.3,891.0L520.4,894.0L520.5,897.1L520.6,898.6L520.6,899.6L520.7,899.1L520.8,900.0L520.9,896.3L521.0,896.8L521.0,896.2L521.1,898.0L521.2,897.9L521.3,897.6L521.4,898.9L521.4,899.9L521.5,901.4L521.6,901.8L521.7,901.4L521.8,898.8L521.8,899.2L521.9,900.2L522.0,899.3L522.1,898.6L522.2,898.9L522.3,899.0L522.3,901.3L522.4,899.3L522.5,901.1L522.6,901.8L522.7,902.0L522.7,902.2L522.8,902.1L522.9,901.9L523.0,900.7L523.1,901.6L523.1,901.4L523.2,901.3L523.3,901.2L523.4,901.0L523.5,897.9L523.5,899.3L523.6,899.4L523.7,899.4L523.8,897.0L523.9,894.9L523.9,896.6L524.0,896.9L524.1,897.4L524.2,899.2L524.3,899.6L524.3,898.2L524.4,901.3L524.5,901.4L524.6,900.0L524.7,899.9L524.7,899.9L524.8,899.7L524.9,897.4L525.0,896.4L525.1,899.6L525.1,897.8L525.2,899.3L525.3,900.4L525.4,900.7L525.5,901.6L525.5,901.2L525.6,901.2L525.7,902.0L525.8,901.4L525.9,899.6L525.9,901.1L526.0,901.7L526.1,902.4L526.2,901.4L526.3,901.1L526.4,901.6L526.4,900.3L526.5,900.0L526.6,894.1L526.7,897.3L526.8,896.8L526.8,898.5L526.9,896.7L527.0,899.6L527.1,897.4L527.2,899.0L527.2,899.2L527.3,899.3L527.4,899.6L527.5,900.3L527.6,900.9L527.6,901.0L527.7,900.4L527.8,900.5L527.9,899.3L528.0,899.6L528.0,898.0L528.1,899.6L528.2,897.9L528.3,901.4L528.4,902.0L528.4,901.6L528.5,900.6L528.6,898.4L528.7,899.3L528.8,897.4L528.8,898.6L528.9,900.7L529.0,899.1L529.1,898.8L529.2,899.7L529.2,899.3L529.3,899.1L529.4,899.6L529.5,899.9L529.6,900.8L529.6,900.0L529.7,901.2L529.8,901.5L529.9,899.7L530.0,900.2L530.1,898.6L530.1,900.8L530.2,902.0L530.3,901.3L530.4,901.2L530.5,901.2L530.5,901.8L530.6,901.1L530.7,902.1L530.8,901.7L530.9,900.0L530.9,900.5L531.0,899.8L531.1,901.8L531.2,902.0L531.3,901.9L531.3,901.1L531.4,901.4L531.5,901.0L531.6,900.7L531.7,901.2L531.7,900.7L531.8,901.6L531.9,900.9L532.0,899.2L532.5,882.5L532.1,901.0L532.2,901.2L532.3,900.9L532.4,900.7L532.5,900.6L532.5,901.3L532.6,900.9L532.7,899.4L532.8,900.1L532.9,897.5L532.9,896.3L533.0,895.3L533.1,896.2L533.2,898.2L533.3,896.4L533.3,898.3L533.4,899.8L533.5,897.7L533.6,897.3L533.7,901.0L533.8,899.5L533.8,899.4L533.9,900.1L534.0,900.1L534.1,900.1L534.2,901.1L534.2,899.8L534.3,896.5L534.4,894.1L534.5,895.4L534.6,899.7L534.6,900.6L534.7,901.8L534.8,901.6L534.9,901.3L535.0,900.9L535.0,901.8L535.1,901.7L535.2,902.2L535.3,902.4L535.4,902.1L535.4,902.0L535.5,900.7L535.6,898.8L535.7,898.3L535.8,896.7L535.8,897.9L535.9,901.4L536.0,901.7L536.1,901.3L536.2,898.7L536.2,900.2L536.3,901.4L536.4,902.4L536.5,902.2L536.6,901.9L536.6,901.9L536.7,901.5L536.8,899.8L536.9,900.8L537.0,901.8L537.0,900.5L537.1,901.4L537.2,901.0L537.3,898.6L537.4,899.2L537.4,897.2L537.5,899.0L537.6,898.2L537.7,897.8L537.8,896.7L537.9,899.9L537.9,898.9L538.0,900.6L538.1,900.9L538.2,901.5L538.3,901.9L538.3,902.1L538.4,901.9L538.5,900.2L538.6,901.2L538.7,899.3L538.7,900.7L538.8,899.4L538.9,901.5L539.0,900.8L539.1,900.5L539.1,898.6L539.2,901.5L539.3,901.4L539.4,902.1L539.5,901.4L539.5,902.2L539.6,902.4L539.7,901.9L539.8,901.2L539.9,900.9L539.9,900.4L540.0,901.1L540.1,899.1L540.5,884.0L540.3,901.6L540.3,901.7L540.4,901.8L540.5,900.6L540.6,899.5L540.7,899.0L540.7,900.9L540.8,900.0L540.9,901.0L541.0,901.1L541.1,900.6L541.1,901.8L541.2,901.2L541.3,901.3L541.4,901.9L541.5,900.7L541.6,900.3L541.6,900.0L541.7,901.5L541.8,900.6L541.9,900.8L542.0,901.8L542.0,901.0L542.1,900.6L542.2,900.3L542.3,899.5L542.4,900.7L542.4,900.7L542.5,900.4L542.6,899.5L542.7,901.2L542.8,901.9L542.8,900.6L542.9,900.9L543.0,902.1L543.1,901.3L543.2,901.7L543.2,901.7L543.3,901.3L543.4,901.7L543.5,902.3L543.6,902.3L543.6,902.0L543.7,902.3L543.5,879.4L543.9,901.2L544.0,900.7L544.0,900.9L544.1,901.4L544.2,900.8L544.3,900.4L544.4,901.7L544.4,902.0L544.5,901.7L544.6,901.1L544.7,899.8L544.8,898.1L544.8,899.4L544.9,900.2L545.0,899.8L545.1,901.4L545.2,901.9L545.2,900.9L545.3,901.8L545.4,901.4L545.5,900.9L545.6,901.9L545.7,901.6L545.7,900.9L545.8,898.9L545.9,896.0L546.0,897.7L546.1,899.2L546.1,899.7L546.2,901.0L546.3,901.5L546.4,901.9L546.5,899.6L546.5,899.9L546.6,900.1L546.7,897.4L546.8,899.9L546.9,899.2L546.9,897.9L547.0,898.6L547.1,899.4L547.2,898.3L547.3,894.8L547.3,898.1L547.4,889.6L547.5,889.7L547.6,898.5L547.7,899.3L547.7,900.4L547.8,898.5L547.9,893.0L548.0,894.1L548.1,897.3L548.1,899.6L548.2,898.0L548.3,900.2L548.4,896.0L548.5,894.7L548.5,889.8L548.6,894.1L548.7,889.8L548.8,895.7L548.9,896.8L548.9,896.5L549.0,898.8L549.1,899.8L549.2,896.8L549.3,900.1L549.4,896.2L549.4,898.8L549.5,900.3L549.6,901.6L549.5,887.5L549.8,902.3L549.8,901.9L549.9,901.3L550.0,900.6L550.1,900.5L550.2,900.5L550.2,898.3L550.3,899.0L550.4,899.3L550.5,899.9L550.6,900.9L550.6,901.1L550.7,901.3L550.8,901.2L550.9,894.2L551.0,892.3L551.0,898.6L551.1,901.0L551.2,901.3L551.3,901.1L551.4,900.6L551.4,900.4L551.5,901.8L551.6,902.3L551.7,902.2L551.8,902.2L551.8,902.6L551.9,902.6L552.0,902.3L552.1,902.4L552.2,902.3L552.2,901.8L552.3,900.5L552.4,901.4L552.5,901.2L552.6,901.1L552.6,901.5L552.7,901.8L552.8,900.3L552.9,901.1L553.0,901.0L553.1,900.8L553.1,898.3L553.2,899.1L553.3,895.9L553.4,894.8L553.5,898.7L553.5,898.0L553.6,900.3L553.7,900.5L553.8,900.9L553.9,899.0L553.9,900.7L554.0,899.4L554.1,899.6L554.2,898.7L554.3,901.7L554.3,901.6L554.4,901.5L554.5,898.0L554.6,893.9L554.7,897.2L554.7,898.5L554.8,901.4L554.9,901.0L555.0,901.6L555.1,900.2L555.1,901.5L555.2,901.1L555.3,901.1L555.4,901.2L555.5,901.4L555.5,901.4L555.6,902.1L555.7,901.5L555.8,900.0L555.9,901.2L555.9,901.6L556.0,902.1L556.1,901.6L556.2,901.3L556.3,902.0L556.3,902.4L556.4,902.1L556.5,901.2L556.6,899.5L556.7,900.4L556.7,900.9L556.8,898.3L556.9,896.1L557.0,899.6L557.1,901.0L557.2,902.0L557.2,901.5L557.3,901.5L557.4,901.9L557.5,901.8L557.6,902.2L557.6,901.2L557.7,901.1L557.8,900.3L557.9,901.7L558.0,902.0L558.0,901.3L558.1,900.6L558.2,900.8L558.3,901.6L558.4,901.8L558.4,901.2L558.5,901.1L558.6,901.3L558.7,900.5L558.8,901.7L558.8,901.9L558.9,901.7L559.0,900.0L559.1,901.0L559.2,899.5L559.2,900.5L559.3,899.5L559.4,898.7L559.5,896.8L559.6,897.0L559.6,897.4L559.7,899.0L559.8,897.4L559.9,896.1L560.0,898.8L560.0,901.4L560.1,900.1L560.2,899.9L560.3,900.7L560.4,901.3L560.4,901.1L560.5,901.4L560.6,900.7L560.7,901.0L560.8,900.6L560.9,902.3L560.9,902.3L561.0,902.5L561.1,902.4L561.2,902.0L561.3,901.8L561.3,901.2L561.4,901.5L561.5,902.1L561.6,901.7L561.7,901.8L561.7,901.2L561.8,900.3L561.9,899.8L562.0,901.8L562.1,901.3L562.1,901.9L562.2,901.0L562.3,901.2L562.4,900.9L562.5,899.9L562.5,900.2L562.6,898.1L562.7,900.7L562.8,901.4L562.9,898.0L562.9,897.4L563.0,894.2L563.1,895.8L563.2,898.9L563.3,896.5L563.3,894.4L563.4,896.3L563.5,899.2L563.6,898.7L563.7,896.6L563.7,899.9L563.8,900.6L563.9,901.1L564.0,900.3L564.1,897.9L564.1,900.0L564.2,899.5L564.3,896.3L564.4,899.3L564.5,897.5L564.5,900.1L564.6,901.3L564.7,901.3L564.8,900.1L564.9,900.2L565.0,901.2L565.0,901.9L565.1,901.2L565.2,898.4L565.3,895.4L565.4,897.6L565.4,899.9L565.5,899.6L565.6,901.1L565.7,901.6L565.8,901.8L565.8,901.2L565.9,898.4L566.0,900.3L566.1,901.3L566.2,899.8L566.2,900.9L566.3,899.2L566.4,900.4L566.5,901.4L566.5,867.7L566.6,901.6L566.7,902.1L566.8,902.3L566.9,902.1L567.0,901.5L567.0,899.9L567.1,900.9L567.2,900.9L567.3,900.4L567.4,898.4L567.4,899.1L567.5,901.0L567.6,899.6L567.7,901.0L567.8,900.7L567.8,900.0L567.9,898.3L568.0,899.8L568.1,900.8L568.2,901.2L568.2,901.7L568.3,898.6L568.4,899.2L568.5,899.2L568.6,900.7L568.7,900.4L568.7,899.8L568.8,900.0L568.9,897.7L569.0,899.1L569.1,897.1L569.1,899.0L569.2,900.6L569.3,900.3L569.4,901.8L569.5,902.2L569.5,901.9L569.5,891.0L569.7,901.8L569.8,901.0L569.9,899.8L569.9,898.9L570.0,898.2L570.1,900.4L570.2,900.8L570.3,901.4L570.3,901.9L570.4,902.2L570.5,900.4L570.6,901.2L570.7,900.9L570.7,900.0L570.8,899.7L570.9,900.8L571.0,900.5L571.1,901.7L571.1,902.1L571.2,901.9L571.3,901.0L571.4,899.7L571.5,898.9L571.5,899.1L571.6,898.8L571.7,896.4L571.8,899.7L571.9,900.5L571.9,901.4L572.0,901.7L572.1,901.8L572.2,901.3L572.3,901.7L572.4,901.0L572.4,901.4L572.5,900.0L572.6,898.6L572.7,900.2L572.8,900.8L572.8,900.8L572.9,900.2L573.0,900.5L573.1,899.5L573.2,901.1L573.2,901.7L573.3,900.7L573.4,899.8L573.5,899.8L573.6,900.7L573.6,901.2L573.7,901.0L573.8,901.5L573.9,901.4L574.0,901.2L574.0,897.9L574.1,899.4L574.2,900.6L574.3,901.0L574.4,899.4L574.4,901.3L574.5,900.4L574.6,899.9L574.7,899.4L574.8,897.5L574.8,899.9L574.9,899.0L575.0,900.6L575.1,899.5L575.2,899.7L575.2,897.9L575.3,899.5L575.4,901.1L575.5,900.8L575.6,900.9L575.6,901.1L575.7,900.1L575.8,899.5L575.9,900.4L576.0,899.7L576.0,899.0L576.1,896.3L576.2,896.6L576.3,898.7L576.4,901.0L576.5,899.5L576.5,901.1L576.6,901.6L576.7,901.4L576.8,901.4L576.9,902.0L576.9,902.5L577.0,902.0L577.1,901.6L577.2,901.2L577.3,896.7L577.3,898.6L577.4,898.5L577.5,897.0L577.6,895.1L577.7,896.4L577.7,900.2L577.8,899.9L577.9,899.8L578.0,899.4L578.1,901.4L578.1,899.1L578.2,900.0L578.3,900.5L578.4,896.2L578.5,889.3L578.5,895.1L578.6,895.4L578.7,900.2L578.8,900.4L578.9,900.7L578.9,902.0L579.0,900.6L579.1,901.9L579.2,898.7L579.3,901.0L579.3,902.3L579.4,901.9L579.5,900.6L579.6,902.0L579.7,901.6L579.7,901.3L579.8,901.6L579.9,901.3L580.0,901.2L580.1,901.1L580.2,901.3L580.2,901.6L580.3,901.0L580.4,900.1L580.5,901.3L580.6,901.9L580.6,899.6L580.7,900.4L580.8,901.2L580.9,902.1L581.0,901.0L581.0,900.4L581.1,901.2L581.2,899.3L581.3,897.7L581.4,900.9L581.4,901.3L581.5,900.8L581.6,900.1L581.7,898.9L581.8,901.6L581.8,902.0L581.9,901.4L582.0,900.8L577.5,896.0L578.0,871.6L578.5,857.7L578.8,839.5L579.3,881.7L579.8,851.5L580.4,879.8L580.8,889.8L581.3,898.4L581.7,887.5L582.0,843.7L582.4,832.5L582.7,770.1L583.0,732.9L583.3,744.9L583.5,710.0L583.8,689.9L583.6,669.0L583.9,631.8L584.0,606.2L583.6,604.6L584.5,613.1L584.6,656.2L584.2,637.6L583.5,660.0L584.0,672.4L585.2,683.7L584.4,697.6L585.8,717.0L584.8,725.1L585.2,736.0L584.4,752.6L585.0,762.3L585.8,801.1L582.8,819.7L585.0,856.5L582.5,864.2L585.4,868.5L582.8,873.9L585.6,879.8L583.0,885.6L585.8,887.5L584.0,892.1L586.0,899.1" fill="none" stroke="#1f77b4" stroke-width="1"/>
<g class="dots" fill="#fff" stroke="#1f77b4" stroke-width="1"><circle cx="180.0" cy="901.9" fill="none"/><circle cx="180.1" cy="901.8" fill="none"/><circle cx="180.2" cy="902.6" fill="none"/><circle cx="180.2" cy="902.4" fill="none"/><circle cx="180.3" cy="902.4" fill="none"/><circle cx="180.4" cy="902.2" fill="none"/><circle cx="180.5" cy="902.3" fill="none"/><circle cx="180.6" cy="901.6" fill="none"/><circle cx="180.6" cy="901.8" fill="none"/><circle cx="180.7" cy="901.0"/><circle cx="180.8" cy="900.6"/><circle cx="180.9" cy="901.9" fill="none"/><circle cx="181.0" cy="902.6" fill="none"/><circle cx="181.0" cy="902.5" fill="none"/><circle cx="181.1" cy="902.3" fill="none"/><circle cx="181.2" cy="902.1" fill="none"/><circle cx="181.3" cy="902.2" fill="none"/><circle cx="181.4" cy="900.8"/><circle cx="181.4" cy="901.3"/><circle cx="181.5" cy="900.1"/><circle cx="181.6" cy="902.0" fill="none"/><circle cx="181.7" cy="901.7" fill="none"/><circle cx="181.8" cy="901.8" fill="none"/><circle cx="181.8" cy="901.2"/><circle cx="181.9" cy="898.3"/><circle cx="182.0" cy="900.7"/><circle cx="182.1" cy="901.6" fill="none"/><circle cx="182.2" cy="901.7" fill="none"/><circle cx="182.3" cy="901.9" fill="none"/><circle cx="182.3" cy="901.9" fill="none"/><circle cx="182.4" cy="901.9" fill="none"/><circle cx="182.5" cy="902.1" fill="none"/><circle cx="182.6" cy="902.0" fill="none"/><circle cx="182.7" cy="902.1" fill="none"/><circle cx="182.7" cy="901.3"/><circle cx="182.8" cy="901.8" fill="none"/><circle cx="182.9" cy="901.3"/><circle cx="183.0" cy="901.1"/><circle cx="183.1" cy="901.2"/><circle cx="183.1" cy="900.5"/><circle cx="183.2" cy="902.1" fill="none"/><circle cx="183.3" cy="901.9" fill="none"/><circle cx="183.4" cy="902.2" fill="none"/><circle cx="183.5" cy="902.7" fill="none"/><circle cx="183.5" cy="902.6" fill="none"/><circle cx="183.6" cy="902.4" fill="none"/><circle cx="183.7" cy="902.7" fill="none"/><circle cx="183.8" cy="902.5" fill="none"/><circle cx="183.9" cy="902.6" fill="none"/><circle cx="183.9" cy="902.6" fill="none"/><circle cx="184.0" cy="901.9" fill="none"/><circle cx="184.1" cy="901.2"/><circle cx="184.2" cy="900.9"/><circle cx="184.3" cy="900.9"/><circle cx="184.3" cy="901.8" fill="none"/><circle cx="184.4" cy="900.4"/><circle cx="184.5" cy="899.7"/><circle cx="184.6" cy="899.7"/><circle cx="184.7" cy="898.5"/><circle cx="184.7" cy="899.7"/><circle cx="184.8" cy="900.5"/><circle cx="184.9" cy="900.2"/><circle cx="185.0" cy="899.9"/><circle cx="185.1" cy="898.2"/><circle cx="185.1" cy="900.3"/><circle cx="185.2" cy="898.3"/><circle cx="185.3" cy="899.7"/><circle cx="185.4" cy="899.2"/><circle cx="185.5" cy="899.8"/><circle cx="185.5" cy="901.9" fill="none"/><circle cx="185.6" cy="901.9" fill="none"/><circle cx="185.7" cy="902.0" fill="none"/><circle cx="185.8" cy="902.1" fill="none"/><circle cx="185.9" cy="900.0"/><circle cx="186.0" cy="901.1"/><circle cx="186.0" cy="900.8"/><circle cx="186.1" cy="900.5"/><circle cx="186.2" cy="901.3"/><circle cx="186.3" cy="902.2" fill="none"/><circle cx="186.4" cy="902.4" fill="none"/><circle cx="186.4" cy="901.5" fill="none"/><circle cx="186.5" cy="902.0" fill="none"/><circle cx="186.6" cy="901.7" fill="none"/><circle cx="186.7" cy="901.6" fill="none"/><circle cx="186.8" cy="902.2" fill="none"/><circle cx="186.8" cy="901.6" fill="none"/><circle cx="186.9" cy="901.4"/><circle cx="187.0" cy="902.2" fill="none"/><circle cx="187.1" cy="902.4" fill="none"/><circle cx="187.2" cy="902.4" fill="none"/><circle cx="187.2" cy="901.8" fill="none"/><circle cx="187.3" cy="902.1" fill="none"/><circle cx="187.4" cy="902.6" fill="none"/><circle cx="187.5" cy="901.8" fill="none"/><circle cx="187.6" cy="902.2" fill="none"/><circle cx="187.6" cy="902.3" fill="none"/><circle cx="187.7" cy="902.4" fill="none"/><circle cx="187.8" cy="902.7" fill="none"/><circle cx="187.9" cy="902.2" fill="none"/><circle cx="188.0" cy="901.6" fill="none"/><circle cx="188.0" cy="900.8"/><circle cx="188.1" cy="900.9"/><circle cx="188.2" cy="896.1"/><circle cx="188.3" cy="900.7"/><circle cx="188.4" cy="901.0"/><circle cx="188.4" cy="901.5" fill="none"/><circle cx="188.5" cy="902.5" fill="none"/><circle cx="188.6" cy="902.5" fill="none"/><circle cx="188.7" cy="902.4" fill="none"/><circle cx="188.8" cy="902.3" fill="none"/><circle cx="188.8" cy="902.3" fill="none"/><circle cx="188.9" cy="902.2" fill="none"/><circle cx="189.0" cy="902.0" fill="none"/><circle cx="189.1" cy="902.1" fill="none"/><circle cx="189.2" cy="901.2"/><circle cx="189.2" cy="901.5" fill="none"/><circle cx="189.3" cy="900.3"/><circle cx="189.4" cy="898.9"/><circle cx="189.5" cy="899.9"/><circle cx="189.6" cy="901.4"/><circle cx="189.6" cy="901.2"/><circle cx="189.7" cy="900.0"/><circle cx="189.8" cy="902.1" fill="none"/><circle cx="189.9" cy="902.2" fill="none"/><circle cx="190.0" cy="900.2"/><circle cx="190.1" cy="901.0"/><circle cx="190.1" cy="901.7" fill="none"/><circle cx="190.2" cy="902.1" fill="none"/><circle cx="190.3" cy="902.2" fill="none"/><circle cx="190.4" cy="902.3" fill="none"/><circle cx="190.5" cy="902.5" fill="none"/><circle cx="190.5" cy="902.3" fill="none"/><circle cx="190.6" cy="902.2" fill="none"/><circle cx="190.7" cy="902.5" fill="none"/><circle cx="190.8" cy="901.8" fill="none"/><circle cx="190.9" cy="901.1"/><circle cx="190.9" cy="901.6" fill="none"/><circle cx="191.0" cy="901.8" fill="none"/><circle cx="191.1" cy="901.5" fill="none"/><circle cx="191.2" cy="901.6" fill="none"/><circle cx="191.3" cy="901.2"/><circle cx="191.3" cy="900.3"/><circle cx="191.4" cy="898.7"/><circle cx="191.5" cy="898.2"/><circle cx="191.6" cy="900.0"/><circle cx="191.7" cy="900.9"/><circle cx="191.7" cy="902.1" fill="none"/><circle cx="191.8" cy="901.9" fill="none"/><circle cx="191.9" cy="900.6"/><circle cx="192.0" cy="900.3"/><circle cx="192.1" cy="901.3" fill="none"/><circle cx="192.1" cy="901.2"/><circle cx="192.2" cy="901.6" fill="none"/><circle cx="192.3" cy="901.6" fill="none"/><circle cx="192.4" cy="901.9" fill="none"/><circle cx="192.5" cy="900.6"/><circle cx="192.5" cy="902.2" fill="none"/><circle cx="192.6" cy="902.4" fill="none"/><circle cx="192.7" cy="902.0" fill="none"/><circle cx="192.8" cy="902.6" fill="none"/><circle cx="192.9" cy="902.5" fill="none"/><circle cx="192.9" cy="902.6" fill="none"/><circle cx="193.0" cy="902.4" fill="none"/><circle cx="193.1" cy="902.2" fill="none"/><circle cx="193.2" cy="902.1" fill="none"/><circle cx="193.3" cy="902.0" fill="none"/><circle cx="193.3" cy="902.0" fill="none"/><circle cx="193.4" cy="900.5"/><circle cx="193.5" cy="901.2"/><circle cx="193.6" cy="902.0" fill="none"/><circle cx="193.7" cy="901.8" fill="none"/><circle cx="193.8" cy="902.4" fill="none"/><circle cx="193.8" cy="902.5" fill="none"/><circle cx="193.9" cy="902.0" fill="none"/><circle cx="194.0" cy="901.8" fill="none"/><circle cx="194.1" cy="901.8" fill="none"/><circle cx="194.2" cy="901.0"/><circle cx="194.2" cy="901.8" fill="none"/><circle cx="194.3" cy="902.5" fill="none"/><circle cx="194.4" cy="901.9" fill="none"/><circle cx="194.5" cy="901.9" fill="none"/><circle cx="194.6" cy="899.6"/><circle cx="194.6" cy="901.7" fill="none"/><circle cx="194.7" cy="901.7" fill="none"/><circle cx="194.8" cy="901.9" fill="none"/><circle cx="194.9" cy="901.7" fill="none"/><circle cx="195.0" cy="901.7" fill="none"/><circle cx="195.0" cy="901.9" fill="none"/><circle cx="195.1" cy="900.7"/><circle cx="195.2" cy="899.8"/><circle cx="195.3" cy="900.0"/><circle cx="195.4" cy="899.8"/><circle cx="195.4" cy="900.1"/><circle cx="195.5" cy="901.9" fill="none"/><circle cx="195.6" cy="902.2" fill="none"/><circle cx="195.7" cy="901.9" fill="none"/><circle cx="195.8" cy="901.7" fill="none"/><circle cx="195.8" cy="900.1"/><circle cx="195.9" cy="901.3" fill="none"/><circle cx="196.0" cy="901.5" fill="none"/><circle cx="196.1" cy="901.5" fill="none"/><circle cx="196.2" cy="901.3" fill="none"/><circle cx="196.2" cy="900.2"/><circle cx="196.3" cy="901.4" fill="none"/><circle cx="196.4" cy="900.6"/><circle cx="196.5" cy="900.5"/><circle cx="196.6" cy="901.9" fill="none"/><circle cx="196.6" cy="902.3" fill="none"/><circle cx="196.7" cy="902.2" fill="none"/><circle cx="196.8" cy="900.9"/><circle cx="196.9" cy="900.8"/><circle cx="197.0" cy="900.4"/><circle cx="197.0" cy="900.5"/><circle cx="197.1" cy="901.7" fill="none"/><circle cx="197.2" cy="902.0" fill="none"/><circle cx="197.3" cy="902.5" fill="none"/><circle cx="197.4" cy="901.9" fill="none"/><circle cx="197.5" cy="902.0" fill="none"/><circle cx="197.5" cy="901.1"/><circle cx="197.6" cy="901.3" fill="none"/><circle cx="197.7" cy="902.2" fill="none"/><circle cx="197.8" cy="902.2" fill="none"/><circle cx="197.9" cy="901.5" fill="none"/><circle cx="197.9" cy="901.7" fill="none"/><circle cx="198.0" cy="901.6" fill="none"/><circle cx="198.1" cy="902.3" fill="none"/><circle cx="198.2" cy="902.3" fill="none"/><circle cx="198.3" cy="901.7" fill="none"/><circle cx="198.3" cy="901.7" fill="none"/><circle cx="198.4" cy="901.5" fill="none"/><circle cx="198.5" cy="901.4" fill="none"/><circle cx="198.6" cy="901.9" fill="none"/><circle cx="198.7" cy="901.8" fill="none"/><circle cx="198.7" cy="901.7" fill="none"/><circle cx="198.8" cy="902.0" fill="none"/><circle cx="198.9" cy="900.6"/><circle cx="199.0" cy="898.7"/><circle cx="199.1" cy="897.3"/><circle cx="199.1" cy="899.3"/><circle cx="199.2" cy="901.6" fill="none"/><circle cx="199.3" cy="901.0"/><circle cx="199.4" cy="901.6" fill="none"/><circle cx="199.5" cy="901.0"/><circle cx="199.5" cy="901.4" fill="none"/><circle cx="199.6" cy="901.9" fill="none"/><circle cx="199.7" cy="902.5" fill="none"/><circle cx="199.8" cy="902.2" fill="none"/><circle cx="199.9" cy="901.7" fill="none"/><circle cx="199.9" cy="901.2" fill="none"/><circle cx="200.0" cy="900.4"/><circle cx="200.1" cy="901.9" fill="none"/><circle cx="200.2" cy="901.7" fill="none"/><circle cx="200.3" cy="901.0"/><circle cx="200.3" cy="900.0"/><circle cx="200.4" cy="901.8" fill="none"/><circle cx="200.5" cy="901.5" fill="none"/><circle cx="200.6" cy="900.6"/><circle cx="200.7" cy="900.2"/><circle cx="200.7" cy="901.4" fill="none"/><circle cx="200.8" cy="900.6"/><circle cx="200.9" cy="900.6"/><circle cx="201.0" cy="899.0"/><circle cx="201.1" cy="900.8"/><circle cx="201.1" cy="900.9"/><circle cx="201.2" cy="901.0"/><circle cx="201.3" cy="900.5"/><circle cx="201.4" cy="901.8" fill="none"/><circle cx="201.5" cy="901.8" fill="none"/><circle cx="201.6" cy="902.3" fill="none"/><circle cx="201.6" cy="902.2" fill="none"/><circle cx="201.7" cy="902.2" fill="none"/><circle cx="201.8" cy="902.1" fill="none"/><circle cx="201.9" cy="901.5" fill="none"/><circle cx="202.0" cy="901.2" fill="none"/><circle cx="202.0" cy="900.9"/><circle cx="202.1" cy="900.7"/><circle cx="202.2" cy="901.1"/><circle cx="202.3" cy="901.6" fill="none"/><circle cx="202.4" cy="901.4" fill="none"/><circle cx="202.4" cy="902.3" fill="none"/><circle cx="202.5" cy="902.0" fill="none"/><circle cx="202.6" cy="902.1" fill="none"/><circle cx="202.7" cy="902.2" fill="none"/><circle cx="202.8" cy="902.0" fill="none"/><circle cx="202.8" cy="901.8" fill="none"/><circle cx="202.9" cy="902.2" fill="none"/><circle cx="203.0" cy="902.1" fill="none"/><circle cx="203.1" cy="901.6" fill="none"/><circle cx="203.2" cy="902.0" fill="none"/><circle cx="203.2" cy="901.4" fill="none"/><circle cx="203.3" cy="902.2" fill="none"/><circle cx="203.4" cy="902.3" fill="none"/><circle cx="203.5" cy="901.8" fill="none"/><circle cx="203.6" cy="901.9" fill="none"/><circle cx="203.6" cy="902.0" fill="none"/><circle cx="203.7" cy="901.6" fill="none"/><circle cx="203.8" cy="901.1"/><circle cx="203.9" cy="901.3" fill="none"/><circle cx="204.0" cy="901.1"/><circle cx="204.0" cy="901.2" fill="none"/><circle cx="204.1" cy="901.6" fill="none"/><circle cx="204.2" cy="901.4" fill="none"/><circle cx="204.3" cy="901.6" fill="none"/><circle cx="204.4" cy="902.4" fill="none"/><circle cx="204.4" cy="902.4" fill="none"/><circle cx="204.5" cy="902.0" fill="none"/><circle cx="204.6" cy="901.9" fill="none"/><circle cx="204.7" cy="901.8" fill="none"/><circle cx="204.8" cy="902.0" fill="none"/><circle cx="204.8" cy="902.4" fill="none"/><circle cx="204.9" cy="902.5" fill="none"/><circle cx="205.0" cy="902.6" fill="none"/><circle cx="205.1" cy="902.7" fill="none"/><circle cx="205.2" cy="902.4" fill="none"/><circle cx="205.3" cy="902.4" fill="none"/><circle cx="205.3" cy="902.5" fill="none"/><circle cx="205.4" cy="902.2" fill="none"/><circle cx="205.5" cy="901.7" fill="none"/><circle cx="205.6" cy="902.3" fill="none"/><circle cx="205.7" cy="901.8" fill="none"/><circle cx="205.7" cy="902.3" fill="none"/><circle cx="205.8" cy="900.3"/><circle cx="205.9" cy="900.4"/><circle cx="206.0" cy="902.1" fill="none"/><circle cx="206.1" cy="901.3" fill="none"/><circle cx="206.1" cy="901.9" fill="none"/><circle cx="206.2" cy="901.6" fill="none"/><circle cx="206.3" cy="900.0"/><circle cx="206.4" cy="899.3"/><circle cx="206.5" cy="901.6" fill="none"/><circle cx="206.5" cy="901.5" fill="none"/><circle cx="206.6" cy="901.9" fill="none"/><circle cx="206.7" cy="901.6" fill="none"/><circle cx="206.8" cy="901.8" fill="none"/><circle cx="206.9" cy="901.8" fill="none"/><circle cx="206.9" cy="900.5"/><circle cx="207.0" cy="901.4" fill="none"/><circle cx="207.1" cy="900.3"/><circle cx="207.2" cy="901.5" fill="none"/><circle cx="207.3" cy="901.7" fill="none"/><circle cx="207.3" cy="902.3" fill="none"/><circle cx="207.4" cy="901.5" fill="none"/><circle cx="207.5" cy="901.5" fill="none"/><circle cx="207.6" cy="902.2" fill="none"/><circle cx="207.7" cy="902.0" fill="none"/><circle cx="207.7" cy="902.0" fill="none"/><circle cx="207.8" cy="902.1" fill="none"/><circle cx="207.9" cy="902.2" fill="none"/><circle cx="208.0" cy="901.7" fill="none"/><circle cx="208.5" cy="891.4"/><circle cx="208.1" cy="901.2" fill="none"/><circle cx="208.2" cy="900.8"/><circle cx="208.3" cy="900.1"/><circle cx="208.4" cy="899.1"/><circle cx="208.5" cy="899.5"/><circle cx="208.5" cy="901.0"/><circle cx="208.6" cy="900.3"/><circle cx="208.7" cy="901.8" fill="none"/><circle cx="208.8" cy="902.0" fill="none"/><circle cx="208.9" cy="901.2" fill="none"/><circle cx="208.9" cy="902.2" fill="none"/><circle cx="209.0" cy="902.3" fill="none"/><circle cx="209.1" cy="902.5" fill="none"/><circle cx="209.2" cy="902.2" fill="none"/><circle cx="209.3" cy="902.4" fill="none"/><circle cx="209.4" cy="902.1" fill="none"/><circle cx="209.4" cy="901.9" fill="none"/><circle cx="209.5" cy="900.3"/><circle cx="209.6" cy="897.4"/><circle cx="209.7" cy="900.3"/><circle cx="209.8" cy="901.3" fill="none"/><circle cx="209.8" cy="901.4" fill="none"/><circle cx="209.9" cy="901.7" fill="none"/><circle cx="210.0" cy="901.8" fill="none"/><circle cx="210.1" cy="901.8" fill="none"/><circle cx="210.2" cy="901.1" fill="none"/><circle cx="210.2" cy="899.8"/><circle cx="210.3" cy="901.6" fill="none"/><circle cx="210.4" cy="901.2" fill="none"/><circle cx="210.5" cy="901.2" fill="none"/><circle cx="210.6" cy="901.9" fill="none"/><circle cx="210.6" cy="901.8" fill="none"/><circle cx="210.7" cy="902.0" fill="none"/><circle cx="210.8" cy="901.8" fill="none"/><circle cx="210.9" cy="901.6" fill="none"/><circle cx="211.0" cy="902.3" fill="none"/><circle cx="211.0" cy="902.3" fill="none"/><circle cx="211.1" cy="902.0" fill="none"/><circle cx="211.2" cy="902.2" fill="none"/><circle cx="211.3" cy="902.7" fill="none"/><circle cx="211.4" cy="902.2" fill="none"/><circle cx="211.4" cy="902.1" fill="none"/><circle cx="211.5" cy="901.6" fill="none"/><circle cx="211.6" cy="901.9" fill="none"/><circle cx="211.7" cy="902.2" fill="none"/><circle cx="211.8" cy="901.5" fill="none"/><circle cx="211.8" cy="901.4" fill="none"/><circle cx="211.9" cy="901.7" fill="none"/><circle cx="212.0" cy="901.4" fill="none"/><circle cx="212.1" cy="901.7" fill="none"/><circle cx="212.2" cy="901.4" fill="none"/><circle cx="212.2" cy="900.8"/><circle cx="212.3" cy="901.0"/><circle cx="212.4" cy="901.5" fill="none"/><circle cx="212.5" cy="900.9"/><circle cx="212.6" cy="899.8"/><circle cx="212.6" cy="900.2"/><circle cx="212.7" cy="900.6"/><circle cx="212.8" cy="900.9"/><circle cx="212.9" cy="901.5" fill="none"/><circle cx="213.0" cy="901.0"/><circle cx="213.1" cy="901.5" fill="none"/><circle cx="213.1" cy="901.7" fill="none"/><circle cx="213.2" cy="901.4" fill="none"/><circle cx="213.3" cy="900.0"/><circle cx="213.4" cy="898.9"/><circle cx="213.5" cy="901.1" fill="none"/><circle cx="213.5" cy="899.7"/><circle cx="213.6" cy="899.3"/><circle cx="213.7" cy="900.0"/><circle cx="213.8" cy="899.2"/><circle cx="213.9" cy="899.7"/><circle cx="213.9" cy="897.1"/><circle cx="214.5" cy="894.1"/><circle cx="214.1" cy="898.5"/><circle cx="214.2" cy="900.3"/><circle cx="214.3" cy="900.9"/><circle cx="214.3" cy="900.3"/><circle cx="214.4" cy="902.0" fill="none"/><circle cx="214.5" cy="901.3" fill="none"/><circle cx="214.6" cy="900.1"/><circle cx="214.7" cy="901.8" fill="none"/><circle cx="214.7" cy="902.0" fill="none"/><circle cx="214.8" cy="901.3" fill="none"/><circle cx="214.9" cy="901.9" fill="none"/><circle cx="215.0" cy="902.3" fill="none"/><circle cx="215.1" cy="901.1" fill="none"/><circle cx="215.1" cy="901.5" fill="none"/><circle cx="215.2" cy="899.9"/><circle cx="215.3" cy="899.1"/><circle cx="215.4" cy="899.5"/><circle cx="215.5" cy="901.0"/><circle cx="215.5" cy="900.1"/><circle cx="215.6" cy="900.0"/><circle cx="215.7" cy="901.1" fill="none"/><circle cx="215.8" cy="901.7" fill="none"/><circle cx="215.9" cy="901.8" fill="none"/><circle cx="215.9" cy="902.2" fill="none"/><circle cx="216.0" cy="902.2" fill="none"/><circle cx="216.1" cy="901.8" fill="none"/><circle cx="216.2" cy="902.1" fill="none"/><circle cx="216.3" cy="902.1" fill="none"/><circle cx="216.3" cy="902.1" fill="none"/><circle cx="216.4" cy="902.0" fill="none"/><circle cx="216.5" cy="902.1" fill="none"/><circle cx="216.6" cy="901.8" fill="none"/><circle cx="216.7" cy="900.8"/><circle cx="216.8" cy="901.9" fill="none"/><circle cx="216.8" cy="902.0" fill="none"/><circle cx="216.9" cy="901.9" fill="none"/><circle cx="217.0" cy="901.0"/><circle cx="217.1" cy="901.3" fill="none"/><circle cx="217.2" cy="901.7" fill="none"/><circle cx="217.2" cy="901.0"/><circle cx="217.3" cy="901.3" fill="none"/><circle cx="217.4" cy="901.9" fill="none"/><circle cx="217.5" cy="901.7" fill="none"/><circle cx="217.6" cy="901.5" fill="none"/><circle cx="217.6" cy="901.9" fill="none"/><circle cx="217.7" cy="902.4" fill="none"/><circle cx="217.8" cy="902.4" fill="none"/><circle cx="217.9" cy="902.0" fill="none"/><circle cx="218.0" cy="901.7" fill="none"/><circle cx="218.0" cy="902.3" fill="none"/><circle cx="218.1" cy="902.5" fill="none"/><circle cx="218.2" cy="901.9" fill="none"/><circle cx="218.3" cy="902.4" fill="none"/><circle cx="218.4" cy="901.9" fill="none"/><circle cx="218.4" cy="901.4" fill="none"/><circle cx="218.5" cy="899.2"/><circle cx="218.6" cy="901.6" fill="none"/><circle cx="218.7" cy="900.9"/><circle cx="218.8" cy="901.5" fill="none"/><circle cx="218.8" cy="901.5" fill="none"/><circle cx="218.9" cy="902.0" fill="none"/><circle cx="219.0" cy="901.3" fill="none"/><circle cx="219.1" cy="900.9"/><circle cx="219.2" cy="901.8" fill="none"/><circle cx="219.2" cy="902.3" fill="none"/><circle cx="219.3" cy="902.0" fill="none"/><circle cx="219.4" cy="902.1" fill="none"/><circle cx="219.5" cy="901.8" fill="none"/><circle cx="219.6" cy="901.6" fill="none"/><circle cx="219.6" cy="901.3" fill="none"/><circle cx="219.7" cy="901.3" fill="none"/><circle cx="219.8" cy="901.7" fill="none"/><circle cx="219.9" cy="900.9"/><circle cx="220.0" cy="900.3"/><circle cx="220.0" cy="900.8"/><circle cx="220.1" cy="900.6"/><circle cx="220.2" cy="900.9"/><circle cx="220.3" cy="901.2" fill="none"/><circle cx="220.4" cy="901.6" fill="none"/><circle cx="220.4" cy="900.4"/><circle cx="220.5" cy="901.2" fill="none"/><circle cx="220.6" cy="899.9"/><circle cx="220.7" cy="899.7"/><circle cx="220.8" cy="899.6"/><circle cx="220.9" cy="899.4"/><circle cx="220.9" cy="899.6"/><circle cx="221.0" cy="901.4" fill="none"/><circle cx="221.1" cy="902.2" fill="none"/><circle cx="221.2" cy="902.3" fill="none"/><circle cx="221.3" cy="902.3" fill="none"/><circle cx="221.3" cy="902.1" fill="none"/><circle cx="221.4" cy="902.0" fill="none"/><circle cx="221.5" cy="901.7" fill="none"/><circle cx="221.6" cy="902.3" fill="none"/><circle cx="221.7" cy="902.1" fill="none"/><circle cx="221.7" cy="902.3" fill="none"/><circle cx="221.8" cy="902.3" fill="none"/><circle cx="221.9" cy="902.4" fill="none"/><circle cx="222.0" cy="902.2" fill="none"/><circle cx="222.1" cy="902.4" fill="none"/><circle cx="222.1" cy="901.9" fill="none"/><circle cx="222.2" cy="901.4" fill="none"/><circle cx="222.3" cy="901.9" fill="none"/><circle cx="222.4" cy="902.1" fill="none"/><circle cx="222.5" cy="902.0" fill="none"/><circle cx="222.5" cy="901.2" fill="none"/><circle cx="222.6" cy="900.8"/><circle cx="222.7" cy="901.6" fill="none"/><circle cx="222.8" cy="901.7" fill="none"/><circle cx="222.9" cy="902.2" fill="none"/><circle cx="222.9" cy="902.2" fill="none"/><circle cx="223.0" cy="902.4" fill="none"/><circle cx="223.1" cy="902.1" fill="none"/><circle cx="223.2" cy="902.1" fill="none"/><circle cx="223.3" cy="902.0" fill="none"/><circle cx="223.3" cy="902.4" fill="none"/><circle cx="223.4" cy="902.4" fill="none"/><circle cx="223.5" cy="902.4" fill="none"/><circle cx="223.6" cy="901.7" fill="none"/><circle cx="223.7" cy="902.4" fill="none"/><circle cx="223.7" cy="902.5" fill="none"/><circle cx="223.8" cy="902.5" fill="none"/><circle cx="223.9" cy="902.3" fill="none"/><circle cx="224.0" cy="902.3" fill="none"/><circle cx="224.1" cy="901.6" fill="none"/><circle cx="224.1" cy="900.3"/><circle cx="224.2" cy="902.0" fill="none"/><circle cx="224.3" cy="901.2" fill="none"/><circle cx="224.4" cy="900.7"/><circle cx="224.5" cy="900.2"/><circle cx="224.6" cy="900.2"/><circle cx="224.6" cy="900.9"/><circle cx="224.7" cy="901.5" fill="none"/><circle cx="224.8" cy="901.9" fill="none"/><circle cx="224.9" cy="902.2" fill="none"/><circle cx="225.0" cy="901.9" fill="none"/><circle cx="225.0" cy="901.8" fill="none"/><circle cx="225.1" cy="901.7" fill="none"/><circle cx="225.2" cy="901.5" fill="none"/><circle cx="225.3" cy="902.3" fill="none"/><circle cx="225.4" cy="902.1" fill="none"/><circle cx="225.4" cy="902.3" fill="none"/><circle cx="225.5" cy="902.4" fill="none"/><circle cx="225.6" cy="902.2" fill="none"/><circle cx="225.7" cy="901.7" fill="none"/><circle cx="225.8" cy="901.8" fill="none"/><circle cx="225.8" cy="901.5" fill="none"/><circle cx="225.9" cy="900.1"/><circle cx="226.0" cy="899.8"/><circle cx="226.1" cy="899.8"/><circle cx="226.2" cy="901.1" fill="none"/><circle cx="226.2" cy="900.4"/><circle cx="226.3" cy="901.1" fill="none"/><circle cx="226.4" cy="899.5"/><circle cx="226.5" cy="896.6"/><circle cx="226.6" cy="899.9"/><circle cx="226.6" cy="900.1"/><circle cx="226.7" cy="900.3"/><circle cx="226.8" cy="898.6"/><circle cx="226.9" cy="901.1" fill="none"/><circle cx="227.0" cy="899.9"/><circle cx="227.0" cy="898.9"/><circle cx="227.1" cy="899.7"/><circle cx="227.2" cy="899.5"/><circle cx="227.3" cy="900.3"/><circle cx="227.4" cy="900.2"/><circle cx="227.4" cy="900.7"/><circle cx="227.5" cy="901.8" fill="none"/><circle cx="227.6" cy="902.0" fill="none"/><circle cx="227.7" cy="902.0" fill="none"/><circle cx="227.8" cy="901.5" fill="none"/><circle cx="227.8" cy="901.7" fill="none"/><circle cx="227.9" cy="901.3" fill="none"/><circle cx="228.5" cy="897.2"/><circle cx="228.1" cy="901.0"/><circle cx="228.2" cy="900.6"/><circle cx="228.2" cy="901.7" fill="none"/><circle cx="228.3" cy="901.5" fill="none"/><circle cx="228.4" cy="900.6"/><circle cx="228.5" cy="899.7"/><circle cx="228.6" cy="894.2"/><circle cx="228.7" cy="897.5"/><circle cx="228.7" cy="898.9"/><circle cx="228.8" cy="899.7"/><circle cx="228.9" cy="901.0"/><circle cx="229.0" cy="901.1" fill="none"/><circle cx="229.1" cy="901.9" fill="none"/><circle cx="229.1" cy="901.9" fill="none"/><circle cx="229.2" cy="898.5"/><circle cx="229.3" cy="900.5"/><circle cx="229.4" cy="899.7"/><circle cx="229.5" cy="898.2"/><circle cx="229.5" cy="896.4"/><circle cx="229.6" cy="897.2"/><circle cx="229.7" cy="898.4"/><circle cx="229.8" cy="898.0"/><circle cx="229.9" cy="897.4"/><circle cx="229.9" cy="900.9"/><circle cx="230.0" cy="899.3"/><circle cx="230.1" cy="899.9"/><circle cx="230.2" cy="899.1"/><circle cx="230.3" cy="898.2"/><circle cx="230.3" cy="898.9"/><circle cx="230.4" cy="901.1" fill="none"/><circle cx="230.5" cy="902.1" fill="none"/><circle cx="230.6" cy="901.4" fill="none"/><circle cx="230.7" cy="901.8" fill="none"/><circle cx="230.7" cy="902.3" fill="none"/><circle cx="230.8" cy="902.3" fill="none"/><circle cx="230.9" cy="902.1" fill="none"/><circle cx="231.0" cy="900.9"/><circle cx="231.1" cy="901.8" fill="none"/><circle cx="231.1" cy="901.4" fill="none"/><circle cx="231.2" cy="901.3" fill="none"/><circle cx="231.3" cy="901.6" fill="none"/><circle cx="231.4" cy="902.1" fill="none"/><circle cx="231.5" cy="901.0"/><circle cx="231.5" cy="901.3" fill="none"/><circle cx="231.6" cy="901.1" fill="none"/><circle cx="231.7" cy="901.4" fill="none"/><circle cx="231.8" cy="899.4"/><circle cx="231.9" cy="899.8"/><circle cx="231.9" cy="900.8"/><circle cx="232.0" cy="900.1"/><circle cx="232.1" cy="900.4"/><circle cx="232.2" cy="901.5" fill="none"/><circle cx="232.3" cy="902.2" fill="none"/><circle cx="232.4" cy="902.2" fill="none"/><circle cx="232.4" cy="902.2" fill="none"/><circle cx="232.5" cy="902.5" fill="none"/><circle cx="232.6" cy="902.7" fill="none"/><circle cx="232.7" cy="902.5" fill="none"/><circle cx="232.8" cy="902.3" fill="none"/><circle cx="232.8" cy="901.9" fill="none"/><circle cx="232.9" cy="902.3" fill="none"/><circle cx="233.5" cy="897.6"/><circle cx="233.1" cy="901.9" fill="none"/><circle cx="233.2" cy="902.0" fill="none"/><circle cx="233.2" cy="902.2" fill="none"/><circle cx="233.3" cy="902.1" fill="none"/><circle cx="233.4" cy="902.2" fill="none"/><circle cx="233.5" cy="902.2" fill="none"/><circle cx="233.6" cy="902.2" fill="none"/><circle cx="233.6" cy="902.4" fill="none"/><circle cx="233.7" cy="902.5" fill="none"/><circle cx="233.8" cy="902.4" fill="none"/><circle cx="233.9" cy="902.2" fill="none"/><circle cx="234.0" cy="901.7" fill="none"/><circle cx="234.0" cy="901.8" fill="none"/><circle cx="234.1" cy="902.1" fill="none"/><circle cx="234.2" cy="902.4" fill="none"/><circle cx="234.3" cy="901.9" fill="none"/><circle cx="234.4" cy="902.0" fill="none"/><circle cx="234.4" cy="902.3" fill="none"/><circle cx="234.5" cy="901.4" fill="none"/><circle cx="234.6" cy="900.7"/><circle cx="234.7" cy="901.4" fill="none"/><circle cx="234.8" cy="901.5" fill="none"/><circle cx="234.8" cy="902.0" fill="none"/><circle cx="234.9" cy="901.9" fill="none"/><circle cx="235.0" cy="900.9"/><circle cx="235.1" cy="901.2" fill="none"/><circle cx="235.2" cy="900.4"/><circle cx="235.2" cy="899.2"/><circle cx="235.3" cy="901.7" fill="none"/><circle cx="235.4" cy="902.0" fill="none"/><circle cx="235.5" cy="901.0" fill="none"/><circle cx="235.6" cy="901.6" fill="none"/><circle cx="235.6" cy="901.9" fill="none"/><circle cx="235.7" cy="902.1" fill="none"/><circle cx="235.8" cy="901.5" fill="none"/><circle cx="235.9" cy="901.6" fill="none"/><circle cx="236.0" cy="898.9"/><circle cx="236.1" cy="899.5"/><circle cx="236.1" cy="901.9" fill="none"/><circle cx="236.2" cy="902.3" fill="none"/><circle cx="236.3" cy="902.0" fill="none"/><circle cx="236.4" cy="900.5"/><circle cx="236.5" cy="899.8"/><circle cx="236.5" cy="901.1" fill="none"/><circle cx="236.6" cy="901.6" fill="none"/><circle cx="236.7" cy="902.3" fill="none"/><circle cx="236.8" cy="901.6" fill="none"/><circle cx="236.9" cy="902.3" fill="none"/><circle cx="236.9" cy="901.8" fill="none"/><circle cx="237.0" cy="901.0" fill="none"/><circle cx="237.1" cy="900.8"/><circle cx="237.2" cy="899.8"/><circle cx="237.3" cy="896.4"/><circle cx="237.3" cy="899.9"/><circle cx="237.4" cy="897.6"/><circle cx="237.5" cy="901.5" fill="none"/><circle cx="237.6" cy="901.7" fill="none"/><circle cx="237.7" cy="901.7" fill="none"/><circle cx="237.7" cy="901.7" fill="none"/><circle cx="237.8" cy="900.7"/><circle cx="237.9" cy="901.1" fill="none"/><circle cx="238.0" cy="901.8" fill="none"/><circle cx="238.1" cy="902.1" fill="none"/><circle cx="238.1" cy="902.1" fill="none"/><circle cx="238.2" cy="901.7" fill="none"/><circle cx="238.3" cy="902.1" fill="none"/><circle cx="238.4" cy="902.2" fill="none"/><circle cx="238.5" cy="902.3" fill="none"/><circle cx="238.5" cy="901.9" fill="none"/><circle cx="238.6" cy="901.6" fill="none"/><circle cx="238.7" cy="902.1" fill="none"/><circle cx="238.8" cy="902.4" fill="none"/><circle cx="238.9" cy="902.4" fill="none"/><circle cx="238.9" cy="902.1" fill="none"/><circle cx="239.0" cy="901.2" fill="none"/><circle cx="239.1" cy="901.2" fill="none"/><circle cx="239.2" cy="901.7" fill="none"/><circle cx="239.3" cy="899.6"/><circle cx="239.3" cy="899.2"/><circle cx="239.4" cy="902.0" fill="none"/><circle cx="239.5" cy="901.4" fill="none"/><circle cx="239.6" cy="900.4"/><circle cx="239.7" cy="899.5"/><circle cx="239.7" cy="900.8"/><circle cx="239.8" cy="902.0" fill="none"/><circle cx="239.9" cy="901.8" fill="none"/><circle cx="240.0" cy="901.3" fill="none"/><circle cx="240.1" cy="900.9"/><circle cx="240.2" cy="900.7"/><circle cx="240.2" cy="901.5" fill="none"/><circle cx="240.3" cy="901.4" fill="none"/><circle cx="240.4" cy="901.4" fill="none"/><circle cx="240.5" cy="901.7" fill="none"/><circle cx="240.6" cy="900.0"/><circle cx="240.6" cy="900.8"/><circle cx="240.7" cy="901.2" fill="none"/><circle cx="240.8" cy="899.1"/><circle cx="240.9" cy="900.5"/><circle cx="241.0" cy="901.1" fill="none"/><circle cx="241.0" cy="901.3" fill="none"/><circle cx="241.1" cy="902.0" fill="none"/><circle cx="241.2" cy="901.5" fill="none"/><circle cx="241.3" cy="901.7" fill="none"/><circle cx="241.4" cy="901.5" fill="none"/><circle cx="241.4" cy="900.5"/><circle cx="241.5" cy="901.3" fill="none"/><circle cx="241.6" cy="901.6" fill="none"/><circle cx="241.7" cy="902.3" fill="none"/><circle cx="241.8" cy="901.7" fill="none"/><circle cx="241.8" cy="901.9" fill="none"/><circle cx="241.9" cy="901.2" fill="none"/><circle cx="242.0" cy="901.3" fill="none"/><circle cx="242.1" cy="901.7" fill="none"/><circle cx="242.2" cy="902.0" fill="none"/><circle cx="242.2" cy="901.0" fill="none"/><circle cx="242.3" cy="900.5"/><circle cx="242.4" cy="899.5"/><circle cx="242.5" cy="900.2"/><circle cx="242.6" cy="901.7" fill="none"/><circle cx="242.6" cy="901.6" fill="none"/><circle cx="242.7" cy="901.0" fill="none"/><circle cx="242.8" cy="900.4"/><circle cx="242.9" cy="899.5"/><circle cx="243.0" cy="898.4"/><circle cx="243.0" cy="897.7"/><circle cx="243.1" cy="895.0"/><circle cx="243.2" cy="900.5" fill="none"/><circle cx="243.3" cy="899.9"/><circle cx="243.4" cy="899.4"/><circle cx="243.4" cy="898.6"/><circle cx="243.5" cy="899.3"/><circle cx="243.6" cy="900.7" fill="none"/><circle cx="243.7" cy="900.5" fill="none"/><circle cx="243.8" cy="899.6"/><circle cx="243.9" cy="899.9"/><circle cx="243.9" cy="898.6"/><circle cx="244.0" cy="897.6"/><circle cx="244.1" cy="901.3" fill="none"/><circle cx="244.2" cy="898.0"/><circle cx="244.3" cy="900.5" fill="none"/><circle cx="244.3" cy="896.1"/><circle cx="244.4" cy="896.1"/><circle cx="244.5" cy="899.2"/><circle cx="244.6" cy="899.3"/><circle cx="244.7" cy="899.9"/><circle cx="244.7" cy="899.3"/><circle cx="244.8" cy="901.2" fill="none"/><circle cx="244.9" cy="901.3" fill="none"/><circle cx="245.0" cy="902.3" fill="none"/><circle cx="245.1" cy="902.0" fill="none"/><circle cx="245.1" cy="902.0" fill="none"/><circle cx="245.2" cy="902.2" fill="none"/><circle cx="245.3" cy="902.3" fill="none"/><circle cx="245.4" cy="902.1" fill="none"/><circle cx="245.5" cy="902.0" fill="none"/><circle cx="245.5" cy="901.8" fill="none"/><circle cx="245.6" cy="901.8" fill="none"/><circle cx="245.7" cy="901.9" fill="none"/><circle cx="245.8" cy="901.9" fill="none"/><circle cx="245.9" cy="900.9" fill="none"/><circle cx="245.9" cy="901.1" fill="none"/><circle cx="246.0" cy="901.0" fill="none"/><circle cx="246.1" cy="900.1" fill="none"/><circle cx="246.2" cy="898.1"/><circle cx="246.3" cy="900.8" fill="none"/><circle cx="246.3" cy="901.1" fill="none"/><circle cx="246.4" cy="901.6" fill="none"/><circle cx="246.5" cy="901.2" fill="none"/><circle cx="246.6" cy="900.9" fill="none"/><circle cx="246.7" cy="901.9" fill="none"/><circle cx="246.7" cy="902.1" fill="none"/><circle cx="246.8" cy="902.1" fill="none"/><circle cx="246.9" cy="901.2" fill="none"/><circle cx="247.0" cy="902.2" fill="none"/><circle cx="247.1" cy="901.6" fill="none"/><circle cx="247.1" cy="901.3" fill="none"/><circle cx="247.2" cy="901.5" fill="none"/><circle cx="247.3" cy="901.1" fill="none"/><circle cx="247.4" cy="901.5" fill="none"/><circle cx="247.5" cy="898.9"/><circle cx="247.5" cy="899.3"/><circle cx="247.6" cy="900.3" fill="none"/><circle cx="247.7" cy="898.6"/><circle cx="247.8" cy="899.1"/><circle cx="247.9" cy="900.6" fill="none"/><circle cx="248.0" cy="900.7" fill="none"/><circle cx="248.0" cy="900.2" fill="none"/><circle cx="248.1" cy="900.1" fill="none"/><circle cx="248.2" cy="899.8" fill="none"/><circle cx="248.3" cy="899.6" fill="none"/><circle cx="248.4" cy="898.7"/><circle cx="248.4" cy="899.3"/><circle cx="248.5" cy="883.2"/><circle cx="248.5" cy="888.3"/><circle cx="248.7" cy="893.8"/><circle cx="248.8" cy="896.5"/><circle cx="248.8" cy="899.2"/><circle cx="248.9" cy="899.5" fill="none"/><circle cx="249.0" cy="899.5" fill="none"/><circle cx="249.1" cy="900.4" fill="none"/><circle cx="249.2" cy="902.2" fill="none"/><circle cx="249.2" cy="902.1" fill="none"/><circle cx="249.3" cy="900.9" fill="none"/><circle cx="249.4" cy="898.5"/><circle cx="249.5" cy="895.4"/><circle cx="249.6" cy="898.1"/><circle cx="249.6" cy="899.4" fill="none"/><circle cx="249.7" cy="896.0"/><circle cx="249.8" cy="895.6"/><circle cx="249.9" cy="899.6" fill="none"/><circle cx="250.0" cy="901.0" fill="none"/><circle cx="250.0" cy="901.5" fill="none"/><circle cx="250.1" cy="901.5" fill="none"/><circle cx="250.2" cy="902.4" fill="none"/><circle cx="250.3" cy="902.3" fill="none"/><circle cx="250.4" cy="902.2" fill="none"/><circle cx="250.4" cy="901.4" fill="none"/><circle cx="250.5" cy="901.3" fill="none"/><circle cx="250.6" cy="902.1" fill="none"/><circle cx="250.7" cy="901.5" fill="none"/><circle cx="250.8" cy="900.2" fill="none"/><circle cx="250.8" cy="897.0"/><circle cx="250.9" cy="895.6"/><circle cx="251.0" cy="894.8"/><circle cx="251.1" cy="890.3"/><circle cx="251.2" cy="898.2"/><circle cx="251.2" cy="894.0"/><circle cx="251.3" cy="888.6"/><circle cx="251.4" cy="896.4"/><circle cx="251.5" cy="894.5"/><circle cx="251.6" cy="899.5" fill="none"/><circle cx="251.7" cy="891.3"/><circle cx="251.7" cy="891.7"/><circle cx="251.8" cy="895.4"/><circle cx="251.9" cy="899.1"/><circle cx="252.0" cy="899.2"/><circle cx="252.1" cy="898.0"/><circle cx="252.1" cy="898.6"/><circle cx="252.2" cy="896.6"/><circle cx="252.3" cy="897.0"/><circle cx="252.4" cy="899.1"/><circle cx="252.5" cy="897.3"/><circle cx="252.5" cy="886.9"/><circle cx="252.6" cy="898.6"/><circle cx="252.7" cy="898.9"/><circle cx="252.8" cy="897.2"/><circle cx="252.9" cy="899.3" fill="none"/><circle cx="252.9" cy="900.8" fill="none"/><circle cx="253.0" cy="901.2" fill="none"/><circle cx="253.1" cy="900.8" fill="none"/><circle cx="253.2" cy="901.4" fill="none"/><circle cx="253.3" cy="902.1" fill="none"/><circle cx="253.3" cy="902.3" fill="none"/><circle cx="253.4" cy="901.8" fill="none"/><circle cx="253.5" cy="901.6" fill="none"/><circle cx="253.6" cy="900.3" fill="none"/><circle cx="253.7" cy="900.1" fill="none"/><circle cx="253.7" cy="901.2" fill="none"/><circle cx="253.8" cy="901.5" fill="none"/><circle cx="253.9" cy="901.7" fill="none"/><circle cx="254.0" cy="900.7" fill="none"/><circle cx="254.1" cy="900.6" fill="none"/><circle cx="254.1" cy="900.7" fill="none"/><circle cx="254.2" cy="900.2" fill="none"/><circle cx="254.3" cy="899.4" fill="none"/><circle cx="254.4" cy="900.5" fill="none"/><circle cx="254.5" cy="901.6" fill="none"/><circle cx="254.5" cy="901.3" fill="none"/><circle cx="254.6" cy="901.4" fill="none"/><circle cx="254.7" cy="900.8" fill="none"/><circle cx="254.8" cy="901.7" fill="none"/><circle cx="254.9" cy="899.9" fill="none"/><circle cx="254.9" cy="900.1" fill="none"/><circle cx="255.0" cy="898.0"/><circle cx="255.1" cy="897.6"/><circle cx="255.2" cy="898.8"/><circle cx="255.3" cy="900.5" fill="none"/><circle cx="255.3" cy="900.5" fill="none"/><circle cx="255.5" cy="877.8"/><circle cx="255.5" cy="882.9"/><circle cx="255.5" cy="887.5"/><circle cx="255.5" cy="890.6"/><circle cx="255.8" cy="901.0" fill="none"/><circle cx="255.8" cy="901.3" fill="none"/><circle cx="255.9" cy="900.8" fill="none"/><circle cx="256.0" cy="897.1"/><circle cx="256.1" cy="900.1" fill="none"/><circle cx="256.2" cy="900.0" fill="none"/><circle cx="256.2" cy="898.2"/><circle cx="256.3" cy="898.8"/><circle cx="256.4" cy="899.9" fill="none"/><circle cx="256.5" cy="892.6"/><circle cx="256.6" cy="894.6"/><circle cx="256.6" cy="898.3"/><circle cx="256.7" cy="901.0" fill="none"/><circle cx="256.8" cy="901.5" fill="none"/><circle cx="256.9" cy="901.6" fill="none"/><circle cx="257.0" cy="900.3" fill="none"/><circle cx="257.0" cy="900.2" fill="none"/><circle cx="257.1" cy="901.0" fill="none"/><circle cx="257.2" cy="898.3"/><circle cx="257.3" cy="896.3"/><circle cx="257.4" cy="898.6"/><circle cx="257.4" cy="897.2"/><circle cx="257.5" cy="898.2"/><circle cx="257.6" cy="899.7" fill="none"/><circle cx="257.7" cy="901.0" fill="none"/><circle cx="257.8" cy="900.9" fill="none"/><circle cx="257.8" cy="900.6" fill="none"/><circle cx="257.9" cy="900.1" fill="none"/><circle cx="258.0" cy="899.8" fill="none"/><circle cx="258.1" cy="898.1"/><circle cx="258.2" cy="895.0"/><circle cx="258.2" cy="897.1"/><circle cx="258.3" cy="896.6"/><circle cx="258.4" cy="894.3"/><circle cx="258.5" cy="897.3"/><circle cx="258.6" cy="899.6" fill="none"/><circle cx="258.6" cy="901.6" fill="none"/><circle cx="258.7" cy="901.5" fill="none"/><circle cx="258.8" cy="902.3" fill="none"/><circle cx="258.9" cy="902.3" fill="none"/><circle cx="259.0" cy="901.7" fill="none"/><circle cx="259.0" cy="900.6" fill="none"/><circle cx="259.1" cy="901.5" fill="none"/><circle cx="259.2" cy="902.3" fill="none"/><circle cx="259.3" cy="902.4" fill="none"/><circle cx="259.4" cy="901.9" fill="none"/><circle cx="259.5" cy="899.3" fill="none"/><circle cx="259.5" cy="899.7" fill="none"/><circle cx="259.6" cy="901.7" fill="none"/><circle cx="259.7" cy="902.0" fill="none"/><circle cx="259.8" cy="900.7" fill="none"/><circle cx="259.9" cy="900.0" fill="none"/><circle cx="259.9" cy="899.1"/><circle cx="260.0" cy="899.6" fill="none"/><circle cx="260.1" cy="899.9" fill="none"/><circle cx="260.2" cy="901.7" fill="none"/><circle cx="260.3" cy="900.6" fill="none"/><circle cx="260.3" cy="897.9"/><circle cx="260.4" cy="899.7" fill="none"/><circle cx="260.5" cy="900.7" fill="none"/><circle cx="260.6" cy="900.7" fill="none"/><circle cx="260.7" cy="900.9" fill="none"/><circle cx="260.7" cy="901.6" fill="none"/><circle cx="260.8" cy="902.0" fill="none"/><circle cx="260.9" cy="901.4" fill="none"/><circle cx="261.0" cy="899.9" fill="none"/><circle cx="261.1" cy="900.6" fill="none"/><circle cx="261.1" cy="901.7" fill="none"/><circle cx="261.2" cy="901.0" fill="none"/><circle cx="261.3" cy="899.3" fill="none"/><circle cx="261.4" cy="900.5" fill="none"/><circle cx="261.5" cy="901.4" fill="none"/><circle cx="261.5" cy="901.5" fill="none"/><circle cx="261.6" cy="901.3" fill="none"/><circle cx="261.7" cy="899.2"/><circle cx="261.8" cy="900.8" fill="none"/><circle cx="261.9" cy="900.2" fill="none"/><circle cx="261.9" cy="899.6" fill="none"/><circle cx="262.0" cy="900.3" fill="none"/><circle cx="262.1" cy="897.0"/><circle cx="262.2" cy="896.7"/><circle cx="262.3" cy="899.1"/><circle cx="262.3" cy="899.8" fill="none"/><circle cx="262.4" cy="899.8" fill="none"/><circle cx="262.5" cy="896.7"/><circle cx="262.6" cy="898.6"/><circle cx="262.7" cy="897.7"/><circle cx="262.7" cy="897.6"/><circle cx="262.8" cy="900.1" fill="none"/><circle cx="262.9" cy="899.6" fill="none"/><circle cx="263.0" cy="901.0" fill="none"/><circle cx="263.1" cy="901.1" fill="none"/><circle cx="263.2" cy="901.0" fill="none"/><circle cx="263.2" cy="900.1" fill="none"/><circle cx="263.3" cy="900.2" fill="none"/><circle cx="263.4" cy="900.6" fill="none"/><circle cx="263.5" cy="901.0" fill="none"/><circle cx="263.6" cy="901.2" fill="none"/><circle cx="263.6" cy="900.7" fill="none"/><circle cx="263.7" cy="901.6" fill="none"/><circle cx="263.8" cy="901.7" fill="none"/><circle cx="263.9" cy="901.4" fill="none"/><circle cx="264.0" cy="902.3" fill="none"/><circle cx="264.0" cy="901.6" fill="none"/><circle cx="264.1" cy="900.5" fill="none"/><circle cx="264.2" cy="901.1" fill="none"/><circle cx="264.3" cy="900.9" fill="none"/><circle cx="264.4" cy="900.8" fill="none"/><circle cx="264.4" cy="901.0" fill="none"/><circle cx="264.5" cy="900.6" fill="none"/><circle cx="264.6" cy="901.5" fill="none"/><circle cx="264.7" cy="900.4" fill="none"/><circle cx="264.8" cy="901.0" fill="none"/><circle cx="264.8" cy="899.5" fill="none"/><circle cx="264.9" cy="892.5"/><circle cx="265.0" cy="895.0"/><circle cx="265.1" cy="895.7"/><circle cx="265.2" cy="896.7"/><circle cx="265.2" cy="898.2"/><circle cx="265.3" cy="897.4"/><circle cx="265.4" cy="895.8"/><circle cx="265.5" cy="898.7"/><circle cx="265.6" cy="896.1"/><circle cx="265.6" cy="898.2"/><circle cx="265.7" cy="895.2"/><circle cx="265.8" cy="897.6"/><circle cx="265.9" cy="901.2" fill="none"/><circle cx="266.0" cy="901.2" fill="none"/><circle cx="266.0" cy="901.6" fill="none"/><circle cx="266.1" cy="901.4" fill="none"/><circle cx="266.2" cy="900.3" fill="none"/><circle cx="266.3" cy="900.9" fill="none"/><circle cx="266.4" cy="901.3" fill="none"/><circle cx="266.4" cy="900.9" fill="none"/><circle cx="266.5" cy="901.7" fill="none"/><circle cx="266.6" cy="901.7" fill="none"/><circle cx="266.7" cy="900.0" fill="none"/><circle cx="266.8" cy="897.4"/><circle cx="266.8" cy="899.4" fill="none"/><circle cx="266.9" cy="900.1" fill="none"/><circle cx="267.0" cy="899.0"/><circle cx="267.1" cy="896.8"/><circle cx="267.2" cy="898.8"/><circle cx="267.3" cy="900.4" fill="none"/><circle cx="267.3" cy="901.0" fill="none"/><circle cx="267.4" cy="899.3"/><circle cx="267.5" cy="898.6"/><circle cx="267.6" cy="900.2" fill="none"/><circle cx="267.7" cy="897.3"/><circle cx="267.7" cy="898.9"/><circle cx="267.8" cy="900.3" fill="none"/><circle cx="267.9" cy="898.7"/><circle cx="268.0" cy="896.9"/><circle cx="268.1" cy="899.3" fill="none"/><circle cx="268.1" cy="900.2" fill="none"/><circle cx="268.2" cy="899.3"/><circle cx="268.3" cy="899.9" fill="none"/><circle cx="268.4" cy="897.8"/><circle cx="268.5" cy="896.6"/><circle cx="268.5" cy="898.9"/><circle cx="268.6" cy="901.9" fill="none"/><circle cx="268.7" cy="901.4" fill="none"/><circle cx="268.8" cy="901.1" fill="none"/><circle cx="268.9" cy="897.4"/><circle cx="268.9" cy="900.0" fill="none"/><circle cx="269.0" cy="900.2" fill="none"/><circle cx="269.1" cy="897.2"/><circle cx="269.2" cy="898.6"/><circle cx="269.3" cy="897.0"/><circle cx="269.3" cy="897.6"/><circle cx="269.4" cy="898.5"/><circle cx="269.5" cy="897.7"/><circle cx="269.6" cy="899.2"/><circle cx="269.7" cy="900.5" fill="none"/><circle cx="269.7" cy="899.8" fill="none"/><circle cx="269.8" cy="900.2" fill="none"/><circle cx="269.9" cy="899.5" fill="none"/><circle cx="270.0" cy="897.0"/><circle cx="270.1" cy="895.9"/><circle cx="270.1" cy="899.6" fill="none"/><circle cx="270.2" cy="900.8" fill="none"/><circle cx="270.3" cy="901.6" fill="none"/><circle cx="270.4" cy="901.6" fill="none"/><circle cx="270.5" cy="901.7" fill="none"/><circle cx="270.5" cy="901.0" fill="none"/><circle cx="270.6" cy="899.1"/><circle cx="270.7" cy="898.6"/><circle cx="270.8" cy="901.4" fill="none"/><circle cx="270.9" cy="901.2" fill="none"/><circle cx="271.0" cy="900.9" fill="none"/><circle cx="271.0" cy="898.9"/><circle cx="271.1" cy="898.4"/><circle cx="271.2" cy="897.3"/><circle cx="271.3" cy="897.7"/><circle cx="271.4" cy="900.6" fill="none"/><circle cx="271.4" cy="899.8" fill="none"/><circle cx="271.5" cy="898.1"/><circle cx="271.6" cy="900.4" fill="none"/><circle cx="271.7" cy="897.1"/><circle cx="271.8" cy="890.1"/><circle cx="271.8" cy="897.2"/><circle cx="271.9" cy="899.3" fill="none"/><circle cx="272.0" cy="900.8" fill="none"/><circle cx="272.1" cy="900.3" fill="none"/><circle cx="272.2" cy="901.0" fill="none"/><circle cx="272.2" cy="898.2"/><circle cx="272.3" cy="899.7" fill="none"/><circle cx="272.4" cy="899.8" fill="none"/><circle cx="272.5" cy="898.7"/><circle cx="272.6" cy="899.7" fill="none"/><circle cx="272.5" cy="888.3"/><circle cx="272.7" cy="897.9"/><circle cx="272.8" cy="898.2"/><circle cx="272.9" cy="897.2"/><circle cx="273.0" cy="900.2" fill="none"/><circle cx="273.0" cy="899.9" fill="none"/><circle cx="273.1" cy="900.6" fill="none"/><circle cx="273.2" cy="900.2" fill="none"/><circle cx="273.3" cy="901.2" fill="none"/><circle cx="273.4" cy="899.1"/><circle cx="273.4" cy="898.3"/><circle cx="273.5" cy="899.4" fill="none"/><circle cx="273.6" cy="899.8" fill="none"/><circle cx="273.7" cy="901.4" fill="none"/><circle cx="273.8" cy="900.7" fill="none"/><circle cx="273.8" cy="901.5" fill="none"/><circle cx="273.9" cy="900.3" fill="none"/><circle cx="274.0" cy="900.9" fill="none"/><circle cx="274.1" cy="898.3"/><circle cx="274.2" cy="899.4" fill="none"/><circle cx="274.2" cy="900.3" fill="none"/><circle cx="274.3" cy="898.4"/><circle cx="274.4" cy="899.2"/><circle cx="274.5" cy="894.7"/><circle cx="274.6" cy="888.3"/><circle cx="274.6" cy="895.9"/><circle cx="274.7" cy="893.8"/><circle cx="274.8" cy="894.3"/><circle cx="274.9" cy="896.1"/><circle cx="275.0" cy="900.5" fill="none"/><circle cx="275.1" cy="900.5" fill="none"/><circle cx="275.1" cy="900.8" fill="none"/><circle cx="275.2" cy="899.1"/><circle cx="275.3" cy="896.8"/><circle cx="275.4" cy="899.9" fill="none"/><circle cx="275.5" cy="901.3" fill="none"/><circle cx="275.5" cy="900.8" fill="none"/><circle cx="275.6" cy="900.9" fill="none"/><circle cx="275.7" cy="899.5" fill="none"/><circle cx="275.8" cy="900.4" fill="none"/><circle cx="275.9" cy="898.1"/><circle cx="275.9" cy="894.1"/><circle cx="276.0" cy="899.2"/><circle cx="276.1" cy="900.6" fill="none"/><circle cx="276.2" cy="900.3" fill="none"/><circle cx="276.3" cy="900.5" fill="none"/><circle cx="276.3" cy="896.9"/><circle cx="276.4" cy="898.3"/><circle cx="276.5" cy="899.2"/><circle cx="276.6" cy="901.2" fill="none"/><circle cx="276.7" cy="900.3" fill="none"/><circle cx="276.7" cy="901.2" fill="none"/><circle cx="276.8" cy="901.4" fill="none"/><circle cx="276.9" cy="902.2" fill="none"/><circle cx="277.0" cy="901.9" fill="none"/><circle cx="277.1" cy="901.4" fill="none"/><circle cx="277.1" cy="900.9" fill="none"/><circle cx="277.2" cy="901.8" fill="none"/><circle cx="277.3" cy="901.3" fill="none"/><circle cx="277.4" cy="900.6" fill="none"/><circle cx="277.5" cy="899.6" fill="none"/><circle cx="277.5" cy="901.3" fill="none"/><circle cx="277.6" cy="900.8" fill="none"/><circle cx="277.7" cy="900.3" fill="none"/><circle cx="277.8" cy="900.3" fill="none"/><circle cx="277.9" cy="899.8" fill="none"/><circle cx="277.9" cy="901.0" fill="none"/><circle cx="278.0" cy="901.4" fill="none"/><circle cx="278.1" cy="898.0"/><circle cx="278.2" cy="896.1"/><circle cx="278.3" cy="895.4"/><circle cx="278.3" cy="896.1"/><circle cx="278.4" cy="898.4"/><circle cx="278.5" cy="900.0" fill="none"/><circle cx="278.6" cy="901.3" fill="none"/><circle cx="278.7" cy="901.2" fill="none"/><circle cx="278.8" cy="902.0" fill="none"/><circle cx="278.8" cy="901.6" fill="none"/><circle cx="278.9" cy="901.8" fill="none"/><circle cx="279.0" cy="901.6" fill="none"/><circle cx="279.1" cy="901.6" fill="none"/><circle cx="279.2" cy="899.3" fill="none"/><circle cx="279.2" cy="895.0"/><circle cx="279.3" cy="899.4" fill="none"/><circle cx="279.4" cy="894.2"/><circle cx="279.5" cy="893.4"/><circle cx="279.6" cy="894.2"/><circle cx="279.6" cy="892.5"/><circle cx="279.7" cy="900.5" fill="none"/><circle cx="279.8" cy="900.0" fill="none"/><circle cx="279.9" cy="896.5"/><circle cx="280.0" cy="898.7"/><circle cx="280.0" cy="896.2"/><circle cx="280.1" cy="898.8"/><circle cx="280.2" cy="900.5" fill="none"/><circle cx="280.3" cy="899.7" fill="none"/><circle cx="280.4" cy="900.2" fill="none"/><circle cx="280.4" cy="900.8" fill="none"/><circle cx="280.5" cy="882.9"/><circle cx="280.5" cy="875.9"/><circle cx="280.5" cy="871.2"/><circle cx="280.5" cy="818.5"/><circle cx="280.8" cy="899.4" fill="none"/><circle cx="280.9" cy="899.7" fill="none"/><circle cx="281.0" cy="900.6" fill="none"/><circle cx="281.1" cy="901.2" fill="none"/><circle cx="281.2" cy="901.2" fill="none"/><circle cx="281.2" cy="901.4" fill="none"/><circle cx="281.3" cy="901.4" fill="none"/><circle cx="281.4" cy="900.5" fill="none"/><circle cx="281.5" cy="900.2" fill="none"/><circle cx="281.6" cy="900.0" fill="none"/><circle cx="281.6" cy="900.9" fill="none"/><circle cx="281.7" cy="901.1" fill="none"/><circle cx="281.8" cy="901.1" fill="none"/><circle cx="281.9" cy="901.4" fill="none"/><circle cx="282.0" cy="900.3" fill="none"/><circle cx="282.0" cy="896.9"/><circle cx="282.1" cy="895.2"/><circle cx="282.2" cy="899.1"/><circle cx="282.3" cy="899.9" fill="none"/><circle cx="282.4" cy="899.0"/><circle cx="282.5" cy="899.7" fill="none"/><circle cx="282.5" cy="899.6" fill="none"/><circle cx="282.6" cy="901.1" fill="none"/><circle cx="282.7" cy="901.7" fill="none"/><circle cx="282.8" cy="900.9" fill="none"/><circle cx="282.9" cy="901.2" fill="none"/><circle cx="282.9" cy="900.3" fill="none"/><circle cx="283.0" cy="898.8"/><circle cx="283.1" cy="900.2" fill="none"/><circle cx="283.2" cy="901.0" fill="none"/><circle cx="283.3" cy="898.5"/><circle cx="283.3" cy="899.2"/><circle cx="283.4" cy="898.8"/><circle cx="283.5" cy="898.5"/><circle cx="283.6" cy="899.2"/><circle cx="283.7" cy="899.3" fill="none"/><circle cx="283.7" cy="898.3"/><circle cx="283.8" cy="899.1"/><circle cx="283.9" cy="901.3" fill="none"/><circle cx="284.0" cy="901.3" fill="none"/><circle cx="284.1" cy="901.4" fill="none"/><circle cx="284.1" cy="901.4" fill="none"/><circle cx="284.2" cy="900.0" fill="none"/><circle cx="284.3" cy="901.5" fill="none"/><circle cx="284.4" cy="900.6" fill="none"/><circle cx="284.5" cy="901.5" fill="none"/><circle cx="284.5" cy="901.6" fill="none"/><circle cx="284.6" cy="900.8" fill="none"/><circle cx="284.7" cy="901.3" fill="none"/><circle cx="284.8" cy="899.6" fill="none"/><circle cx="284.9" cy="898.0"/><circle cx="284.9" cy="899.3" fill="none"/><circle cx="285.0" cy="900.0" fill="none"/><circle cx="285.1" cy="900.5" fill="none"/><circle cx="285.2" cy="902.1" fill="none"/><circle cx="285.3" cy="902.1" fill="none"/><circle cx="285.3" cy="902.1" fill="none"/><circle cx="285.4" cy="901.6" fill="none"/><circle cx="285.5" cy="900.8" fill="none"/><circle cx="285.6" cy="902.4" fill="none"/><circle cx="285.7" cy="902.3" fill="none"/><circle cx="285.7" cy="901.6" fill="none"/><circle cx="285.8" cy="900.8" fill="none"/><circle cx="285.9" cy="898.5"/><circle cx="286.5" cy="890.6"/><circle cx="286.1" cy="901.2" fill="none"/><circle cx="286.1" cy="901.0" fill="none"/><circle cx="286.2" cy="900.2" fill="none"/><circle cx="286.3" cy="901.2" fill="none"/><circle cx="286.4" cy="901.6" fill="none"/><circle cx="286.5" cy="902.0" fill="none"/><circle cx="286.6" cy="901.2" fill="none"/><circle cx="286.6" cy="901.8" fill="none"/><circle cx="286.7" cy="901.4" fill="none"/><circle cx="286.8" cy="901.1" fill="none"/><circle cx="286.9" cy="901.1" fill="none"/><circle cx="287.0" cy="900.5" fill="none"/><circle cx="287.0" cy="900.4" fill="none"/><circle cx="287.1" cy="901.5" fill="none"/><circle cx="287.2" cy="901.7" fill="none"/><circle cx="287.3" cy="901.1" fill="none"/><circle cx="287.4" cy="898.6"/><circle cx="287.4" cy="897.7"/><circle cx="287.5" cy="898.5"/><circle cx="287.6" cy="898.6"/><circle cx="287.7" cy="900.3" fill="none"/><circle cx="287.8" cy="898.0"/><circle cx="287.8" cy="896.1"/><circle cx="287.9" cy="900.9" fill="none"/><circle cx="288.0" cy="899.9" fill="none"/><circle cx="288.1" cy="901.6" fill="none"/><circle cx="288.2" cy="901.3" fill="none"/><circle cx="288.2" cy="899.6" fill="none"/><circle cx="288.3" cy="900.7" fill="none"/><circle cx="288.4" cy="900.4" fill="none"/><circle cx="288.5" cy="900.6" fill="none"/><circle cx="288.6" cy="902.4" fill="none"/><circle cx="288.6" cy="900.6" fill="none"/><circle cx="288.7" cy="899.7" fill="none"/><circle cx="288.8" cy="902.0" fill="none"/><circle cx="288.9" cy="900.3" fill="none"/><circle cx="289.0" cy="901.0" fill="none"/><circle cx="289.0" cy="901.2" fill="none"/><circle cx="289.1" cy="901.4" fill="none"/><circle cx="289.2" cy="900.0" fill="none"/><circle cx="289.3" cy="899.3" fill="none"/><circle cx="289.4" cy="900.8" fill="none"/><circle cx="289.4" cy="900.7" fill="none"/><circle cx="289.5" cy="901.5" fill="none"/><circle cx="289.6" cy="900.0" fill="none"/><circle cx="289.7" cy="899.6" fill="none"/><circle cx="289.8" cy="898.2"/><circle cx="289.8" cy="900.7" fill="none"/><circle cx="289.9" cy="900.5" fill="none"/><circle cx="290.0" cy="897.2"/><circle cx="290.1" cy="899.3" fill="none"/><circle cx="290.2" cy="899.7" fill="none"/><circle cx="290.3" cy="900.5" fill="none"/><circle cx="290.3" cy="901.1" fill="none"/><circle cx="290.4" cy="900.7" fill="none"/><circle cx="290.5" cy="900.8" fill="none"/><circle cx="290.6" cy="901.3" fill="none"/><circle cx="290.7" cy="901.6" fill="none"/><circle cx="290.7" cy="900.8" fill="none"/><circle cx="290.8" cy="898.6"/><circle cx="290.9" cy="898.5"/><circle cx="291.0" cy="898.1"/><circle cx="291.1" cy="899.8" fill="none"/><circle cx="291.1" cy="900.3" fill="none"/><circle cx="291.2" cy="901.1" fill="none"/><circle cx="291.3" cy="900.8" fill="none"/><circle cx="291.4" cy="900.6" fill="none"/><circle cx="291.5" cy="898.7"/><circle cx="291.5" cy="896.2"/><circle cx="291.6" cy="898.6"/><circle cx="291.7" cy="897.6"/><circle cx="291.8" cy="898.8"/><circle cx="291.9" cy="900.7" fill="none"/><circle cx="291.9" cy="901.1" fill="none"/><circle cx="292.0" cy="900.5" fill="none"/><circle cx="292.1" cy="900.1" fill="none"/><circle cx="292.2" cy="899.0"/><circle cx="292.3" cy="900.4" fill="none"/><circle cx="292.3" cy="900.6" fill="none"/><circle cx="292.4" cy="901.8" fill="none"/><circle cx="292.5" cy="900.7" fill="none"/><circle cx="292.6" cy="892.2"/><circle cx="292.7" cy="894.5"/><circle cx="292.7" cy="900.6" fill="none"/><circle cx="292.8" cy="900.4" fill="none"/><circle cx="292.9" cy="900.3" fill="none"/><circle cx="293.5" cy="891.4"/><circle cx="293.1" cy="898.4"/><circle cx="293.1" cy="895.2"/><circle cx="293.2" cy="893.2"/><circle cx="293.3" cy="894.7"/><circle cx="293.4" cy="898.4"/><circle cx="293.5" cy="899.9" fill="none"/><circle cx="293.5" cy="899.7" fill="none"/><circle cx="293.6" cy="900.3" fill="none"/><circle cx="293.7" cy="898.5"/><circle cx="293.8" cy="897.6"/><circle cx="293.9" cy="896.6"/><circle cx="293.9" cy="901.3" fill="none"/><circle cx="294.0" cy="901.6" fill="none"/><circle cx="294.1" cy="900.1" fill="none"/><circle cx="294.2" cy="899.9" fill="none"/><circle cx="294.3" cy="899.7" fill="none"/><circle cx="294.4" cy="898.4"/><circle cx="294.4" cy="899.9" fill="none"/><circle cx="294.5" cy="900.7" fill="none"/><circle cx="294.6" cy="900.9" fill="none"/><circle cx="294.7" cy="901.6" fill="none"/><circle cx="294.8" cy="901.4" fill="none"/><circle cx="294.8" cy="902.2" fill="none"/><circle cx="294.9" cy="900.8" fill="none"/><circle cx="295.0" cy="897.8"/><circle cx="295.1" cy="897.1"/><circle cx="295.2" cy="897.8"/><circle cx="295.2" cy="901.1" fill="none"/><circle cx="295.3" cy="897.7"/><circle cx="295.4" cy="897.0"/><circle cx="295.5" cy="899.5" fill="none"/><circle cx="295.6" cy="900.7" fill="none"/><circle cx="295.6" cy="900.3" fill="none"/><circle cx="295.7" cy="901.0" fill="none"/><circle cx="295.8" cy="900.3" fill="none"/><circle cx="295.9" cy="898.7"/><circle cx="296.0" cy="900.8" fill="none"/><circle cx="296.0" cy="901.8" fill="none"/><circle cx="296.1" cy="901.8" fill="none"/><circle cx="296.2" cy="900.6" fill="none"/><circle cx="296.3" cy="900.1" fill="none"/><circle cx="296.4" cy="899.9" fill="none"/><circle cx="296.4" cy="900.2" fill="none"/><circle cx="296.5" cy="898.3"/><circle cx="296.6" cy="900.3" fill="none"/><circle cx="296.7" cy="898.1"/><circle cx="296.8" cy="900.0" fill="none"/><circle cx="296.8" cy="900.5" fill="none"/><circle cx="296.9" cy="899.9" fill="none"/><circle cx="297.0" cy="897.5"/><circle cx="297.1" cy="898.1"/><circle cx="297.2" cy="900.6" fill="none"/><circle cx="297.2" cy="900.4" fill="none"/><circle cx="297.3" cy="901.7" fill="none"/><circle cx="297.4" cy="900.5" fill="none"/><circle cx="297.5" cy="900.2" fill="none"/><circle cx="297.6" cy="900.3" fill="none"/><circle cx="297.6" cy="899.4" fill="none"/><circle cx="297.7" cy="900.9" fill="none"/><circle cx="297.8" cy="902.0" fill="none"/><circle cx="297.9" cy="901.8" fill="none"/><circle cx="298.0" cy="901.7" fill="none"/><circle cx="298.1" cy="902.3" fill="none"/><circle cx="298.1" cy="901.8" fill="none"/><circle cx="298.2" cy="900.7" fill="none"/><circle cx="298.3" cy="898.1"/><circle cx="298.4" cy="897.4"/><circle cx="298.5" cy="898.4"/><circle cx="298.5" cy="901.7" fill="none"/><circle cx="298.6" cy="902.4" fill="none"/><circle cx="298.7" cy="901.6" fill="none"/><circle cx="298.8" cy="899.8" fill="none"/><circle cx="298.9" cy="900.7" fill="none"/><circle cx="298.9" cy="900.4" fill="none"/><circle cx="299.0" cy="899.5" fill="none"/><circle cx="299.1" cy="899.1"/><circle cx="299.2" cy="898.0"/><circle cx="299.3" cy="899.9" fill="none"/><circle cx="299.3" cy="901.6" fill="none"/><circle cx="299.4" cy="901.4" fill="none"/><circle cx="299.5" cy="901.1" fill="none"/><circle cx="299.6" cy="902.3" fill="none"/><circle cx="299.7" cy="902.0" fill="none"/><circle cx="299.7" cy="898.5"/><circle cx="299.8" cy="897.2"/><circle cx="299.9" cy="898.7"/><circle cx="300.0" cy="897.9"/><circle cx="300.1" cy="897.3"/><circle cx="300.1" cy="898.0"/><circle cx="300.2" cy="899.2"/><circle cx="300.3" cy="901.1" fill="none"/><circle cx="300.4" cy="901.7" fill="none"/><circle cx="300.5" cy="900.8" fill="none"/><circle cx="300.5" cy="901.2" fill="none"/><circle cx="300.6" cy="901.2" fill="none"/><circle cx="300.7" cy="900.2" fill="none"/><circle cx="300.8" cy="899.2"/><circle cx="300.9" cy="900.2" fill="none"/><circle cx="300.9" cy="901.6" fill="none"/><circle cx="301.0" cy="901.6" fill="none"/><circle cx="301.1" cy="901.8" fill="none"/><circle cx="301.2" cy="900.9" fill="none"/><circle cx="301.3" cy="901.9" fill="none"/><circle cx="301.3" cy="901.5" fill="none"/><circle cx="301.4" cy="900.8" fill="none"/><circle cx="301.5" cy="901.9" fill="none"/><circle cx="301.6" cy="901.4" fill="none"/><circle cx="301.7" cy="900.8" fill="none"/><circle cx="301.7" cy="898.2"/><circle cx="301.8" cy="897.7"/><circle cx="301.9" cy="896.6"/><circle cx="302.0" cy="897.4"/><circle cx="302.1" cy="894.0"/><circle cx="302.2" cy="898.0"/><circle cx="302.2" cy="893.7"/><circle cx="302.3" cy="892.2"/><circle cx="302.4" cy="899.4" fill="none"/><circle cx="302.5" cy="900.4" fill="none"/><circle cx="302.6" cy="898.0"/><circle cx="302.6" cy="896.0"/><circle cx="302.7" cy="898.1"/><circle cx="302.8" cy="899.3" fill="none"/><circle cx="302.9" cy="898.2"/><circle cx="303.0" cy="900.9" fill="none"/><circle cx="303.0" cy="900.6" fill="none"/><circle cx="303.1" cy="898.3"/><circle cx="303.2" cy="900.8" fill="none"/><circle cx="303.3" cy="897.9"/><circle cx="303.4" cy="893.3"/><circle cx="303.4" cy="897.8"/><circle cx="303.5" cy="900.3" fill="none"/><circle cx="303.6" cy="900.2" fill="none"/><circle cx="303.7" cy="899.5" fill="none"/><circle cx="303.8" cy="898.1"/><circle cx="303.8" cy="899.3" fill="none"/><circle cx="303.9" cy="900.9" fill="none"/><circle cx="304.0" cy="899.0"/><circle cx="304.1" cy="900.3" fill="none"/><circle cx="304.2" cy="901.3" fill="none"/><circle cx="304.2" cy="901.6" fill="none"/><circle cx="304.3" cy="900.6" fill="none"/><circle cx="304.4" cy="901.0" fill="none"/><circle cx="304.5" cy="901.2" fill="none"/><circle cx="304.6" cy="899.7" fill="none"/><circle cx="304.6" cy="901.0" fill="none"/><circle cx="304.7" cy="902.2" fill="none"/><circle cx="304.8" cy="901.7" fill="none"/><circle cx="304.9" cy="901.0" fill="none"/><circle cx="305.0" cy="900.2" fill="none"/><circle cx="305.0" cy="900.8" fill="none"/><circle cx="305.1" cy="901.7" fill="none"/><circle cx="305.2" cy="901.6" fill="none"/><circle cx="305.3" cy="901.9" fill="none"/><circle cx="305.4" cy="900.8" fill="none"/><circle cx="305.4" cy="900.2" fill="none"/><circle cx="305.5" cy="896.3"/><circle cx="305.6" cy="895.6"/><circle cx="305.7" cy="897.8"/><circle cx="305.8" cy="894.8"/><circle cx="305.9" cy="898.7"/><circle cx="305.9" cy="896.5"/><circle cx="306.0" cy="894.6"/><circle cx="306.1" cy="897.4"/><circle cx="306.2" cy="899.7" fill="none"/><circle cx="306.3" cy="899.7" fill="none"/><circle cx="306.3" cy="900.3" fill="none"/><circle cx="306.4" cy="900.1" fill="none"/><circle cx="306.5" cy="899.3" fill="none"/><circle cx="306.6" cy="898.9"/><circle cx="306.7" cy="899.0"/><circle cx="306.7" cy="897.4"/><circle cx="306.8" cy="897.5"/><circle cx="306.9" cy="893.3"/><circle cx="307.0" cy="899.6" fill="none"/><circle cx="307.1" cy="899.3" fill="none"/><circle cx="307.1" cy="900.2" fill="none"/><circle cx="307.2" cy="898.2"/><circle cx="307.3" cy="898.5"/><circle cx="307.4" cy="896.0"/><circle cx="307.5" cy="891.7"/><circle cx="307.5" cy="895.7"/><circle cx="307.6" cy="893.7"/><circle cx="307.7" cy="892.8"/><circle cx="307.8" cy="897.7"/><circle cx="307.9" cy="899.4" fill="none"/><circle cx="307.9" cy="898.1"/><circle cx="308.0" cy="901.1" fill="none"/><circle cx="308.1" cy="901.1" fill="none"/><circle cx="308.2" cy="901.3" fill="none"/><circle cx="308.3" cy="901.1" fill="none"/><circle cx="308.3" cy="900.7" fill="none"/><circle cx="308.4" cy="897.0"/><circle cx="308.5" cy="898.9"/><circle cx="308.6" cy="900.8" fill="none"/><circle cx="308.7" cy="900.5" fill="none"/><circle cx="308.7" cy="901.2" fill="none"/><circle cx="308.8" cy="899.8" fill="none"/><circle cx="308.9" cy="898.4"/><circle cx="309.0" cy="900.8" fill="none"/><circle cx="309.1" cy="901.6" fill="none"/><circle cx="309.1" cy="901.0" fill="none"/><circle cx="309.2" cy="901.1" fill="none"/><circle cx="309.3" cy="900.8" fill="none"/><circle cx="309.4" cy="898.3"/><circle cx="309.5" cy="899.0" fill="none"/><circle cx="309.6" cy="898.6"/><circle cx="309.6" cy="900.7" fill="none"/><circle cx="309.7" cy="901.6" fill="none"/><circle cx="309.8" cy="901.9" fill="none"/><circle cx="309.9" cy="901.8" fill="none"/><circle cx="310.0" cy="901.0" fill="none"/><circle cx="310.0" cy="899.5" fill="none"/><circle cx="310.1" cy="895.9"/><circle cx="310.2" cy="899.2" fill="none"/><circle cx="310.3" cy="897.9"/><circle cx="310.4" cy="899.8" fill="none"/><circle cx="310.4" cy="901.5" fill="none"/><circle cx="310.5" cy="899.2" fill="none"/><circle cx="310.6" cy="898.4"/><circle cx="310.7" cy="900.0" fill="none"/><circle cx="310.8" cy="900.2" fill="none"/><circle cx="310.8" cy="898.8"/><circle cx="310.9" cy="894.1"/><circle cx="311.0" cy="892.7"/><circle cx="311.1" cy="892.6"/><circle cx="311.2" cy="897.7"/><circle cx="311.2" cy="900.7" fill="none"/><circle cx="311.3" cy="900.5" fill="none"/><circle cx="311.4" cy="901.4" fill="none"/><circle cx="311.5" cy="901.4" fill="none"/><circle cx="311.6" cy="899.4" fill="none"/><circle cx="311.6" cy="899.1" fill="none"/><circle cx="311.5" cy="885.6"/><circle cx="311.8" cy="901.8" fill="none"/><circle cx="311.9" cy="902.0" fill="none"/><circle cx="312.0" cy="901.1" fill="none"/><circle cx="312.0" cy="902.2" fill="none"/><circle cx="312.1" cy="902.3" fill="none"/><circle cx="312.2" cy="901.6" fill="none"/><circle cx="312.3" cy="901.6" fill="none"/><circle cx="312.4" cy="901.2" fill="none"/><circle cx="312.4" cy="901.7" fill="none"/><circle cx="312.5" cy="900.4" fill="none"/><circle cx="312.6" cy="895.4"/><circle cx="312.7" cy="895.6"/><circle cx="312.8" cy="891.8"/><circle cx="312.8" cy="896.4"/><circle cx="312.9" cy="896.6"/><circle cx="313.0" cy="897.6"/><circle cx="313.1" cy="900.8" fill="none"/><circle cx="313.2" cy="900.6" fill="none"/><circle cx="313.2" cy="900.4" fill="none"/><circle cx="313.3" cy="900.7" fill="none"/><circle cx="313.4" cy="900.8" fill="none"/><circle cx="313.5" cy="901.9" fill="none"/><circle cx="313.6" cy="900.9" fill="none"/><circle cx="313.7" cy="901.3" fill="none"/><circle cx="313.7" cy="900.7" fill="none"/><circle cx="313.8" cy="900.9" fill="none"/><circle cx="313.9" cy="899.4" fill="none"/><circle cx="314.0" cy="899.3" fill="none"/><circle cx="314.1" cy="898.2"/><circle cx="314.1" cy="900.4" fill="none"/><circle cx="314.2" cy="899.3" fill="none"/><circle cx="314.3" cy="898.6"/><circle cx="314.4" cy="899.2" fill="none"/><circle cx="314.5" cy="900.0" fill="none"/><circle cx="314.5" cy="899.4" fill="none"/><circle cx="314.6" cy="898.6"/><circle cx="314.7" cy="899.0" fill="none"/><circle cx="314.8" cy="899.0" fill="none"/><circle cx="314.9" cy="899.8" fill="none"/><circle cx="314.9" cy="900.6" fill="none"/><circle cx="315.0" cy="901.5" fill="none"/><circle cx="315.1" cy="900.0" fill="none"/><circle cx="315.2" cy="899.3" fill="none"/><circle cx="315.3" cy="899.2" fill="none"/><circle cx="315.3" cy="899.8" fill="none"/><circle cx="315.4" cy="900.0" fill="none"/><circle cx="315.5" cy="900.6" fill="none"/><circle cx="315.6" cy="899.2" fill="none"/><circle cx="315.7" cy="898.9" fill="none"/><circle cx="315.7" cy="899.0" fill="none"/><circle cx="315.8" cy="899.5" fill="none"/><circle cx="315.9" cy="900.6" fill="none"/><circle cx="316.0" cy="898.2"/><circle cx="316.1" cy="898.9" fill="none"/><circle cx="316.1" cy="897.3"/><circle cx="316.2" cy="899.2" fill="none"/><circle cx="316.3" cy="899.0" fill="none"/><circle cx="316.4" cy="896.9"/><circle cx="316.5" cy="900.1" fill="none"/><circle cx="316.5" cy="900.8" fill="none"/><circle cx="316.6" cy="901.4" fill="none"/><circle cx="316.7" cy="900.6" fill="none"/><circle cx="316.5" cy="876.6"/><circle cx="316.5" cy="883.6"/><circle cx="316.9" cy="902.0" fill="none"/><circle cx="317.0" cy="902.3" fill="none"/><circle cx="317.1" cy="900.1" fill="none"/><circle cx="317.2" cy="900.4" fill="none"/><circle cx="317.3" cy="898.1"/><circle cx="317.4" cy="895.7"/><circle cx="317.4" cy="891.6"/><circle cx="317.5" cy="895.5"/><circle cx="317.6" cy="899.4" fill="none"/><circle cx="317.7" cy="893.6"/><circle cx="317.8" cy="899.6" fill="none"/><circle cx="317.8" cy="901.5" fill="none"/><circle cx="317.9" cy="900.4" fill="none"/><circle cx="318.0" cy="898.8" fill="none"/><circle cx="318.1" cy="897.2"/><circle cx="318.2" cy="898.7" fill="none"/><circle cx="318.2" cy="900.8" fill="none"/><circle cx="318.3" cy="900.2" fill="none"/><circle cx="318.4" cy="898.3"/><circle cx="318.5" cy="898.8" fill="none"/><circle cx="318.6" cy="895.5"/><circle cx="318.6" cy="897.3"/><circle cx="318.7" cy="895.7"/><circle cx="318.8" cy="898.7" fill="none"/><circle cx="318.9" cy="898.1"/><circle cx="319.0" cy="894.6"/><circle cx="319.0" cy="891.3"/><circle cx="319.1" cy="892.0"/><circle cx="319.2" cy="895.4"/><circle cx="319.3" cy="898.4"/><circle cx="319.4" cy="898.8" fill="none"/><circle cx="319.4" cy="896.6"/><circle cx="319.5" cy="895.3"/><circle cx="319.6" cy="899.1" fill="none"/><circle cx="319.7" cy="896.4"/><circle cx="319.8" cy="892.3"/><circle cx="319.8" cy="897.3"/><circle cx="319.9" cy="896.8"/><circle cx="320.0" cy="899.6" fill="none"/><circle cx="320.1" cy="899.3" fill="none"/><circle cx="320.2" cy="899.5" fill="none"/><circle cx="320.2" cy="898.9" fill="none"/><circle cx="320.3" cy="899.1" fill="none"/><circle cx="320.4" cy="899.9" fill="none"/><circle cx="320.5" cy="899.1" fill="none"/><circle cx="320.6" cy="901.7" fill="none"/><circle cx="320.6" cy="901.9" fill="none"/><circle cx="320.7" cy="901.4" fill="none"/><circle cx="320.8" cy="901.1" fill="none"/><circle cx="320.9" cy="900.1" fill="none"/><circle cx="321.0" cy="900.9" fill="none"/><circle cx="321.0" cy="901.7" fill="none"/><circle cx="321.1" cy="901.3" fill="none"/><circle cx="321.2" cy="901.3" fill="none"/><circle cx="321.3" cy="902.1" fill="none"/><circle cx="321.4" cy="901.0" fill="none"/><circle cx="321.5" cy="900.2" fill="none"/><circle cx="321.5" cy="900.2" fill="none"/><circle cx="321.6" cy="893.8"/><circle cx="321.7" cy="898.4"/><circle cx="321.8" cy="898.5"/><circle cx="321.9" cy="897.3"/><circle cx="321.9" cy="898.1"/><circle cx="322.0" cy="899.4" fill="none"/><circle cx="322.1" cy="899.4" fill="none"/><circle cx="322.2" cy="898.8" fill="none"/><circle cx="322.3" cy="897.2"/><circle cx="322.3" cy="899.1" fill="none"/><circle cx="322.4" cy="899.9" fill="none"/><circle cx="322.5" cy="900.7" fill="none"/><circle cx="322.6" cy="901.0" fill="none"/><circle cx="322.7" cy="901.1" fill="none"/><circle cx="322.7" cy="901.3" fill="none"/><circle cx="322.8" cy="898.2"/><circle cx="322.9" cy="899.6" fill="none"/><circle cx="323.0" cy="900.3" fill="none"/><circle cx="323.1" cy="895.2"/><circle cx="323.1" cy="894.1"/><circle cx="323.2" cy="901.0" fill="none"/><circle cx="323.3" cy="900.7" fill="none"/><circle cx="323.4" cy="900.7" fill="none"/><circle cx="323.5" cy="901.6" fill="none"/><circle cx="323.5" cy="902.0" fill="none"/><circle cx="323.6" cy="901.0" fill="none"/><circle cx="323.7" cy="900.2" fill="none"/><circle cx="323.8" cy="899.9" fill="none"/><circle cx="323.9" cy="900.8" fill="none"/><circle cx="323.9" cy="898.6" fill="none"/><circle cx="324.0" cy="898.5" fill="none"/><circle cx="324.1" cy="898.8" fill="none"/><circle cx="324.2" cy="898.9" fill="none"/><circle cx="324.3" cy="901.1" fill="none"/><circle cx="324.3" cy="900.3" fill="none"/><circle cx="324.4" cy="897.4"/><circle cx="324.5" cy="897.3"/><circle cx="324.6" cy="899.0" fill="none"/><circle cx="324.7" cy="896.7"/><circle cx="324.7" cy="900.0" fill="none"/><circle cx="324.8" cy="900.6" fill="none"/><circle cx="324.9" cy="899.9" fill="none"/><circle cx="325.0" cy="898.9" fill="none"/><circle cx="325.1" cy="898.4"/><circle cx="325.2" cy="900.9" fill="none"/><circle cx="325.2" cy="899.9" fill="none"/><circle cx="325.3" cy="899.3" fill="none"/><circle cx="325.4" cy="900.4" fill="none"/><circle cx="325.5" cy="897.1"/><circle cx="325.6" cy="898.5" fill="none"/><circle cx="325.6" cy="899.0" fill="none"/><circle cx="325.7" cy="898.1"/><circle cx="325.8" cy="897.8"/><circle cx="325.9" cy="897.6"/><circle cx="326.0" cy="899.3" fill="none"/><circle cx="326.0" cy="898.9" fill="none"/><circle cx="326.1" cy="899.1" fill="none"/><circle cx="326.2" cy="900.7" fill="none"/><circle cx="326.3" cy="901.7" fill="none"/><circle cx="326.4" cy="898.2"/><circle cx="326.4" cy="900.3" fill="none"/><circle cx="326.5" cy="900.9" fill="none"/><circle cx="326.6" cy="899.7" fill="none"/><circle cx="326.7" cy="899.3" fill="none"/><circle cx="326.8" cy="901.3" fill="none"/><circle cx="326.8" cy="900.2" fill="none"/><circle cx="326.9" cy="898.8" fill="none"/><circle cx="327.5" cy="890.6"/><circle cx="327.1" cy="899.8" fill="none"/><circle cx="327.2" cy="899.7" fill="none"/><circle cx="327.2" cy="900.7" fill="none"/><circle cx="327.3" cy="901.5" fill="none"/><circle cx="327.4" cy="900.6" fill="none"/><circle cx="327.5" cy="897.1"/><circle cx="327.6" cy="894.8"/><circle cx="327.6" cy="895.3"/><circle cx="327.7" cy="894.3"/><circle cx="327.8" cy="894.7"/><circle cx="327.9" cy="893.1"/><circle cx="328.0" cy="891.9"/><circle cx="328.0" cy="898.2"/><circle cx="328.1" cy="899.7" fill="none"/><circle cx="328.2" cy="896.4"/><circle cx="328.3" cy="899.2" fill="none"/><circle cx="328.4" cy="901.3" fill="none"/><circle cx="328.4" cy="899.2" fill="none"/><circle cx="328.5" cy="899.1" fill="none"/><circle cx="328.6" cy="898.2"/><circle cx="328.7" cy="895.2"/><circle cx="328.8" cy="898.8" fill="none"/><circle cx="328.9" cy="898.6" fill="none"/><circle cx="328.9" cy="898.2"/><circle cx="329.0" cy="899.0" fill="none"/><circle cx="329.1" cy="899.2" fill="none"/><circle cx="329.2" cy="899.7" fill="none"/><circle cx="329.3" cy="898.7" fill="none"/><circle cx="329.3" cy="900.0" fill="none"/><circle cx="329.4" cy="899.9" fill="none"/><circle cx="329.5" cy="901.0" fill="none"/><circle cx="329.6" cy="900.4" fill="none"/><circle cx="329.7" cy="898.7" fill="none"/><circle cx="329.7" cy="900.0" fill="none"/><circle cx="329.8" cy="900.1" fill="none"/><circle cx="329.9" cy="901.0" fill="none"/><circle cx="330.0" cy="897.8"/><circle cx="330.1" cy="898.3" fill="none"/><circle cx="330.1" cy="897.8"/><circle cx="330.2" cy="891.2"/><circle cx="330.3" cy="895.5"/><circle cx="330.4" cy="897.1"/><circle cx="330.5" cy="899.3" fill="none"/><circle cx="330.5" cy="900.8" fill="none"/><circle cx="330.6" cy="897.9"/><circle cx="330.7" cy="897.8"/><circle cx="330.8" cy="898.1"/><circle cx="330.9" cy="897.5"/><circle cx="330.9" cy="899.3" fill="none"/><circle cx="331.0" cy="898.8" fill="none"/><circle cx="331.1" cy="897.9"/><circle cx="331.2" cy="895.6"/><circle cx="331.3" cy="897.2"/><circle cx="331.3" cy="898.7" fill="none"/><circle cx="331.4" cy="898.7" fill="none"/><circle cx="331.5" cy="897.3"/><circle cx="331.6" cy="895.1"/><circle cx="331.7" cy="897.6"/><circle cx="331.7" cy="899.3" fill="none"/><circle cx="331.8" cy="901.0" fill="none"/><circle cx="331.9" cy="901.1" fill="none"/><circle cx="332.0" cy="900.4" fill="none"/><circle cx="332.1" cy="899.4" fill="none"/><circle cx="332.1" cy="900.7" fill="none"/><circle cx="332.2" cy="901.8" fill="none"/><circle cx="332.3" cy="901.8" fill="none"/><circle cx="332.4" cy="899.8" fill="none"/><circle cx="332.5" cy="898.6" fill="none"/><circle cx="332.5" cy="899.2" fill="none"/><circle cx="332.6" cy="893.9"/><circle cx="332.7" cy="895.3"/><circle cx="332.8" cy="897.4"/><circle cx="332.9" cy="897.5"/><circle cx="333.0" cy="897.9"/><circle cx="333.5" cy="889.4"/><circle cx="333.1" cy="896.8"/><circle cx="333.2" cy="897.7"/><circle cx="333.3" cy="898.0"/><circle cx="333.4" cy="897.4"/><circle cx="333.4" cy="895.3"/><circle cx="333.5" cy="899.6" fill="none"/><circle cx="333.6" cy="900.6" fill="none"/><circle cx="333.7" cy="900.6" fill="none"/><circle cx="333.8" cy="900.9" fill="none"/><circle cx="333.8" cy="900.7" fill="none"/><circle cx="333.9" cy="901.2" fill="none"/><circle cx="334.0" cy="901.5" fill="none"/><circle cx="334.1" cy="901.9" fill="none"/><circle cx="334.2" cy="901.2" fill="none"/><circle cx="334.2" cy="898.8" fill="none"/><circle cx="334.3" cy="900.3" fill="none"/><circle cx="334.4" cy="897.6"/><circle cx="334.5" cy="894.8"/><circle cx="334.6" cy="900.1" fill="none"/><circle cx="334.6" cy="899.5" fill="none"/><circle cx="334.7" cy="898.8" fill="none"/><circle cx="334.8" cy="901.4" fill="none"/><circle cx="334.9" cy="900.6" fill="none"/><circle cx="335.0" cy="900.5" fill="none"/><circle cx="335.0" cy="900.0" fill="none"/><circle cx="335.1" cy="897.0"/><circle cx="335.2" cy="897.4"/><circle cx="335.3" cy="897.0"/><circle cx="335.4" cy="899.9" fill="none"/><circle cx="335.4" cy="898.4" fill="none"/><circle cx="335.5" cy="897.1"/><circle cx="335.6" cy="895.6"/><circle cx="335.7" cy="881.5"/><circle cx="335.8" cy="889.5"/><circle cx="335.8" cy="889.6"/><circle cx="335.9" cy="894.3"/><circle cx="336.0" cy="894.1"/><circle cx="336.1" cy="884.4"/><circle cx="336.2" cy="892.7"/><circle cx="336.2" cy="898.1" fill="none"/><circle cx="336.3" cy="895.4"/><circle cx="336.4" cy="898.0" fill="none"/><circle cx="336.5" cy="898.8" fill="none"/><circle cx="336.6" cy="898.2" fill="none"/><circle cx="336.7" cy="898.9" fill="none"/><circle cx="336.7" cy="898.7" fill="none"/><circle cx="336.8" cy="897.1"/><circle cx="336.9" cy="893.6"/><circle cx="337.0" cy="898.3" fill="none"/><circle cx="337.1" cy="891.3"/><circle cx="337.1" cy="893.8"/><circle cx="337.2" cy="897.6"/><circle cx="337.3" cy="899.6" fill="none"/><circle cx="337.4" cy="898.4" fill="none"/><circle cx="337.5" cy="893.5"/><circle cx="337.5" cy="896.9"/><circle cx="337.6" cy="899.6" fill="none"/><circle cx="337.7" cy="896.4"/><circle cx="337.8" cy="899.4" fill="none"/><circle cx="337.9" cy="898.3" fill="none"/><circle cx="337.9" cy="896.8"/><circle cx="338.0" cy="897.6"/><circle cx="338.1" cy="900.2" fill="none"/><circle cx="338.2" cy="898.7" fill="none"/><circle cx="338.3" cy="897.7"/><circle cx="338.3" cy="898.1" fill="none"/><circle cx="338.4" cy="895.9"/><circle cx="338.5" cy="898.0" fill="none"/><circle cx="338.6" cy="900.6" fill="none"/><circle cx="338.7" cy="901.9" fill="none"/><circle cx="338.7" cy="901.2" fill="none"/><circle cx="338.8" cy="901.2" fill="none"/><circle cx="338.9" cy="899.9" fill="none"/><circle cx="339.0" cy="899.2" fill="none"/><circle cx="339.1" cy="898.9" fill="none"/><circle cx="339.1" cy="899.9" fill="none"/><circle cx="339.2" cy="899.5" fill="none"/><circle cx="339.3" cy="897.5"/><circle cx="339.4" cy="899.8" fill="none"/><circle cx="339.5" cy="896.9"/><circle cx="339.5" cy="898.0" fill="none"/><circle cx="339.6" cy="896.8"/><circle cx="339.7" cy="898.9" fill="none"/><circle cx="339.8" cy="897.1"/><circle cx="339.9" cy="898.0" fill="none"/><circle cx="339.9" cy="898.3" fill="none"/><circle cx="340.0" cy="897.8"/><circle cx="340.1" cy="892.8"/><circle cx="340.2" cy="892.5"/><circle cx="340.3" cy="894.3"/><circle cx="340.3" cy="898.8" fill="none"/><circle cx="340.4" cy="898.8" fill="none"/><circle cx="340.5" cy="900.6" fill="none"/><circle cx="340.6" cy="899.7" fill="none"/><circle cx="340.7" cy="900.0" fill="none"/><circle cx="340.8" cy="899.6" fill="none"/><circle cx="340.8" cy="900.5" fill="none"/><circle cx="340.9" cy="900.1" fill="none"/><circle cx="341.0" cy="899.4" fill="none"/><circle cx="341.1" cy="895.3"/><circle cx="341.2" cy="895.0"/><circle cx="341.2" cy="894.1"/><circle cx="341.3" cy="898.4" fill="none"/><circle cx="341.4" cy="896.5"/><circle cx="341.5" cy="898.6" fill="none"/><circle cx="341.6" cy="900.2" fill="none"/><circle cx="341.6" cy="900.3" fill="none"/><circle cx="341.7" cy="899.6" fill="none"/><circle cx="341.8" cy="900.0" fill="none"/><circle cx="341.9" cy="900.5" fill="none"/><circle cx="342.0" cy="899.2" fill="none"/><circle cx="342.0" cy="900.3" fill="none"/><circle cx="342.1" cy="900.4" fill="none"/><circle cx="342.2" cy="900.7" fill="none"/><circle cx="342.3" cy="900.3" fill="none"/><circle cx="342.4" cy="899.7" fill="none"/><circle cx="342.4" cy="900.5" fill="none"/><circle cx="342.5" cy="898.6" fill="none"/><circle cx="342.6" cy="901.7" fill="none"/><circle cx="342.7" cy="900.9" fill="none"/><circle cx="342.8" cy="898.6" fill="none"/><circle cx="342.8" cy="894.5"/><circle cx="342.9" cy="894.5"/><circle cx="343.0" cy="894.2"/><circle cx="343.1" cy="897.1"/><circle cx="343.2" cy="898.5" fill="none"/><circle cx="343.2" cy="900.2" fill="none"/><circle cx="343.3" cy="900.5" fill="none"/><circle cx="343.4" cy="901.6" fill="none"/><circle cx="343.5" cy="902.2" fill="none"/><circle cx="343.6" cy="900.9" fill="none"/><circle cx="343.6" cy="900.1" fill="none"/><circle cx="343.7" cy="897.4"/><circle cx="343.8" cy="898.5" fill="none"/><circle cx="343.9" cy="900.5" fill="none"/><circle cx="344.0" cy="899.7" fill="none"/><circle cx="344.0" cy="897.1"/><circle cx="344.1" cy="900.8" fill="none"/><circle cx="344.2" cy="900.7" fill="none"/><circle cx="344.3" cy="900.2" fill="none"/><circle cx="344.4" cy="895.0"/><circle cx="344.5" cy="895.7"/><circle cx="344.5" cy="899.4" fill="none"/><circle cx="344.6" cy="900.7" fill="none"/><circle cx="344.7" cy="901.3" fill="none"/><circle cx="344.8" cy="901.5" fill="none"/><circle cx="344.9" cy="900.4" fill="none"/><circle cx="344.9" cy="900.3" fill="none"/><circle cx="345.0" cy="899.8" fill="none"/><circle cx="345.1" cy="901.2" fill="none"/><circle cx="345.2" cy="897.3"/><circle cx="345.3" cy="899.1" fill="none"/><circle cx="345.3" cy="900.9" fill="none"/><circle cx="345.4" cy="900.9" fill="none"/><circle cx="345.5" cy="899.7" fill="none"/><circle cx="345.6" cy="900.1" fill="none"/><circle cx="345.7" cy="900.0" fill="none"/><circle cx="345.7" cy="895.0"/><circle cx="345.8" cy="898.7" fill="none"/><circle cx="345.9" cy="897.4"/><circle cx="346.0" cy="901.3" fill="none"/><circle cx="346.1" cy="900.7" fill="none"/><circle cx="346.1" cy="900.9" fill="none"/><circle cx="346.2" cy="899.5" fill="none"/><circle cx="346.3" cy="899.3" fill="none"/><circle cx="346.4" cy="900.4" fill="none"/><circle cx="346.5" cy="900.1" fill="none"/><circle cx="346.5" cy="899.8" fill="none"/><circle cx="346.6" cy="900.0" fill="none"/><circle cx="346.7" cy="900.7" fill="none"/><circle cx="346.8" cy="901.4" fill="none"/><circle cx="346.9" cy="901.6" fill="none"/><circle cx="346.9" cy="901.4" fill="none"/><circle cx="347.0" cy="901.6" fill="none"/><circle cx="347.1" cy="900.6" fill="none"/><circle cx="347.2" cy="901.5" fill="none"/><circle cx="347.3" cy="902.2" fill="none"/><circle cx="347.3" cy="902.3" fill="none"/><circle cx="347.4" cy="902.2" fill="none"/><circle cx="347.5" cy="902.0" fill="none"/><circle cx="347.6" cy="901.0" fill="none"/><circle cx="347.7" cy="900.7" fill="none"/><circle cx="347.7" cy="899.1" fill="none"/><circle cx="347.8" cy="899.1" fill="none"/><circle cx="347.9" cy="898.8" fill="none"/><circle cx="348.0" cy="896.2"/><circle cx="348.1" cy="897.0"/><circle cx="348.2" cy="896.6"/><circle cx="348.2" cy="898.5" fill="none"/><circle cx="348.3" cy="900.2" fill="none"/><circle cx="348.4" cy="900.4" fill="none"/><circle cx="348.5" cy="897.2"/><circle cx="348.6" cy="897.3" fill="none"/><circle cx="348.6" cy="901.2" fill="none"/><circle cx="348.7" cy="901.7" fill="none"/><circle cx="348.8" cy="900.8" fill="none"/><circle cx="348.9" cy="901.0" fill="none"/><circle cx="349.0" cy="899.6" fill="none"/><circle cx="349.0" cy="898.9" fill="none"/><circle cx="349.1" cy="899.6" fill="none"/><circle cx="349.2" cy="895.4"/><circle cx="349.3" cy="897.4" fill="none"/><circle cx="349.4" cy="890.2"/><circle cx="349.4" cy="892.0"/><circle cx="349.5" cy="892.3"/><circle cx="349.6" cy="893.8"/><circle cx="349.7" cy="898.3" fill="none"/><circle cx="349.8" cy="899.0" fill="none"/><circle cx="349.8" cy="898.1" fill="none"/><circle cx="349.9" cy="899.9" fill="none"/><circle cx="350.0" cy="897.7" fill="none"/><circle cx="350.1" cy="897.7" fill="none"/><circle cx="350.2" cy="897.7" fill="none"/><circle cx="350.2" cy="898.1" fill="none"/><circle cx="350.3" cy="901.4" fill="none"/><circle cx="350.4" cy="900.4" fill="none"/><circle cx="350.5" cy="898.7" fill="none"/><circle cx="350.6" cy="892.2"/><circle cx="350.6" cy="891.3"/><circle cx="350.7" cy="894.3"/><circle cx="350.8" cy="895.1"/><circle cx="350.9" cy="897.4" fill="none"/><circle cx="351.0" cy="898.0" fill="none"/><circle cx="351.0" cy="900.7" fill="none"/><circle cx="351.1" cy="900.0" fill="none"/><circle cx="351.2" cy="896.7"/><circle cx="351.3" cy="896.5"/><circle cx="351.4" cy="899.2" fill="none"/><circle cx="351.4" cy="899.8" fill="none"/><circle cx="351.5" cy="897.3" fill="none"/><circle cx="351.6" cy="893.7"/><circle cx="351.7" cy="898.9" fill="none"/><circle cx="351.8" cy="900.1" fill="none"/><circle cx="351.8" cy="899.9" fill="none"/><circle cx="351.9" cy="898.4" fill="none"/><circle cx="352.0" cy="898.1" fill="none"/><circle cx="352.1" cy="897.6" fill="none"/><circle cx="352.2" cy="895.1"/><circle cx="352.3" cy="894.0"/><circle cx="352.3" cy="898.8" fill="none"/><circle cx="352.4" cy="897.6" fill="none"/><circle cx="352.5" cy="898.7" fill="none"/><circle cx="352.6" cy="899.3" fill="none"/><circle cx="352.7" cy="898.9" fill="none"/><circle cx="352.7" cy="899.0" fill="none"/><circle cx="352.8" cy="899.0" fill="none"/><circle cx="352.9" cy="896.8"/><circle cx="353.0" cy="889.4"/><circle cx="353.1" cy="894.3"/><circle cx="353.1" cy="894.3"/><circle cx="353.2" cy="897.9" fill="none"/><circle cx="353.3" cy="900.1" fill="none"/><circle cx="353.4" cy="901.1" fill="none"/><circle cx="353.5" cy="901.7" fill="none"/><circle cx="353.5" cy="901.1" fill="none"/><circle cx="353.6" cy="900.8" fill="none"/><circle cx="353.7" cy="898.3" fill="none"/><circle cx="353.8" cy="897.6" fill="none"/><circle cx="353.9" cy="896.9"/><circle cx="353.9" cy="898.4" fill="none"/><circle cx="354.0" cy="899.3" fill="none"/><circle cx="354.1" cy="897.3" fill="none"/><circle cx="354.2" cy="897.0" fill="none"/><circle cx="354.3" cy="895.7"/><circle cx="354.3" cy="894.3"/><circle cx="354.4" cy="898.4" fill="none"/><circle cx="354.5" cy="898.8" fill="none"/><circle cx="354.6" cy="894.2"/><circle cx="354.7" cy="893.0"/><circle cx="354.7" cy="884.7"/><circle cx="354.8" cy="890.9"/><circle cx="354.9" cy="891.1"/><circle cx="355.0" cy="885.1"/><circle cx="355.1" cy="876.3"/><circle cx="355.1" cy="876.3"/><circle cx="355.2" cy="889.4"/><circle cx="355.3" cy="893.0"/><circle cx="355.4" cy="897.0" fill="none"/><circle cx="355.5" cy="898.4" fill="none"/><circle cx="355.5" cy="898.1" fill="none"/><circle cx="355.6" cy="899.1" fill="none"/><circle cx="355.7" cy="898.0" fill="none"/><circle cx="355.8" cy="900.5" fill="none"/><circle cx="355.9" cy="899.7" fill="none"/><circle cx="356.0" cy="900.4" fill="none"/><circle cx="356.0" cy="900.3" fill="none"/><circle cx="356.1" cy="896.8" fill="none"/><circle cx="356.2" cy="898.4" fill="none"/><circle cx="356.3" cy="898.0" fill="none"/><circle cx="356.4" cy="896.4"/><circle cx="356.4" cy="893.6"/><circle cx="356.5" cy="879.8"/><circle cx="356.6" cy="895.3"/><circle cx="356.7" cy="898.0" fill="none"/><circle cx="356.8" cy="895.3"/><circle cx="356.8" cy="891.1"/><circle cx="356.9" cy="897.3" fill="none"/><circle cx="357.0" cy="894.7"/><circle cx="357.1" cy="895.9"/><circle cx="357.2" cy="894.9"/><circle cx="357.2" cy="897.9" fill="none"/><circle cx="357.3" cy="895.3"/><circle cx="357.4" cy="892.3"/><circle cx="357.5" cy="899.4" fill="none"/><circle cx="357.6" cy="895.4"/><circle cx="357.6" cy="895.4"/><circle cx="357.7" cy="898.8" fill="none"/><circle cx="357.8" cy="896.3"/><circle cx="357.9" cy="899.1" fill="none"/><circle cx="358.0" cy="897.1" fill="none"/><circle cx="358.0" cy="892.5"/><circle cx="358.1" cy="896.1"/><circle cx="358.2" cy="898.4" fill="none"/><circle cx="358.3" cy="900.6" fill="none"/><circle cx="358.4" cy="900.7" fill="none"/><circle cx="358.4" cy="896.7" fill="none"/><circle cx="358.5" cy="899.3" fill="none"/><circle cx="358.6" cy="895.5"/><circle cx="358.7" cy="893.2"/><circle cx="358.8" cy="896.2"/><circle cx="358.8" cy="894.8"/><circle cx="358.9" cy="895.6"/><circle cx="359.0" cy="895.7"/><circle cx="359.1" cy="894.0"/><circle cx="359.2" cy="893.2"/><circle cx="359.2" cy="896.6" fill="none"/><circle cx="359.3" cy="896.5"/><circle cx="359.4" cy="896.3"/><circle cx="359.5" cy="897.2" fill="none"/><circle cx="359.6" cy="898.8" fill="none"/><circle cx="359.6" cy="898.7" fill="none"/><circle cx="359.7" cy="898.6" fill="none"/><circle cx="359.8" cy="898.2" fill="none"/><circle cx="359.9" cy="900.1" fill="none"/><circle cx="360.0" cy="901.5" fill="none"/><circle cx="360.1" cy="900.0" fill="none"/><circle cx="360.1" cy="899.2" fill="none"/><circle cx="360.2" cy="900.3" fill="none"/><circle cx="360.3" cy="898.3" fill="none"/><circle cx="360.4" cy="898.8" fill="none"/><circle cx="360.5" cy="899.9" fill="none"/><circle cx="360.5" cy="896.7" fill="none"/><circle cx="360.6" cy="893.5"/><circle cx="360.7" cy="896.1"/><circle cx="360.8" cy="893.4"/><circle cx="360.9" cy="892.7"/><circle cx="360.9" cy="898.4" fill="none"/><circle cx="361.0" cy="900.6" fill="none"/><circle cx="361.1" cy="899.8" fill="none"/><circle cx="361.2" cy="900.1" fill="none"/><circle cx="361.3" cy="900.8" fill="none"/><circle cx="361.3" cy="900.5" fill="none"/><circle cx="361.4" cy="899.5" fill="none"/><circle cx="361.5" cy="897.6" fill="none"/><circle cx="361.5" cy="884.0"/><circle cx="361.7" cy="899.5" fill="none"/><circle cx="361.7" cy="897.3" fill="none"/><circle cx="361.8" cy="899.7" fill="none"/><circle cx="361.9" cy="900.8" fill="none"/><circle cx="362.0" cy="900.8" fill="none"/><circle cx="362.1" cy="900.9" fill="none"/><circle cx="362.1" cy="899.8" fill="none"/><circle cx="362.2" cy="900.1" fill="none"/><circle cx="362.3" cy="898.0" fill="none"/><circle cx="362.4" cy="899.3" fill="none"/><circle cx="362.5" cy="900.0" fill="none"/><circle cx="362.5" cy="895.6"/><circle cx="362.6" cy="897.3" fill="none"/><circle cx="362.7" cy="898.7" fill="none"/><circle cx="362.8" cy="897.9" fill="none"/><circle cx="362.9" cy="894.4"/><circle cx="362.9" cy="890.3"/><circle cx="363.0" cy="896.2"/><circle cx="363.1" cy="900.0" fill="none"/><circle cx="363.2" cy="900.9" fill="none"/><circle cx="363.3" cy="900.8" fill="none"/><circle cx="363.3" cy="898.5" fill="none"/><circle cx="363.4" cy="894.9"/><circle cx="363.5" cy="897.9" fill="none"/><circle cx="363.6" cy="899.7" fill="none"/><circle cx="363.7" cy="897.0" fill="none"/><circle cx="363.8" cy="897.6" fill="none"/><circle cx="363.8" cy="898.0" fill="none"/><circle cx="363.9" cy="893.4"/><circle cx="364.0" cy="892.3"/><circle cx="364.1" cy="898.2" fill="none"/><circle cx="364.2" cy="897.3" fill="none"/><circle cx="364.2" cy="897.5" fill="none"/><circle cx="364.3" cy="895.1"/><circle cx="364.4" cy="899.3" fill="none"/><circle cx="364.5" cy="899.3" fill="none"/><circle cx="364.6" cy="900.1" fill="none"/><circle cx="364.6" cy="899.5" fill="none"/><circle cx="364.7" cy="900.5" fill="none"/><circle cx="364.8" cy="898.8" fill="none"/><circle cx="364.9" cy="900.2" fill="none"/><circle cx="365.0" cy="897.8" fill="none"/><circle cx="365.0" cy="894.7"/><circle cx="365.1" cy="896.2"/><circle cx="365.2" cy="892.0"/><circle cx="365.3" cy="887.4"/><circle cx="365.4" cy="892.6"/><circle cx="365.4" cy="897.4" fill="none"/><circle cx="365.5" cy="898.8" fill="none"/><circle cx="365.6" cy="899.6" fill="none"/><circle cx="365.7" cy="897.0" fill="none"/><circle cx="365.8" cy="894.9"/><circle cx="365.8" cy="895.0"/><circle cx="365.9" cy="893.4"/><circle cx="366.0" cy="891.3"/><circle cx="366.1" cy="896.5" fill="none"/><circle cx="366.2" cy="898.1" fill="none"/><circle cx="366.2" cy="900.1" fill="none"/><circle cx="366.3" cy="898.3" fill="none"/><circle cx="366.4" cy="896.9" fill="none"/><circle cx="366.5" cy="894.6"/><circle cx="366.6" cy="894.9"/><circle cx="366.6" cy="895.0"/><circle cx="366.7" cy="897.6" fill="none"/><circle cx="366.8" cy="899.1" fill="none"/><circle cx="366.9" cy="895.2"/><circle cx="367.0" cy="900.1" fill="none"/><circle cx="367.0" cy="897.2" fill="none"/><circle cx="367.1" cy="899.7" fill="none"/><circle cx="367.2" cy="900.2" fill="none"/><circle cx="367.3" cy="897.8" fill="none"/><circle cx="367.4" cy="899.3" fill="none"/><circle cx="367.4" cy="901.1" fill="none"/><circle cx="367.5" cy="879.0"/><circle cx="367.6" cy="897.4" fill="none"/><circle cx="367.7" cy="896.4"/><circle cx="367.8" cy="899.6" fill="none"/><circle cx="367.9" cy="898.7" fill="none"/><circle cx="367.9" cy="898.6" fill="none"/><circle cx="368.0" cy="898.9" fill="none"/><circle cx="368.1" cy="898.1" fill="none"/><circle cx="368.2" cy="899.8" fill="none"/><circle cx="368.3" cy="896.5" fill="none"/><circle cx="368.3" cy="898.3" fill="none"/><circle cx="368.4" cy="897.9" fill="none"/><circle cx="368.5" cy="896.9" fill="none"/><circle cx="368.6" cy="897.3" fill="none"/><circle cx="368.7" cy="895.3"/><circle cx="368.7" cy="896.0"/><circle cx="368.8" cy="894.9"/><circle cx="368.9" cy="898.7" fill="none"/><circle cx="369.0" cy="897.5" fill="none"/><circle cx="369.1" cy="897.6" fill="none"/><circle cx="369.1" cy="899.9" fill="none"/><circle cx="369.2" cy="899.4" fill="none"/><circle cx="369.3" cy="900.0" fill="none"/><circle cx="369.4" cy="900.2" fill="none"/><circle cx="369.5" cy="901.3" fill="none"/><circle cx="369.5" cy="901.5" fill="none"/><circle cx="369.6" cy="901.5" fill="none"/><circle cx="369.7" cy="900.9" fill="none"/><circle cx="369.8" cy="900.2" fill="none"/><circle cx="369.9" cy="900.0" fill="none"/><circle cx="369.9" cy="900.7" fill="none"/><circle cx="370.0" cy="900.0" fill="none"/><circle cx="370.1" cy="897.2" fill="none"/><circle cx="370.2" cy="895.5"/><circle cx="370.3" cy="895.4"/><circle cx="370.3" cy="895.2"/><circle cx="370.4" cy="896.6" fill="none"/><circle cx="370.5" cy="896.8" fill="none"/><circle cx="370.6" cy="896.1"/><circle cx="370.7" cy="895.8"/><circle cx="370.7" cy="894.2"/><circle cx="370.8" cy="891.1"/><circle cx="370.9" cy="887.9"/><circle cx="371.0" cy="889.3"/><circle cx="371.1" cy="893.8"/><circle cx="371.1" cy="898.1" fill="none"/><circle cx="371.2" cy="900.6" fill="none"/><circle cx="371.3" cy="898.3" fill="none"/><circle cx="371.4" cy="896.6" fill="none"/><circle cx="371.5" cy="897.2" fill="none"/><circle cx="371.6" cy="899.4" fill="none"/><circle cx="371.6" cy="898.4" fill="none"/><circle cx="371.7" cy="894.4"/><circle cx="371.8" cy="889.3"/><circle cx="371.9" cy="874.5"/><circle cx="372.0" cy="877.3"/><circle cx="372.0" cy="879.1"/><circle cx="372.1" cy="876.5"/><circle cx="372.2" cy="894.7"/><circle cx="372.3" cy="892.6"/><circle cx="372.4" cy="896.7" fill="none"/><circle cx="372.4" cy="895.9"/><circle cx="372.5" cy="899.7" fill="none"/><circle cx="372.6" cy="900.5" fill="none"/><circle cx="372.7" cy="900.9" fill="none"/><circle cx="372.8" cy="900.9" fill="none"/><circle cx="372.8" cy="899.2" fill="none"/><circle cx="372.9" cy="900.3" fill="none"/><circle cx="373.0" cy="898.6" fill="none"/><circle cx="373.1" cy="895.8"/><circle cx="373.2" cy="899.0" fill="none"/><circle cx="373.2" cy="896.4"/><circle cx="373.3" cy="889.8"/><circle cx="373.4" cy="895.4"/><circle cx="373.5" cy="894.0"/><circle cx="373.6" cy="888.6"/><circle cx="373.6" cy="894.7"/><circle cx="373.7" cy="897.5" fill="none"/><circle cx="373.8" cy="897.9" fill="none"/><circle cx="373.9" cy="898.1" fill="none"/><circle cx="374.0" cy="899.8" fill="none"/><circle cx="374.0" cy="899.9" fill="none"/><circle cx="374.1" cy="900.5" fill="none"/><circle cx="374.2" cy="899.1" fill="none"/><circle cx="374.3" cy="891.2"/><circle cx="374.4" cy="888.3"/><circle cx="374.4" cy="897.1" fill="none"/><circle cx="374.5" cy="893.3"/><circle cx="374.6" cy="897.6" fill="none"/><circle cx="374.7" cy="896.1"/><circle cx="374.8" cy="897.4" fill="none"/><circle cx="374.8" cy="892.8"/><circle cx="374.9" cy="894.4"/><circle cx="375.0" cy="895.2"/><circle cx="375.1" cy="896.0"/><circle cx="375.2" cy="896.9" fill="none"/><circle cx="375.3" cy="896.2"/><circle cx="375.3" cy="889.2"/><circle cx="375.4" cy="882.2"/><circle cx="375.5" cy="883.8"/><circle cx="375.6" cy="889.3"/><circle cx="375.7" cy="893.0"/><circle cx="375.7" cy="887.8"/><circle cx="375.8" cy="895.3"/><circle cx="375.9" cy="898.4" fill="none"/><circle cx="376.0" cy="899.4" fill="none"/><circle cx="376.1" cy="898.4" fill="none"/><circle cx="376.1" cy="897.4" fill="none"/><circle cx="376.2" cy="896.4" fill="none"/><circle cx="376.5" cy="876.6"/><circle cx="376.5" cy="872.4"/><circle cx="376.5" cy="865.0"/><circle cx="376.5" cy="900.1" fill="none"/><circle cx="376.6" cy="900.4" fill="none"/><circle cx="376.7" cy="898.0" fill="none"/><circle cx="376.8" cy="899.9" fill="none"/><circle cx="376.9" cy="899.2" fill="none"/><circle cx="376.9" cy="897.7" fill="none"/><circle cx="377.0" cy="896.8" fill="none"/><circle cx="377.1" cy="894.8"/><circle cx="377.2" cy="892.4"/><circle cx="377.3" cy="893.1"/><circle cx="377.3" cy="891.0"/><circle cx="377.4" cy="893.7"/><circle cx="377.5" cy="895.4"/><circle cx="377.6" cy="881.6"/><circle cx="377.7" cy="889.3"/><circle cx="377.7" cy="893.8"/><circle cx="377.8" cy="899.5" fill="none"/><circle cx="377.9" cy="900.4" fill="none"/><circle cx="378.0" cy="899.7" fill="none"/><circle cx="378.1" cy="900.3" fill="none"/><circle cx="378.1" cy="899.7" fill="none"/><circle cx="378.2" cy="900.8" fill="none"/><circle cx="378.3" cy="898.2" fill="none"/><circle cx="378.4" cy="897.7" fill="none"/><circle cx="378.5" cy="898.6" fill="none"/><circle cx="378.5" cy="899.2" fill="none"/><circle cx="378.6" cy="899.2" fill="none"/><circle cx="378.7" cy="897.3" fill="none"/><circle cx="378.8" cy="898.8" fill="none"/><circle cx="378.9" cy="897.7" fill="none"/><circle cx="378.9" cy="898.4" fill="none"/><circle cx="379.0" cy="900.3" fill="none"/><circle cx="379.1" cy="900.2" fill="none"/><circle cx="379.2" cy="899.7" fill="none"/><circle cx="379.3" cy="898.4" fill="none"/><circle cx="379.4" cy="893.7"/><circle cx="379.4" cy="898.0" fill="none"/><circle cx="379.5" cy="899.2" fill="none"/><circle cx="379.6" cy="897.8" fill="none"/><circle cx="379.7" cy="898.1" fill="none"/><circle cx="379.8" cy="900.4" fill="none"/><circle cx="379.8" cy="898.4" fill="none"/><circle cx="379.9" cy="900.1" fill="none"/><circle cx="380.0" cy="901.1" fill="none"/><circle cx="380.1" cy="901.4" fill="none"/><circle cx="380.2" cy="902.0" fill="none"/><circle cx="380.2" cy="901.9" fill="none"/><circle cx="380.3" cy="900.9" fill="none"/><circle cx="380.4" cy="898.7" fill="none"/><circle cx="380.5" cy="899.2" fill="none"/><circle cx="380.6" cy="900.0" fill="none"/><circle cx="380.6" cy="899.4" fill="none"/><circle cx="380.7" cy="899.9" fill="none"/><circle cx="380.8" cy="891.1"/><circle cx="380.9" cy="883.9"/><circle cx="381.0" cy="886.7"/><circle cx="381.0" cy="892.5"/><circle cx="381.1" cy="892.4"/><circle cx="381.2" cy="890.7"/><circle cx="381.3" cy="894.1"/><circle cx="381.4" cy="892.0"/><circle cx="381.4" cy="874.1"/><circle cx="381.5" cy="895.6"/><circle cx="381.6" cy="895.3"/><circle cx="381.7" cy="892.5"/><circle cx="381.8" cy="896.7" fill="none"/><circle cx="381.8" cy="899.2" fill="none"/><circle cx="381.9" cy="897.9" fill="none"/><circle cx="382.0" cy="898.1" fill="none"/><circle cx="382.1" cy="898.7" fill="none"/><circle cx="382.2" cy="900.2" fill="none"/><circle cx="382.2" cy="896.3"/><circle cx="382.3" cy="897.4" fill="none"/><circle cx="382.4" cy="895.0"/><circle cx="382.5" cy="895.8"/><circle cx="382.6" cy="899.2" fill="none"/><circle cx="382.6" cy="898.8" fill="none"/><circle cx="382.7" cy="901.0" fill="none"/><circle cx="382.8" cy="899.6" fill="none"/><circle cx="382.9" cy="899.1" fill="none"/><circle cx="383.0" cy="900.9" fill="none"/><circle cx="383.1" cy="899.5" fill="none"/><circle cx="383.1" cy="895.8"/><circle cx="383.2" cy="898.4" fill="none"/><circle cx="383.3" cy="901.0" fill="none"/><circle cx="383.4" cy="901.8" fill="none"/><circle cx="383.5" cy="901.6" fill="none"/><circle cx="383.5" cy="898.9" fill="none"/><circle cx="383.6" cy="900.4" fill="none"/><circle cx="383.7" cy="895.8"/><circle cx="383.8" cy="899.1" fill="none"/><circle cx="383.9" cy="898.5" fill="none"/><circle cx="383.9" cy="900.7" fill="none"/><circle cx="384.0" cy="898.9" fill="none"/><circle cx="384.1" cy="899.1" fill="none"/><circle cx="384.2" cy="895.7"/><circle cx="384.3" cy="896.1"/><circle cx="384.3" cy="895.2"/><circle cx="384.4" cy="893.6"/><circle cx="384.5" cy="893.4"/><circle cx="384.6" cy="893.5"/><circle cx="384.7" cy="895.8"/><circle cx="384.7" cy="896.9" fill="none"/><circle cx="384.8" cy="898.5" fill="none"/><circle cx="384.9" cy="894.8"/><circle cx="385.0" cy="897.1" fill="none"/><circle cx="385.1" cy="900.7" fill="none"/><circle cx="385.1" cy="899.5" fill="none"/><circle cx="385.2" cy="897.1" fill="none"/><circle cx="385.3" cy="898.6" fill="none"/><circle cx="385.4" cy="898.5" fill="none"/><circle cx="385.5" cy="899.1" fill="none"/><circle cx="385.5" cy="897.5" fill="none"/><circle cx="385.6" cy="892.8"/><circle cx="385.7" cy="894.1"/><circle cx="385.8" cy="895.6"/><circle cx="385.5" cy="887.1"/><circle cx="385.9" cy="892.1"/><circle cx="386.0" cy="895.6"/><circle cx="386.1" cy="896.4" fill="none"/><circle cx="386.2" cy="890.4"/><circle cx="386.3" cy="892.2"/><circle cx="386.3" cy="892.3"/><circle cx="386.4" cy="897.2" fill="none"/><circle cx="386.5" cy="892.4"/><circle cx="386.6" cy="896.0"/><circle cx="386.7" cy="896.2"/><circle cx="386.7" cy="895.9"/><circle cx="386.8" cy="898.4" fill="none"/><circle cx="386.9" cy="900.0" fill="none"/><circle cx="387.0" cy="896.9" fill="none"/><circle cx="387.1" cy="897.0" fill="none"/><circle cx="387.2" cy="894.1"/><circle cx="387.2" cy="881.2"/><circle cx="387.3" cy="892.4"/><circle cx="387.4" cy="894.0"/><circle cx="387.5" cy="894.7"/><circle cx="387.6" cy="899.4" fill="none"/><circle cx="387.6" cy="900.1" fill="none"/><circle cx="387.7" cy="894.7"/><circle cx="387.8" cy="895.5"/><circle cx="387.9" cy="891.8"/><circle cx="388.0" cy="882.0"/><circle cx="388.0" cy="890.8"/><circle cx="388.1" cy="883.4"/><circle cx="388.2" cy="881.6"/><circle cx="388.3" cy="890.6"/><circle cx="388.4" cy="890.8"/><circle cx="388.4" cy="888.2"/><circle cx="388.5" cy="892.9"/><circle cx="388.6" cy="890.2"/><circle cx="388.7" cy="888.8"/><circle cx="388.8" cy="899.6" fill="none"/><circle cx="388.8" cy="898.6" fill="none"/><circle cx="388.9" cy="899.5" fill="none"/><circle cx="389.0" cy="897.5" fill="none"/><circle cx="389.1" cy="897.6" fill="none"/><circle cx="389.2" cy="894.9"/><circle cx="389.2" cy="896.8" fill="none"/><circle cx="389.3" cy="899.4" fill="none"/><circle cx="389.4" cy="894.4"/><circle cx="389.5" cy="896.5" fill="none"/><circle cx="389.6" cy="893.5"/><circle cx="389.6" cy="895.3"/><circle cx="389.7" cy="898.5" fill="none"/><circle cx="389.8" cy="900.0" fill="none"/><circle cx="389.9" cy="896.5" fill="none"/><circle cx="390.0" cy="895.6"/><circle cx="390.0" cy="895.5"/><circle cx="390.1" cy="899.8" fill="none"/><circle cx="390.2" cy="899.0" fill="none"/><circle cx="390.3" cy="899.3" fill="none"/><circle cx="390.4" cy="898.1" fill="none"/><circle cx="390.4" cy="898.0" fill="none"/><circle cx="390.5" cy="898.5" fill="none"/><circle cx="390.6" cy="898.2" fill="none"/><circle cx="390.7" cy="898.9" fill="none"/><circle cx="390.8" cy="895.5"/><circle cx="390.9" cy="897.7" fill="none"/><circle cx="390.9" cy="898.6" fill="none"/><circle cx="391.0" cy="894.9"/><circle cx="391.1" cy="893.0"/><circle cx="391.2" cy="894.1"/><circle cx="391.3" cy="894.7"/><circle cx="391.3" cy="893.0"/><circle cx="391.4" cy="894.8"/><circle cx="391.5" cy="898.9" fill="none"/><circle cx="391.6" cy="895.5"/><circle cx="391.7" cy="896.7" fill="none"/><circle cx="391.7" cy="900.4" fill="none"/><circle cx="391.8" cy="901.0" fill="none"/><circle cx="391.9" cy="901.0" fill="none"/><circle cx="392.0" cy="900.5" fill="none"/><circle cx="392.1" cy="897.1" fill="none"/><circle cx="392.1" cy="897.7" fill="none"/><circle cx="392.2" cy="898.2" fill="none"/><circle cx="392.3" cy="900.2" fill="none"/><circle cx="392.4" cy="897.5" fill="none"/><circle cx="392.5" cy="897.4" fill="none"/><circle cx="392.5" cy="899.5" fill="none"/><circle cx="392.6" cy="897.7" fill="none"/><circle cx="392.7" cy="892.5"/><circle cx="392.8" cy="895.8"/><circle cx="392.9" cy="896.9" fill="none"/><circle cx="392.9" cy="893.9"/><circle cx="393.0" cy="882.6"/><circle cx="393.1" cy="895.3"/><circle cx="393.5" cy="876.6"/><circle cx="393.5" cy="875.1"/><circle cx="393.3" cy="900.4" fill="none"/><circle cx="393.4" cy="898.5" fill="none"/><circle cx="393.5" cy="900.8" fill="none"/><circle cx="393.6" cy="901.0" fill="none"/><circle cx="393.7" cy="896.5" fill="none"/><circle cx="393.7" cy="898.8" fill="none"/><circle cx="393.8" cy="895.7"/><circle cx="393.9" cy="899.0" fill="none"/><circle cx="394.0" cy="899.3" fill="none"/><circle cx="394.1" cy="898.0" fill="none"/><circle cx="394.1" cy="901.1" fill="none"/><circle cx="394.2" cy="901.0" fill="none"/><circle cx="394.3" cy="897.1" fill="none"/><circle cx="394.4" cy="898.8" fill="none"/><circle cx="394.5" cy="899.0" fill="none"/><circle cx="394.6" cy="898.6" fill="none"/><circle cx="394.6" cy="899.4" fill="none"/><circle cx="394.7" cy="893.2"/><circle cx="394.8" cy="899.1" fill="none"/><circle cx="394.9" cy="895.1"/><circle cx="395.0" cy="892.8"/><circle cx="395.0" cy="894.7"/><circle cx="395.1" cy="890.6"/><circle cx="395.2" cy="898.0" fill="none"/><circle cx="395.3" cy="897.6" fill="none"/><circle cx="395.4" cy="894.8"/><circle cx="395.4" cy="894.3"/><circle cx="395.5" cy="897.9" fill="none"/><circle cx="395.6" cy="897.1" fill="none"/><circle cx="395.7" cy="895.4"/><circle cx="395.8" cy="899.0" fill="none"/><circle cx="395.8" cy="898.7" fill="none"/><circle cx="395.9" cy="900.3" fill="none"/><circle cx="396.0" cy="900.8" fill="none"/><circle cx="396.1" cy="901.4" fill="none"/><circle cx="396.2" cy="900.4" fill="none"/><circle cx="396.2" cy="900.5" fill="none"/><circle cx="396.3" cy="901.0" fill="none"/><circle cx="396.4" cy="899.7" fill="none"/><circle cx="396.5" cy="900.5" fill="none"/><circle cx="396.6" cy="900.5" fill="none"/><circle cx="396.6" cy="901.1" fill="none"/><circle cx="396.7" cy="901.3" fill="none"/><circle cx="396.8" cy="898.5" fill="none"/><circle cx="396.9" cy="898.6" fill="none"/><circle cx="397.0" cy="900.2" fill="none"/><circle cx="397.0" cy="898.4" fill="none"/><circle cx="397.1" cy="899.1" fill="none"/><circle cx="397.2" cy="898.9" fill="none"/><circle cx="397.3" cy="898.2" fill="none"/><circle cx="397.4" cy="894.2"/><circle cx="397.4" cy="891.1"/><circle cx="397.5" cy="898.0" fill="none"/><circle cx="397.5" cy="884.0"/><circle cx="397.7" cy="889.4"/><circle cx="397.8" cy="896.3" fill="none"/><circle cx="397.8" cy="898.0" fill="none"/><circle cx="397.9" cy="897.3" fill="none"/><circle cx="398.0" cy="893.7"/><circle cx="398.1" cy="898.5" fill="none"/><circle cx="398.2" cy="893.5"/><circle cx="398.2" cy="889.6"/><circle cx="398.3" cy="891.3"/><circle cx="398.4" cy="882.1"/><circle cx="398.5" cy="894.3"/><circle cx="398.6" cy="885.3"/><circle cx="398.7" cy="890.2"/><circle cx="398.7" cy="885.7"/><circle cx="398.8" cy="896.2"/><circle cx="398.9" cy="891.5"/><circle cx="399.0" cy="892.3"/><circle cx="399.1" cy="898.1" fill="none"/><circle cx="399.1" cy="898.4" fill="none"/><circle cx="399.2" cy="890.9"/><circle cx="399.3" cy="896.1"/><circle cx="399.4" cy="896.2" fill="none"/><circle cx="399.5" cy="893.5"/><circle cx="399.5" cy="887.7"/><circle cx="399.6" cy="891.4"/><circle cx="399.7" cy="892.1"/><circle cx="399.8" cy="893.3"/><circle cx="399.9" cy="891.3"/><circle cx="399.9" cy="898.1" fill="none"/><circle cx="400.0" cy="899.5" fill="none"/><circle cx="400.1" cy="900.3" fill="none"/><circle cx="400.2" cy="897.0" fill="none"/><circle cx="400.3" cy="899.6" fill="none"/><circle cx="400.3" cy="900.4" fill="none"/><circle cx="400.4" cy="898.0" fill="none"/><circle cx="400.5" cy="900.8" fill="none"/><circle cx="400.6" cy="901.2" fill="none"/><circle cx="400.7" cy="901.0" fill="none"/><circle cx="400.7" cy="898.3" fill="none"/><circle cx="400.8" cy="893.9"/><circle cx="400.9" cy="882.1"/><circle cx="401.0" cy="899.1" fill="none"/><circle cx="401.1" cy="900.6" fill="none"/><circle cx="401.1" cy="899.1" fill="none"/><circle cx="401.2" cy="901.1" fill="none"/><circle cx="401.3" cy="899.3" fill="none"/><circle cx="401.4" cy="900.9" fill="none"/><circle cx="401.5" cy="898.7" fill="none"/><circle cx="401.5" cy="899.3" fill="none"/><circle cx="401.6" cy="900.6" fill="none"/><circle cx="401.7" cy="900.3" fill="none"/><circle cx="401.8" cy="894.7"/><circle cx="401.9" cy="892.6"/><circle cx="401.9" cy="882.0"/><circle cx="402.0" cy="894.2"/><circle cx="402.1" cy="895.6"/><circle cx="402.2" cy="893.6"/><circle cx="402.3" cy="889.8"/><circle cx="402.4" cy="892.6"/><circle cx="402.4" cy="893.7"/><circle cx="402.5" cy="896.4" fill="none"/><circle cx="402.6" cy="897.0" fill="none"/><circle cx="402.7" cy="898.5" fill="none"/><circle cx="402.8" cy="895.6"/><circle cx="402.8" cy="895.0"/><circle cx="402.9" cy="895.9"/><circle cx="403.0" cy="894.9"/><circle cx="403.1" cy="893.1"/><circle cx="403.2" cy="896.2" fill="none"/><circle cx="403.2" cy="897.6" fill="none"/><circle cx="403.3" cy="897.1" fill="none"/><circle cx="403.4" cy="900.3" fill="none"/><circle cx="403.5" cy="900.4" fill="none"/><circle cx="403.6" cy="900.6" fill="none"/><circle cx="403.6" cy="898.7" fill="none"/><circle cx="403.7" cy="900.4" fill="none"/><circle cx="403.8" cy="899.7" fill="none"/><circle cx="403.9" cy="898.6" fill="none"/><circle cx="404.0" cy="900.1" fill="none"/><circle cx="404.0" cy="895.2"/><circle cx="404.1" cy="900.3" fill="none"/><circle cx="404.2" cy="900.9" fill="none"/><circle cx="404.3" cy="895.6"/><circle cx="404.4" cy="880.5"/><circle cx="404.4" cy="886.4"/><circle cx="404.5" cy="885.0"/><circle cx="404.6" cy="893.0"/><circle cx="404.7" cy="894.4"/><circle cx="404.8" cy="896.3" fill="none"/><circle cx="404.8" cy="893.1"/><circle cx="404.9" cy="892.5"/><circle cx="405.0" cy="896.6" fill="none"/><circle cx="405.1" cy="894.6"/><circle cx="405.2" cy="899.5" fill="none"/><circle cx="405.2" cy="893.9"/><circle cx="405.3" cy="898.7" fill="none"/><circle cx="405.4" cy="900.0" fill="none"/><circle cx="405.5" cy="898.0" fill="none"/><circle cx="405.6" cy="897.6" fill="none"/><circle cx="405.6" cy="895.3"/><circle cx="405.7" cy="896.7" fill="none"/><circle cx="405.8" cy="888.0"/><circle cx="405.9" cy="898.9" fill="none"/><circle cx="406.0" cy="895.8"/><circle cx="406.0" cy="882.1"/><circle cx="406.1" cy="880.5"/><circle cx="406.2" cy="886.2"/><circle cx="406.3" cy="886.3"/><circle cx="406.4" cy="891.3"/><circle cx="406.5" cy="889.1"/><circle cx="406.5" cy="893.3"/><circle cx="406.6" cy="892.7"/><circle cx="406.7" cy="894.4"/><circle cx="406.8" cy="895.3"/><circle cx="406.9" cy="898.0" fill="none"/><circle cx="406.9" cy="898.7" fill="none"/><circle cx="407.0" cy="900.6" fill="none"/><circle cx="407.1" cy="900.5" fill="none"/><circle cx="407.2" cy="900.0" fill="none"/><circle cx="407.3" cy="898.9" fill="none"/><circle cx="407.3" cy="898.7" fill="none"/><circle cx="407.4" cy="899.3" fill="none"/><circle cx="407.5" cy="899.1" fill="none"/><circle cx="407.6" cy="899.5" fill="none"/><circle cx="407.7" cy="898.8" fill="none"/><circle cx="407.7" cy="895.9"/><circle cx="407.8" cy="897.6" fill="none"/><circle cx="407.5" cy="880.9"/><circle cx="407.5" cy="871.6"/><circle cx="408.1" cy="897.7" fill="none"/><circle cx="408.1" cy="894.1"/><circle cx="408.2" cy="899.6" fill="none"/><circle cx="408.3" cy="899.4" fill="none"/><circle cx="408.4" cy="900.4" fill="none"/><circle cx="408.5" cy="900.9" fill="none"/><circle cx="408.5" cy="901.0" fill="none"/><circle cx="408.6" cy="900.4" fill="none"/><circle cx="408.7" cy="898.8" fill="none"/><circle cx="408.8" cy="900.0" fill="none"/><circle cx="408.9" cy="900.9" fill="none"/><circle cx="408.9" cy="899.8" fill="none"/><circle cx="409.0" cy="895.9"/><circle cx="409.1" cy="892.4"/><circle cx="409.2" cy="889.0"/><circle cx="409.3" cy="892.8"/><circle cx="409.3" cy="891.0"/><circle cx="409.4" cy="889.7"/><circle cx="409.5" cy="898.4" fill="none"/><circle cx="409.6" cy="897.1" fill="none"/><circle cx="409.7" cy="899.4" fill="none"/><circle cx="409.7" cy="894.5"/><circle cx="409.8" cy="895.4"/><circle cx="409.9" cy="897.5" fill="none"/><circle cx="410.0" cy="896.1"/><circle cx="410.1" cy="895.8"/><circle cx="410.2" cy="893.1"/><circle cx="410.2" cy="891.2"/><circle cx="410.3" cy="897.5" fill="none"/><circle cx="410.4" cy="898.9" fill="none"/><circle cx="410.5" cy="898.8" fill="none"/><circle cx="410.6" cy="897.1" fill="none"/><circle cx="410.6" cy="891.9"/><circle cx="410.7" cy="895.6"/><circle cx="410.8" cy="895.0"/><circle cx="410.9" cy="891.9"/><circle cx="411.0" cy="890.8"/><circle cx="411.0" cy="895.9"/><circle cx="411.1" cy="896.3" fill="none"/><circle cx="411.2" cy="894.3"/><circle cx="411.3" cy="895.6"/><circle cx="411.4" cy="896.3" fill="none"/><circle cx="411.4" cy="897.9" fill="none"/><circle cx="411.5" cy="899.7" fill="none"/><circle cx="411.6" cy="899.8" fill="none"/><circle cx="411.7" cy="900.5" fill="none"/><circle cx="411.8" cy="900.3" fill="none"/><circle cx="411.8" cy="900.0" fill="none"/><circle cx="411.9" cy="895.6"/><circle cx="412.0" cy="892.6"/><circle cx="412.1" cy="894.9"/><circle cx="412.2" cy="893.8"/><circle cx="412.2" cy="900.1" fill="none"/><circle cx="412.3" cy="899.3" fill="none"/><circle cx="412.4" cy="895.4"/><circle cx="412.5" cy="899.7" fill="none"/><circle cx="412.6" cy="900.7" fill="none"/><circle cx="412.6" cy="900.7" fill="none"/><circle cx="412.7" cy="900.7" fill="none"/><circle cx="412.8" cy="899.4" fill="none"/><circle cx="412.9" cy="897.2" fill="none"/><circle cx="413.0" cy="899.4" fill="none"/><circle cx="413.0" cy="900.4" fill="none"/><circle cx="413.1" cy="898.5" fill="none"/><circle cx="413.2" cy="895.6"/><circle cx="413.3" cy="892.2"/><circle cx="413.4" cy="892.6"/><circle cx="413.4" cy="896.0"/><circle cx="413.5" cy="896.9" fill="none"/><circle cx="413.6" cy="899.3" fill="none"/><circle cx="413.7" cy="900.4" fill="none"/><circle cx="413.8" cy="901.1" fill="none"/><circle cx="413.8" cy="900.4" fill="none"/><circle cx="413.9" cy="899.5" fill="none"/><circle cx="414.0" cy="899.5" fill="none"/><circle cx="414.1" cy="898.9" fill="none"/><circle cx="414.2" cy="897.5" fill="none"/><circle cx="414.3" cy="896.7" fill="none"/><circle cx="414.3" cy="898.1" fill="none"/><circle cx="414.4" cy="898.3" fill="none"/><circle cx="414.5" cy="897.1" fill="none"/><circle cx="414.6" cy="895.9"/><circle cx="414.7" cy="892.7"/><circle cx="414.7" cy="873.0"/><circle cx="414.8" cy="876.6"/><circle cx="414.9" cy="890.6"/><circle cx="415.0" cy="889.3"/><circle cx="415.1" cy="893.4"/><circle cx="415.1" cy="897.2" fill="none"/><circle cx="415.2" cy="899.7" fill="none"/><circle cx="415.5" cy="875.1"/><circle cx="415.5" cy="863.1"/><circle cx="415.5" cy="856.9"/><circle cx="415.5" cy="836.7"/><circle cx="415.6" cy="888.5"/><circle cx="415.7" cy="895.1"/><circle cx="415.8" cy="896.1" fill="none"/><circle cx="415.9" cy="897.5" fill="none"/><circle cx="415.9" cy="898.9" fill="none"/><circle cx="416.0" cy="897.5" fill="none"/><circle cx="416.1" cy="895.5"/><circle cx="416.2" cy="896.8" fill="none"/><circle cx="416.3" cy="897.1" fill="none"/><circle cx="416.3" cy="897.1" fill="none"/><circle cx="416.4" cy="896.7" fill="none"/><circle cx="416.5" cy="898.2" fill="none"/><circle cx="416.6" cy="899.5" fill="none"/><circle cx="416.7" cy="897.8" fill="none"/><circle cx="416.7" cy="899.8" fill="none"/><circle cx="416.8" cy="897.5" fill="none"/><circle cx="416.9" cy="898.2" fill="none"/><circle cx="417.0" cy="897.6" fill="none"/><circle cx="417.1" cy="898.3" fill="none"/><circle cx="417.1" cy="894.2"/><circle cx="417.2" cy="894.7"/><circle cx="417.3" cy="886.5"/><circle cx="417.4" cy="893.3"/><circle cx="417.5" cy="896.3" fill="none"/><circle cx="417.5" cy="892.5"/><circle cx="417.6" cy="881.8"/><circle cx="417.7" cy="893.5"/><circle cx="417.8" cy="897.4" fill="none"/><circle cx="417.9" cy="895.0"/><circle cx="418.0" cy="896.2" fill="none"/><circle cx="418.0" cy="893.2"/><circle cx="418.1" cy="890.1"/><circle cx="418.2" cy="893.7"/><circle cx="418.3" cy="896.0" fill="none"/><circle cx="418.4" cy="894.9"/><circle cx="418.4" cy="891.1"/><circle cx="418.5" cy="889.8"/><circle cx="418.6" cy="896.1" fill="none"/><circle cx="418.7" cy="895.8"/><circle cx="418.8" cy="893.7"/><circle cx="418.8" cy="891.3"/><circle cx="418.9" cy="893.6"/><circle cx="419.0" cy="894.8"/><circle cx="419.1" cy="899.2" fill="none"/><circle cx="419.2" cy="899.8" fill="none"/><circle cx="419.2" cy="894.7"/><circle cx="419.3" cy="896.1" fill="none"/><circle cx="419.4" cy="896.9" fill="none"/><circle cx="419.5" cy="896.1" fill="none"/><circle cx="419.6" cy="897.6" fill="none"/><circle cx="419.6" cy="901.1" fill="none"/><circle cx="419.7" cy="901.9" fill="none"/><circle cx="419.8" cy="901.3" fill="none"/><circle cx="419.9" cy="900.0" fill="none"/><circle cx="420.0" cy="899.8" fill="none"/><circle cx="420.0" cy="897.8" fill="none"/><circle cx="420.1" cy="899.0" fill="none"/><circle cx="420.2" cy="896.1" fill="none"/><circle cx="420.3" cy="894.7"/><circle cx="420.4" cy="898.5" fill="none"/><circle cx="420.4" cy="898.3" fill="none"/><circle cx="420.5" cy="896.6" fill="none"/><circle cx="420.6" cy="889.8"/><circle cx="420.7" cy="897.3" fill="none"/><circle cx="420.8" cy="898.4" fill="none"/><circle cx="420.8" cy="897.8" fill="none"/><circle cx="420.9" cy="901.6" fill="none"/><circle cx="421.0" cy="901.2" fill="none"/><circle cx="421.1" cy="900.5" fill="none"/><circle cx="421.2" cy="899.7" fill="none"/><circle cx="421.2" cy="895.5"/><circle cx="421.3" cy="891.3"/><circle cx="421.4" cy="891.4"/><circle cx="421.5" cy="888.3"/><circle cx="421.6" cy="893.9"/><circle cx="421.7" cy="894.1"/><circle cx="421.7" cy="893.2"/><circle cx="421.8" cy="897.9" fill="none"/><circle cx="421.9" cy="894.4"/><circle cx="422.0" cy="896.0"/><circle cx="422.1" cy="900.1" fill="none"/><circle cx="422.1" cy="897.3" fill="none"/><circle cx="422.2" cy="899.1" fill="none"/><circle cx="422.3" cy="900.6" fill="none"/><circle cx="422.4" cy="899.8" fill="none"/><circle cx="422.5" cy="899.3" fill="none"/><circle cx="422.5" cy="895.8"/><circle cx="422.6" cy="898.5" fill="none"/><circle cx="422.7" cy="894.0"/><circle cx="422.8" cy="890.9"/><circle cx="422.9" cy="891.7"/><circle cx="422.9" cy="891.7"/><circle cx="423.0" cy="889.3"/><circle cx="423.1" cy="895.6"/><circle cx="423.2" cy="893.8"/><circle cx="423.3" cy="893.0"/><circle cx="423.3" cy="898.7" fill="none"/><circle cx="423.4" cy="900.5" fill="none"/><circle cx="423.5" cy="899.8" fill="none"/><circle cx="423.6" cy="898.9" fill="none"/><circle cx="423.7" cy="900.0" fill="none"/><circle cx="423.7" cy="896.8" fill="none"/><circle cx="423.8" cy="896.3" fill="none"/><circle cx="423.9" cy="893.4"/><circle cx="424.0" cy="895.1"/><circle cx="424.1" cy="896.7" fill="none"/><circle cx="424.1" cy="893.8"/><circle cx="424.2" cy="894.9"/><circle cx="424.3" cy="889.4"/><circle cx="424.4" cy="891.3"/><circle cx="424.5" cy="892.0"/><circle cx="424.5" cy="895.9"/><circle cx="424.6" cy="892.7"/><circle cx="424.7" cy="884.5"/><circle cx="424.8" cy="891.4"/><circle cx="424.9" cy="873.0"/><circle cx="424.9" cy="879.5"/><circle cx="425.0" cy="887.9"/><circle cx="425.1" cy="888.4"/><circle cx="425.2" cy="893.5"/><circle cx="425.3" cy="893.5"/><circle cx="425.3" cy="890.4"/><circle cx="425.4" cy="891.2"/><circle cx="425.5" cy="893.2"/><circle cx="425.6" cy="896.8" fill="none"/><circle cx="425.7" cy="895.2"/><circle cx="425.8" cy="896.4" fill="none"/><circle cx="425.8" cy="898.6" fill="none"/><circle cx="425.9" cy="894.2"/><circle cx="426.0" cy="885.8"/><circle cx="426.1" cy="889.4"/><circle cx="426.2" cy="887.2"/><circle cx="426.2" cy="880.1"/><circle cx="426.3" cy="881.7"/><circle cx="426.4" cy="886.4"/><circle cx="426.5" cy="889.9"/><circle cx="426.6" cy="884.7"/><circle cx="426.6" cy="894.7"/><circle cx="426.7" cy="897.9" fill="none"/><circle cx="426.8" cy="896.2" fill="none"/><circle cx="426.9" cy="898.2" fill="none"/><circle cx="427.0" cy="900.0" fill="none"/><circle cx="427.0" cy="899.2" fill="none"/><circle cx="427.1" cy="898.9" fill="none"/><circle cx="427.2" cy="899.7" fill="none"/><circle cx="427.3" cy="897.8" fill="none"/><circle cx="427.4" cy="898.0" fill="none"/><circle cx="427.4" cy="899.1" fill="none"/><circle cx="427.5" cy="899.4" fill="none"/><circle cx="427.6" cy="900.7" fill="none"/><circle cx="427.7" cy="899.9" fill="none"/><circle cx="427.5" cy="877.8"/><circle cx="427.5" cy="867.0"/><circle cx="427.9" cy="898.4" fill="none"/><circle cx="428.0" cy="895.1"/><circle cx="428.1" cy="894.3"/><circle cx="428.2" cy="894.0"/><circle cx="428.2" cy="896.8" fill="none"/><circle cx="428.3" cy="896.5" fill="none"/><circle cx="428.4" cy="898.5" fill="none"/><circle cx="428.5" cy="898.9" fill="none"/><circle cx="428.6" cy="896.1" fill="none"/><circle cx="428.6" cy="894.4"/><circle cx="428.7" cy="896.9" fill="none"/><circle cx="428.8" cy="889.6"/><circle cx="428.9" cy="886.6"/><circle cx="429.0" cy="886.6"/><circle cx="429.0" cy="886.7"/><circle cx="429.1" cy="883.4"/><circle cx="429.2" cy="890.2"/><circle cx="429.3" cy="890.5"/><circle cx="429.4" cy="889.4"/><circle cx="429.5" cy="896.3" fill="none"/><circle cx="429.5" cy="899.7" fill="none"/><circle cx="429.6" cy="898.6" fill="none"/><circle cx="429.7" cy="899.4" fill="none"/><circle cx="429.8" cy="898.4" fill="none"/><circle cx="429.9" cy="900.2" fill="none"/><circle cx="429.9" cy="898.6" fill="none"/><circle cx="430.0" cy="893.9"/><circle cx="430.1" cy="894.8"/><circle cx="430.2" cy="889.6"/><circle cx="430.3" cy="893.1"/><circle cx="430.3" cy="896.1"/><circle cx="430.4" cy="897.8" fill="none"/><circle cx="430.5" cy="900.8" fill="none"/><circle cx="430.6" cy="900.2" fill="none"/><circle cx="430.7" cy="899.4" fill="none"/><circle cx="430.7" cy="898.2" fill="none"/><circle cx="430.8" cy="898.4" fill="none"/><circle cx="430.9" cy="898.4" fill="none"/><circle cx="431.0" cy="898.7" fill="none"/><circle cx="431.1" cy="901.0" fill="none"/><circle cx="431.1" cy="901.1" fill="none"/><circle cx="431.2" cy="900.0" fill="none"/><circle cx="431.3" cy="900.9" fill="none"/><circle cx="431.4" cy="899.1" fill="none"/><circle cx="431.5" cy="893.5"/><circle cx="431.5" cy="885.3"/><circle cx="431.6" cy="891.3"/><circle cx="431.7" cy="895.3"/><circle cx="431.8" cy="891.0"/><circle cx="431.9" cy="895.7"/><circle cx="431.9" cy="897.9" fill="none"/><circle cx="432.0" cy="893.5"/><circle cx="432.1" cy="898.3" fill="none"/><circle cx="432.2" cy="899.7" fill="none"/><circle cx="432.3" cy="897.5" fill="none"/><circle cx="432.3" cy="898.1" fill="none"/><circle cx="432.4" cy="898.4" fill="none"/><circle cx="432.5" cy="896.2" fill="none"/><circle cx="432.6" cy="893.5"/><circle cx="432.7" cy="896.0"/><circle cx="432.7" cy="896.0"/><circle cx="432.8" cy="893.8"/><circle cx="432.9" cy="885.1"/><circle cx="433.0" cy="890.0"/><circle cx="433.1" cy="895.3"/><circle cx="433.1" cy="896.1"/><circle cx="433.2" cy="894.6"/><circle cx="433.3" cy="893.8"/><circle cx="433.4" cy="899.1" fill="none"/><circle cx="433.5" cy="899.1" fill="none"/><circle cx="433.6" cy="900.0" fill="none"/><circle cx="433.6" cy="897.1" fill="none"/><circle cx="433.7" cy="896.2" fill="none"/><circle cx="433.8" cy="897.6" fill="none"/><circle cx="433.9" cy="889.6"/><circle cx="434.0" cy="897.0" fill="none"/><circle cx="434.0" cy="898.0" fill="none"/><circle cx="434.1" cy="895.8"/><circle cx="434.2" cy="894.4"/><circle cx="434.3" cy="897.0" fill="none"/><circle cx="434.4" cy="896.0"/><circle cx="434.4" cy="894.0"/><circle cx="434.5" cy="891.4"/><circle cx="434.6" cy="896.7" fill="none"/><circle cx="434.7" cy="898.9" fill="none"/><circle cx="434.8" cy="899.5" fill="none"/><circle cx="434.8" cy="899.5" fill="none"/><circle cx="434.9" cy="898.4" fill="none"/><circle cx="435.0" cy="900.6" fill="none"/><circle cx="435.1" cy="892.9"/><circle cx="435.2" cy="888.1"/><circle cx="435.2" cy="889.6"/><circle cx="435.3" cy="892.6"/><circle cx="435.4" cy="885.9"/><circle cx="435.5" cy="890.6"/><circle cx="435.6" cy="891.5"/><circle cx="435.6" cy="897.3" fill="none"/><circle cx="435.7" cy="896.9" fill="none"/><circle cx="435.8" cy="899.7" fill="none"/><circle cx="435.9" cy="899.8" fill="none"/><circle cx="436.0" cy="897.8" fill="none"/><circle cx="436.0" cy="899.6" fill="none"/><circle cx="436.1" cy="899.4" fill="none"/><circle cx="436.2" cy="901.0" fill="none"/><circle cx="436.3" cy="901.1" fill="none"/><circle cx="436.4" cy="900.9" fill="none"/><circle cx="436.4" cy="899.8" fill="none"/><circle cx="436.5" cy="897.0" fill="none"/><circle cx="436.5" cy="876.6"/><circle cx="436.5" cy="870.8"/><circle cx="436.5" cy="856.9"/><circle cx="436.8" cy="899.2" fill="none"/><circle cx="436.9" cy="899.8" fill="none"/><circle cx="437.0" cy="899.8" fill="none"/><circle cx="437.1" cy="900.8" fill="none"/><circle cx="437.2" cy="900.4" fill="none"/><circle cx="437.3" cy="899.7" fill="none"/><circle cx="437.3" cy="899.1" fill="none"/><circle cx="437.4" cy="899.7" fill="none"/><circle cx="437.5" cy="899.8" fill="none"/><circle cx="437.6" cy="898.7" fill="none"/><circle cx="437.7" cy="898.0" fill="none"/><circle cx="437.7" cy="897.3" fill="none"/><circle cx="437.8" cy="897.0" fill="none"/><circle cx="437.9" cy="897.9" fill="none"/><circle cx="438.0" cy="895.9"/><circle cx="438.1" cy="898.7" fill="none"/><circle cx="438.1" cy="892.4"/><circle cx="438.2" cy="896.8" fill="none"/><circle cx="438.3" cy="896.1"/><circle cx="438.4" cy="890.2"/><circle cx="438.5" cy="889.2"/><circle cx="438.5" cy="889.6"/><circle cx="438.6" cy="894.6"/><circle cx="438.7" cy="889.9"/><circle cx="438.8" cy="894.2"/><circle cx="438.9" cy="894.2"/><circle cx="438.9" cy="896.6" fill="none"/><circle cx="439.0" cy="897.4" fill="none"/><circle cx="439.1" cy="899.0" fill="none"/><circle cx="439.2" cy="900.5" fill="none"/><circle cx="439.3" cy="898.0" fill="none"/><circle cx="439.3" cy="899.5" fill="none"/><circle cx="439.4" cy="899.1" fill="none"/><circle cx="439.5" cy="899.2" fill="none"/><circle cx="439.6" cy="899.6" fill="none"/><circle cx="439.7" cy="900.0" fill="none"/><circle cx="439.7" cy="899.3" fill="none"/><circle cx="439.8" cy="898.8" fill="none"/><circle cx="439.9" cy="901.4" fill="none"/><circle cx="440.0" cy="901.5" fill="none"/><circle cx="440.1" cy="901.0" fill="none"/><circle cx="440.1" cy="899.3" fill="none"/><circle cx="440.2" cy="899.1" fill="none"/><circle cx="440.3" cy="896.1"/><circle cx="440.4" cy="897.0" fill="none"/><circle cx="440.5" cy="897.1" fill="none"/><circle cx="440.5" cy="897.9" fill="none"/><circle cx="440.6" cy="897.2" fill="none"/><circle cx="440.7" cy="901.2" fill="none"/><circle cx="440.8" cy="900.3" fill="none"/><circle cx="440.9" cy="899.3" fill="none"/><circle cx="441.0" cy="899.5" fill="none"/><circle cx="441.0" cy="900.0" fill="none"/><circle cx="441.1" cy="898.2" fill="none"/><circle cx="441.2" cy="899.9" fill="none"/><circle cx="441.3" cy="898.9" fill="none"/><circle cx="441.4" cy="897.5" fill="none"/><circle cx="441.4" cy="900.4" fill="none"/><circle cx="441.5" cy="901.5" fill="none"/><circle cx="441.6" cy="901.1" fill="none"/><circle cx="441.7" cy="899.4" fill="none"/><circle cx="441.8" cy="899.6" fill="none"/><circle cx="441.8" cy="900.1" fill="none"/><circle cx="441.9" cy="899.0" fill="none"/><circle cx="442.0" cy="898.3" fill="none"/><circle cx="442.1" cy="899.3" fill="none"/><circle cx="442.2" cy="898.5" fill="none"/><circle cx="442.2" cy="895.3"/><circle cx="442.3" cy="896.9" fill="none"/><circle cx="442.4" cy="892.4"/><circle cx="442.5" cy="892.5"/><circle cx="442.6" cy="885.8"/><circle cx="442.6" cy="887.4"/><circle cx="442.7" cy="887.8"/><circle cx="442.8" cy="894.3"/><circle cx="442.9" cy="882.4"/><circle cx="443.0" cy="895.8"/><circle cx="443.0" cy="894.1"/><circle cx="443.1" cy="895.2"/><circle cx="443.5" cy="883.2"/><circle cx="443.3" cy="900.0" fill="none"/><circle cx="443.4" cy="900.2" fill="none"/><circle cx="443.4" cy="898.5" fill="none"/><circle cx="443.5" cy="898.6" fill="none"/><circle cx="443.6" cy="898.8" fill="none"/><circle cx="443.7" cy="901.9" fill="none"/><circle cx="443.8" cy="902.0" fill="none"/><circle cx="443.8" cy="901.8" fill="none"/><circle cx="443.9" cy="901.4" fill="none"/><circle cx="444.0" cy="901.9" fill="none"/><circle cx="444.1" cy="899.1" fill="none"/><circle cx="444.2" cy="899.3" fill="none"/><circle cx="444.2" cy="896.9" fill="none"/><circle cx="444.3" cy="900.2" fill="none"/><circle cx="444.4" cy="900.7" fill="none"/><circle cx="444.5" cy="899.3" fill="none"/><circle cx="444.6" cy="899.4" fill="none"/><circle cx="444.6" cy="899.8" fill="none"/><circle cx="444.7" cy="896.2"/><circle cx="444.8" cy="896.7" fill="none"/><circle cx="444.9" cy="898.8" fill="none"/><circle cx="445.0" cy="900.2" fill="none"/><circle cx="445.1" cy="899.0" fill="none"/><circle cx="445.1" cy="897.5" fill="none"/><circle cx="445.2" cy="893.3"/><circle cx="445.3" cy="894.0"/><circle cx="445.4" cy="894.8"/><circle cx="445.5" cy="894.2"/><circle cx="445.5" cy="882.8"/><circle cx="445.6" cy="887.8"/><circle cx="445.7" cy="883.2"/><circle cx="445.8" cy="891.9"/><circle cx="445.9" cy="896.5" fill="none"/><circle cx="445.9" cy="898.9" fill="none"/><circle cx="446.0" cy="898.5" fill="none"/><circle cx="446.1" cy="899.1" fill="none"/><circle cx="446.2" cy="896.8" fill="none"/><circle cx="446.3" cy="895.0"/><circle cx="446.3" cy="895.7"/><circle cx="446.4" cy="897.0" fill="none"/><circle cx="446.5" cy="899.5" fill="none"/><circle cx="446.6" cy="899.1" fill="none"/><circle cx="446.7" cy="897.7" fill="none"/><circle cx="446.7" cy="891.0"/><circle cx="446.8" cy="890.1"/><circle cx="446.9" cy="896.7" fill="none"/><circle cx="447.0" cy="890.7"/><circle cx="447.1" cy="889.9"/><circle cx="447.1" cy="893.1"/><circle cx="447.2" cy="898.1" fill="none"/><circle cx="447.3" cy="897.3" fill="none"/><circle cx="447.4" cy="899.3" fill="none"/><circle cx="447.5" cy="898.8" fill="none"/><circle cx="447.5" cy="900.7" fill="none"/><circle cx="447.6" cy="900.7" fill="none"/><circle cx="447.7" cy="899.8" fill="none"/><circle cx="447.8" cy="898.0" fill="none"/><circle cx="447.9" cy="895.3"/><circle cx="447.9" cy="891.8"/><circle cx="448.0" cy="895.0"/><circle cx="448.1" cy="895.0"/><circle cx="448.2" cy="891.6"/><circle cx="448.3" cy="896.5" fill="none"/><circle cx="448.3" cy="896.5" fill="none"/><circle cx="448.4" cy="896.6" fill="none"/><circle cx="448.5" cy="897.3" fill="none"/><circle cx="448.6" cy="889.6"/><circle cx="448.7" cy="896.4" fill="none"/><circle cx="448.8" cy="896.0"/><circle cx="448.8" cy="897.3" fill="none"/><circle cx="448.9" cy="898.5" fill="none"/><circle cx="449.0" cy="897.1" fill="none"/><circle cx="449.1" cy="899.7" fill="none"/><circle cx="449.2" cy="900.3" fill="none"/><circle cx="449.2" cy="899.4" fill="none"/><circle cx="449.3" cy="897.5" fill="none"/><circle cx="449.4" cy="897.5" fill="none"/><circle cx="449.5" cy="898.1" fill="none"/><circle cx="449.6" cy="901.1" fill="none"/><circle cx="449.6" cy="901.4" fill="none"/><circle cx="449.7" cy="901.4" fill="none"/><circle cx="449.8" cy="902.0" fill="none"/><circle cx="449.9" cy="900.5" fill="none"/><circle cx="450.0" cy="900.7" fill="none"/><circle cx="450.0" cy="899.9" fill="none"/><circle cx="450.1" cy="900.3" fill="none"/><circle cx="450.2" cy="899.2" fill="none"/><circle cx="450.3" cy="892.8"/><circle cx="450.4" cy="898.5" fill="none"/><circle cx="450.4" cy="898.2" fill="none"/><circle cx="450.5" cy="896.9" fill="none"/><circle cx="450.6" cy="899.4" fill="none"/><circle cx="450.7" cy="900.8" fill="none"/><circle cx="450.8" cy="898.8" fill="none"/><circle cx="450.8" cy="895.0"/><circle cx="450.9" cy="890.6"/><circle cx="451.0" cy="898.7" fill="none"/><circle cx="451.1" cy="889.5"/><circle cx="451.2" cy="895.2"/><circle cx="451.2" cy="896.4" fill="none"/><circle cx="451.3" cy="885.0"/><circle cx="451.4" cy="894.1"/><circle cx="451.5" cy="880.8"/><circle cx="451.6" cy="887.8"/><circle cx="451.6" cy="897.4" fill="none"/><circle cx="451.7" cy="889.8"/><circle cx="451.8" cy="894.7"/><circle cx="451.9" cy="898.6" fill="none"/><circle cx="452.0" cy="898.2" fill="none"/><circle cx="452.0" cy="894.3"/><circle cx="452.1" cy="893.6"/><circle cx="452.2" cy="892.3"/><circle cx="452.3" cy="897.8" fill="none"/><circle cx="452.4" cy="898.9" fill="none"/><circle cx="452.4" cy="899.2" fill="none"/><circle cx="452.5" cy="894.8"/><circle cx="452.6" cy="895.0"/><circle cx="452.7" cy="896.8" fill="none"/><circle cx="452.8" cy="900.0" fill="none"/><circle cx="452.9" cy="901.2" fill="none"/><circle cx="452.9" cy="900.4" fill="none"/><circle cx="453.0" cy="898.0" fill="none"/><circle cx="453.1" cy="896.0"/><circle cx="453.2" cy="895.0"/><circle cx="453.3" cy="898.1" fill="none"/><circle cx="453.3" cy="896.6" fill="none"/><circle cx="453.4" cy="893.1"/><circle cx="453.5" cy="899.2" fill="none"/><circle cx="453.6" cy="892.6"/><circle cx="453.7" cy="893.7"/><circle cx="453.7" cy="897.6" fill="none"/><circle cx="453.8" cy="891.7"/><circle cx="453.9" cy="899.0" fill="none"/><circle cx="454.0" cy="901.8" fill="none"/><circle cx="454.1" cy="901.7" fill="none"/><circle cx="454.1" cy="900.8" fill="none"/><circle cx="454.2" cy="900.3" fill="none"/><circle cx="454.3" cy="898.8" fill="none"/><circle cx="454.4" cy="899.7" fill="none"/><circle cx="454.5" cy="897.4" fill="none"/><circle cx="454.5" cy="894.0"/><circle cx="454.6" cy="894.4"/><circle cx="454.7" cy="896.4"/><circle cx="454.8" cy="897.4" fill="none"/><circle cx="454.9" cy="899.5" fill="none"/><circle cx="454.9" cy="891.4"/><circle cx="455.0" cy="894.9"/><circle cx="455.1" cy="892.5"/><circle cx="455.2" cy="898.5" fill="none"/><circle cx="455.3" cy="899.0" fill="none"/><circle cx="455.3" cy="898.9" fill="none"/><circle cx="455.4" cy="898.9" fill="none"/><circle cx="455.5" cy="898.2" fill="none"/><circle cx="455.6" cy="898.8" fill="none"/><circle cx="455.5" cy="877.4"/><circle cx="455.7" cy="898.4" fill="none"/><circle cx="455.8" cy="899.4" fill="none"/><circle cx="455.9" cy="895.5"/><circle cx="456.0" cy="893.9"/><circle cx="456.1" cy="896.8" fill="none"/><circle cx="456.1" cy="895.3"/><circle cx="456.2" cy="893.3"/><circle cx="456.3" cy="895.6"/><circle cx="456.4" cy="898.4" fill="none"/><circle cx="456.5" cy="899.6" fill="none"/><circle cx="456.6" cy="893.9"/><circle cx="456.6" cy="898.2" fill="none"/><circle cx="456.7" cy="898.7" fill="none"/><circle cx="456.8" cy="898.6" fill="none"/><circle cx="456.9" cy="899.6" fill="none"/><circle cx="457.0" cy="899.0" fill="none"/><circle cx="457.0" cy="898.6" fill="none"/><circle cx="457.5" cy="872.4"/><circle cx="457.2" cy="898.3" fill="none"/><circle cx="457.3" cy="895.8"/><circle cx="457.4" cy="895.7"/><circle cx="457.4" cy="889.1"/><circle cx="457.5" cy="885.9"/><circle cx="457.6" cy="890.6"/><circle cx="457.7" cy="897.6" fill="none"/><circle cx="457.8" cy="898.0" fill="none"/><circle cx="457.8" cy="899.9" fill="none"/><circle cx="457.9" cy="895.9"/><circle cx="458.0" cy="896.9" fill="none"/><circle cx="458.1" cy="898.3" fill="none"/><circle cx="458.2" cy="900.0" fill="none"/><circle cx="458.2" cy="900.5" fill="none"/><circle cx="458.3" cy="898.0" fill="none"/><circle cx="458.4" cy="898.9" fill="none"/><circle cx="458.5" cy="895.1"/><circle cx="458.6" cy="896.3"/><circle cx="458.6" cy="897.0" fill="none"/><circle cx="458.7" cy="900.7" fill="none"/><circle cx="458.8" cy="900.1" fill="none"/><circle cx="458.9" cy="900.8" fill="none"/><circle cx="459.0" cy="899.2" fill="none"/><circle cx="459.0" cy="898.5" fill="none"/><circle cx="459.1" cy="900.0" fill="none"/><circle cx="459.2" cy="897.2" fill="none"/><circle cx="459.3" cy="899.2" fill="none"/><circle cx="459.4" cy="898.0" fill="none"/><circle cx="459.4" cy="898.5" fill="none"/><circle cx="459.5" cy="898.8" fill="none"/><circle cx="459.6" cy="900.2" fill="none"/><circle cx="459.7" cy="896.9" fill="none"/><circle cx="459.8" cy="895.9"/><circle cx="459.8" cy="899.5" fill="none"/><circle cx="459.9" cy="900.4" fill="none"/><circle cx="460.0" cy="899.0" fill="none"/><circle cx="460.1" cy="899.3" fill="none"/><circle cx="460.2" cy="898.7" fill="none"/><circle cx="460.3" cy="897.7" fill="none"/><circle cx="460.3" cy="898.1" fill="none"/><circle cx="460.4" cy="899.8" fill="none"/><circle cx="460.5" cy="895.5"/><circle cx="460.6" cy="892.6"/><circle cx="460.7" cy="892.0"/><circle cx="460.7" cy="895.9"/><circle cx="460.8" cy="895.6"/><circle cx="460.9" cy="899.7" fill="none"/><circle cx="461.0" cy="898.7" fill="none"/><circle cx="461.1" cy="900.1" fill="none"/><circle cx="461.1" cy="898.2" fill="none"/><circle cx="461.2" cy="899.8" fill="none"/><circle cx="461.3" cy="900.8" fill="none"/><circle cx="461.4" cy="901.2" fill="none"/><circle cx="461.5" cy="900.9" fill="none"/><circle cx="461.5" cy="902.0" fill="none"/><circle cx="461.6" cy="900.5" fill="none"/><circle cx="461.7" cy="899.7" fill="none"/><circle cx="461.8" cy="893.4"/><circle cx="461.9" cy="896.4"/><circle cx="461.9" cy="899.7" fill="none"/><circle cx="462.0" cy="897.4" fill="none"/><circle cx="462.1" cy="898.6" fill="none"/><circle cx="462.2" cy="898.7" fill="none"/><circle cx="462.3" cy="898.6" fill="none"/><circle cx="462.3" cy="897.4" fill="none"/><circle cx="462.4" cy="897.6" fill="none"/><circle cx="462.5" cy="896.7"/><circle cx="462.6" cy="898.9" fill="none"/><circle cx="462.7" cy="898.5" fill="none"/><circle cx="462.7" cy="899.4" fill="none"/><circle cx="462.8" cy="898.3" fill="none"/><circle cx="462.9" cy="897.5" fill="none"/><circle cx="463.0" cy="894.1"/><circle cx="463.1" cy="898.8" fill="none"/><circle cx="463.1" cy="897.7" fill="none"/><circle cx="463.2" cy="898.8" fill="none"/><circle cx="463.3" cy="897.9" fill="none"/><circle cx="463.4" cy="899.8" fill="none"/><circle cx="463.5" cy="898.0" fill="none"/><circle cx="463.5" cy="897.9" fill="none"/><circle cx="463.6" cy="898.0" fill="none"/><circle cx="463.7" cy="892.2"/><circle cx="463.8" cy="890.9"/><circle cx="463.9" cy="894.3"/><circle cx="463.9" cy="892.2"/><circle cx="464.0" cy="896.1"/><circle cx="464.1" cy="896.2"/><circle cx="464.2" cy="895.5"/><circle cx="464.3" cy="887.0"/><circle cx="464.4" cy="876.5"/><circle cx="464.4" cy="883.6"/><circle cx="464.5" cy="886.6"/><circle cx="464.6" cy="897.2" fill="none"/><circle cx="464.7" cy="898.3" fill="none"/><circle cx="464.8" cy="900.1" fill="none"/><circle cx="464.8" cy="896.1"/><circle cx="464.9" cy="896.7"/><circle cx="465.0" cy="899.1" fill="none"/><circle cx="465.1" cy="898.3" fill="none"/><circle cx="465.2" cy="894.2"/><circle cx="465.2" cy="895.2"/><circle cx="465.3" cy="897.0"/><circle cx="465.4" cy="894.0"/><circle cx="465.5" cy="894.3"/><circle cx="465.6" cy="896.4"/><circle cx="465.6" cy="899.8" fill="none"/><circle cx="465.7" cy="899.6" fill="none"/><circle cx="465.8" cy="899.5" fill="none"/><circle cx="465.9" cy="897.5" fill="none"/><circle cx="466.0" cy="898.2" fill="none"/><circle cx="466.0" cy="898.6" fill="none"/><circle cx="466.1" cy="897.7" fill="none"/><circle cx="466.2" cy="895.8"/><circle cx="466.3" cy="888.0"/><circle cx="466.4" cy="896.8"/><circle cx="466.4" cy="898.9" fill="none"/><circle cx="466.5" cy="893.7"/><circle cx="466.6" cy="895.7"/><circle cx="466.7" cy="898.5" fill="none"/><circle cx="466.8" cy="897.7" fill="none"/><circle cx="466.8" cy="893.0"/><circle cx="466.9" cy="893.9"/><circle cx="467.0" cy="895.1"/><circle cx="467.1" cy="895.2"/><circle cx="467.2" cy="897.4" fill="none"/><circle cx="467.2" cy="899.6" fill="none"/><circle cx="467.3" cy="893.9"/><circle cx="467.4" cy="897.2" fill="none"/><circle cx="467.5" cy="897.6" fill="none"/><circle cx="467.6" cy="893.5"/><circle cx="467.6" cy="898.3" fill="none"/><circle cx="467.7" cy="899.7" fill="none"/><circle cx="467.8" cy="897.5" fill="none"/><circle cx="467.9" cy="897.9" fill="none"/><circle cx="468.0" cy="897.4" fill="none"/><circle cx="468.1" cy="897.2"/><circle cx="468.1" cy="888.9"/><circle cx="468.2" cy="895.5"/><circle cx="468.3" cy="898.5" fill="none"/><circle cx="468.4" cy="896.7"/><circle cx="468.5" cy="893.8"/><circle cx="468.5" cy="896.4"/><circle cx="468.6" cy="897.9" fill="none"/><circle cx="468.7" cy="901.0" fill="none"/><circle cx="468.8" cy="901.3" fill="none"/><circle cx="468.9" cy="900.9" fill="none"/><circle cx="468.9" cy="900.3" fill="none"/><circle cx="469.0" cy="900.1" fill="none"/><circle cx="469.1" cy="899.4" fill="none"/><circle cx="469.2" cy="898.5" fill="none"/><circle cx="469.3" cy="893.3"/><circle cx="469.3" cy="896.3"/><circle cx="469.4" cy="893.8"/><circle cx="469.5" cy="898.3" fill="none"/><circle cx="469.6" cy="898.7" fill="none"/><circle cx="469.7" cy="899.5" fill="none"/><circle cx="469.7" cy="900.1" fill="none"/><circle cx="469.8" cy="899.9" fill="none"/><circle cx="469.9" cy="898.2" fill="none"/><circle cx="470.0" cy="899.2" fill="none"/><circle cx="470.1" cy="901.2" fill="none"/><circle cx="470.1" cy="899.3" fill="none"/><circle cx="470.2" cy="894.0"/><circle cx="470.3" cy="893.6"/><circle cx="470.4" cy="895.5"/><circle cx="470.5" cy="897.1"/><circle cx="470.5" cy="896.2"/><circle cx="470.6" cy="887.9"/><circle cx="470.7" cy="889.1"/><circle cx="470.8" cy="895.7"/><circle cx="470.9" cy="894.4"/><circle cx="470.9" cy="898.2" fill="none"/><circle cx="471.0" cy="895.0"/><circle cx="471.1" cy="896.5"/><circle cx="471.2" cy="895.1"/><circle cx="471.3" cy="897.0"/><circle cx="471.3" cy="900.9" fill="none"/><circle cx="471.4" cy="900.0" fill="none"/><circle cx="471.5" cy="900.4" fill="none"/><circle cx="471.6" cy="899.8" fill="none"/><circle cx="471.7" cy="896.9"/><circle cx="471.7" cy="899.9" fill="none"/><circle cx="471.8" cy="900.5" fill="none"/><circle cx="471.9" cy="901.2" fill="none"/><circle cx="472.0" cy="900.8" fill="none"/><circle cx="472.1" cy="899.9" fill="none"/><circle cx="472.2" cy="899.5" fill="none"/><circle cx="472.2" cy="898.6" fill="none"/><circle cx="472.3" cy="896.6"/><circle cx="472.4" cy="893.6"/><circle cx="472.5" cy="900.2" fill="none"/><circle cx="472.6" cy="901.3" fill="none"/><circle cx="472.6" cy="900.7" fill="none"/><circle cx="472.7" cy="901.1" fill="none"/><circle cx="472.8" cy="899.7" fill="none"/><circle cx="472.9" cy="896.9"/><circle cx="473.0" cy="899.3" fill="none"/><circle cx="473.0" cy="899.2" fill="none"/><circle cx="473.1" cy="899.4" fill="none"/><circle cx="473.2" cy="897.1"/><circle cx="473.3" cy="898.8" fill="none"/><circle cx="473.4" cy="899.1" fill="none"/><circle cx="473.4" cy="897.5"/><circle cx="473.5" cy="898.2" fill="none"/><circle cx="473.6" cy="899.6" fill="none"/><circle cx="473.7" cy="895.9"/><circle cx="473.8" cy="899.0" fill="none"/><circle cx="473.8" cy="900.0" fill="none"/><circle cx="473.9" cy="895.2"/><circle cx="474.0" cy="896.7"/><circle cx="474.1" cy="894.6"/><circle cx="474.2" cy="898.6" fill="none"/><circle cx="474.2" cy="901.3" fill="none"/><circle cx="474.3" cy="899.7" fill="none"/><circle cx="474.4" cy="899.7" fill="none"/><circle cx="474.5" cy="900.9" fill="none"/><circle cx="474.6" cy="900.1" fill="none"/><circle cx="474.6" cy="900.1" fill="none"/><circle cx="474.7" cy="899.8" fill="none"/><circle cx="474.8" cy="898.1" fill="none"/><circle cx="474.9" cy="899.7" fill="none"/><circle cx="475.0" cy="898.0" fill="none"/><circle cx="475.0" cy="899.1" fill="none"/><circle cx="475.1" cy="897.7"/><circle cx="475.2" cy="895.0"/><circle cx="475.3" cy="889.6"/><circle cx="475.4" cy="887.5"/><circle cx="475.4" cy="896.8"/><circle cx="475.5" cy="899.8" fill="none"/><circle cx="475.6" cy="897.4"/><circle cx="475.7" cy="899.2" fill="none"/><circle cx="475.8" cy="900.0" fill="none"/><circle cx="475.9" cy="900.5" fill="none"/><circle cx="475.9" cy="894.5"/><circle cx="476.0" cy="899.6" fill="none"/><circle cx="476.1" cy="899.5" fill="none"/><circle cx="476.2" cy="899.2" fill="none"/><circle cx="476.3" cy="898.2" fill="none"/><circle cx="476.3" cy="899.2" fill="none"/><circle cx="476.4" cy="899.5" fill="none"/><circle cx="476.5" cy="899.0" fill="none"/><circle cx="476.6" cy="898.6" fill="none"/><circle cx="476.7" cy="899.2" fill="none"/><circle cx="476.7" cy="899.0" fill="none"/><circle cx="476.8" cy="898.1" fill="none"/><circle cx="476.9" cy="900.2" fill="none"/><circle cx="477.0" cy="901.0" fill="none"/><circle cx="477.1" cy="898.4" fill="none"/><circle cx="477.1" cy="898.3" fill="none"/><circle cx="477.2" cy="895.2"/><circle cx="477.3" cy="898.4" fill="none"/><circle cx="477.4" cy="896.9"/><circle cx="477.5" cy="899.5" fill="none"/><circle cx="477.5" cy="897.9"/><circle cx="477.6" cy="898.0"/><circle cx="477.7" cy="895.4"/><circle cx="477.8" cy="898.8" fill="none"/><circle cx="477.9" cy="897.0"/><circle cx="477.9" cy="898.9" fill="none"/><circle cx="478.0" cy="900.2" fill="none"/><circle cx="478.1" cy="899.1" fill="none"/><circle cx="478.2" cy="900.6" fill="none"/><circle cx="478.3" cy="899.6" fill="none"/><circle cx="478.3" cy="899.7" fill="none"/><circle cx="478.4" cy="898.7" fill="none"/><circle cx="478.5" cy="898.6" fill="none"/><circle cx="478.6" cy="898.6" fill="none"/><circle cx="478.7" cy="899.3" fill="none"/><circle cx="478.7" cy="900.1" fill="none"/><circle cx="478.8" cy="900.9" fill="none"/><circle cx="478.9" cy="899.6" fill="none"/><circle cx="479.0" cy="899.9" fill="none"/><circle cx="479.1" cy="896.0"/><circle cx="479.1" cy="893.8"/><circle cx="479.2" cy="897.2"/><circle cx="479.3" cy="896.8"/><circle cx="479.4" cy="894.0"/><circle cx="479.5" cy="898.1"/><circle cx="479.5" cy="901.0" fill="none"/><circle cx="479.6" cy="899.4" fill="none"/><circle cx="479.7" cy="900.3" fill="none"/><circle cx="479.8" cy="901.6" fill="none"/><circle cx="479.9" cy="901.0" fill="none"/><circle cx="480.0" cy="900.9" fill="none"/><circle cx="480.0" cy="899.7" fill="none"/><circle cx="480.1" cy="896.7"/><circle cx="480.2" cy="891.6"/><circle cx="480.3" cy="892.1"/><circle cx="480.4" cy="892.2"/><circle cx="480.4" cy="898.1"/><circle cx="480.5" cy="895.1"/><circle cx="480.6" cy="894.4"/><circle cx="480.7" cy="898.2"/><circle cx="480.8" cy="899.1" fill="none"/><circle cx="480.8" cy="900.6" fill="none"/><circle cx="480.9" cy="900.4" fill="none"/><circle cx="481.0" cy="900.6" fill="none"/><circle cx="481.1" cy="900.2" fill="none"/><circle cx="481.2" cy="901.6" fill="none"/><circle cx="481.2" cy="900.0" fill="none"/><circle cx="481.3" cy="899.9" fill="none"/><circle cx="481.4" cy="900.5" fill="none"/><circle cx="481.5" cy="900.4" fill="none"/><circle cx="481.6" cy="901.1" fill="none"/><circle cx="481.6" cy="900.1" fill="none"/><circle cx="481.7" cy="900.1" fill="none"/><circle cx="481.8" cy="900.8" fill="none"/><circle cx="481.9" cy="900.3" fill="none"/><circle cx="482.0" cy="900.7" fill="none"/><circle cx="482.0" cy="900.5" fill="none"/><circle cx="482.1" cy="900.8" fill="none"/><circle cx="482.2" cy="898.3"/><circle cx="482.3" cy="897.5"/><circle cx="482.4" cy="897.5"/><circle cx="482.4" cy="896.9"/><circle cx="482.5" cy="895.6"/><circle cx="482.6" cy="890.4"/><circle cx="482.7" cy="894.2"/><circle cx="482.8" cy="894.1"/><circle cx="482.8" cy="894.4"/><circle cx="482.5" cy="889.8"/><circle cx="483.0" cy="893.7"/><circle cx="483.1" cy="897.8"/><circle cx="483.2" cy="897.8"/><circle cx="483.2" cy="899.6" fill="none"/><circle cx="483.3" cy="900.3" fill="none"/><circle cx="483.4" cy="900.4" fill="none"/><circle cx="483.5" cy="901.0" fill="none"/><circle cx="483.6" cy="898.8" fill="none"/><circle cx="483.7" cy="899.7" fill="none"/><circle cx="483.7" cy="897.9"/><circle cx="483.8" cy="897.6"/><circle cx="483.9" cy="899.1" fill="none"/><circle cx="484.0" cy="897.3"/><circle cx="484.1" cy="901.7" fill="none"/><circle cx="484.1" cy="901.8" fill="none"/><circle cx="484.2" cy="899.5" fill="none"/><circle cx="484.3" cy="899.4" fill="none"/><circle cx="484.4" cy="900.0" fill="none"/><circle cx="484.5" cy="898.7"/><circle cx="484.5" cy="900.6" fill="none"/><circle cx="484.6" cy="901.7" fill="none"/><circle cx="484.7" cy="901.7" fill="none"/><circle cx="484.8" cy="902.1" fill="none"/><circle cx="484.9" cy="901.9" fill="none"/><circle cx="484.9" cy="901.7" fill="none"/><circle cx="485.0" cy="901.4" fill="none"/><circle cx="485.1" cy="901.4" fill="none"/><circle cx="485.2" cy="902.0" fill="none"/><circle cx="485.3" cy="901.7" fill="none"/><circle cx="485.3" cy="902.3" fill="none"/><circle cx="485.4" cy="902.1" fill="none"/><circle cx="485.5" cy="900.3" fill="none"/><circle cx="485.6" cy="899.5" fill="none"/><circle cx="485.7" cy="900.9" fill="none"/><circle cx="485.7" cy="900.3" fill="none"/><circle cx="485.8" cy="900.3" fill="none"/><circle cx="485.9" cy="900.7" fill="none"/><circle cx="486.5" cy="891.4"/><circle cx="486.1" cy="901.0" fill="none"/><circle cx="486.1" cy="900.5" fill="none"/><circle cx="486.2" cy="899.1" fill="none"/><circle cx="486.3" cy="898.5"/><circle cx="486.4" cy="893.5"/><circle cx="486.5" cy="895.9"/><circle cx="486.5" cy="901.8" fill="none"/><circle cx="486.6" cy="902.0" fill="none"/><circle cx="486.7" cy="901.4" fill="none"/><circle cx="486.8" cy="901.8" fill="none"/><circle cx="486.9" cy="900.2" fill="none"/><circle cx="486.9" cy="901.6" fill="none"/><circle cx="487.0" cy="901.7" fill="none"/><circle cx="487.1" cy="901.7" fill="none"/><circle cx="487.2" cy="901.8" fill="none"/><circle cx="487.3" cy="900.1" fill="none"/><circle cx="487.4" cy="900.7" fill="none"/><circle cx="487.4" cy="899.9" fill="none"/><circle cx="487.5" cy="900.7" fill="none"/><circle cx="487.6" cy="898.6"/><circle cx="487.7" cy="897.1"/><circle cx="487.8" cy="891.1"/><circle cx="487.8" cy="897.8"/><circle cx="487.9" cy="898.6"/><circle cx="488.0" cy="898.0"/><circle cx="488.1" cy="899.0" fill="none"/><circle cx="488.2" cy="900.4" fill="none"/><circle cx="488.2" cy="901.7" fill="none"/><circle cx="488.3" cy="901.1" fill="none"/><circle cx="488.4" cy="900.6" fill="none"/><circle cx="488.5" cy="900.4" fill="none"/><circle cx="488.6" cy="900.3" fill="none"/><circle cx="488.6" cy="900.6" fill="none"/><circle cx="488.7" cy="900.9" fill="none"/><circle cx="488.8" cy="902.3" fill="none"/><circle cx="488.9" cy="901.5" fill="none"/><circle cx="489.0" cy="901.2" fill="none"/><circle cx="489.0" cy="900.7" fill="none"/><circle cx="489.1" cy="901.4" fill="none"/><circle cx="489.2" cy="901.7" fill="none"/><circle cx="489.3" cy="901.7" fill="none"/><circle cx="489.4" cy="901.3" fill="none"/><circle cx="489.4" cy="901.4" fill="none"/><circle cx="489.5" cy="900.6" fill="none"/><circle cx="489.6" cy="900.0" fill="none"/><circle cx="489.7" cy="899.5" fill="none"/><circle cx="489.8" cy="898.9"/><circle cx="489.8" cy="899.3" fill="none"/><circle cx="489.9" cy="900.4" fill="none"/><circle cx="490.0" cy="901.1" fill="none"/><circle cx="490.1" cy="901.9" fill="none"/><circle cx="490.2" cy="902.4" fill="none"/><circle cx="490.2" cy="902.3" fill="none"/><circle cx="490.3" cy="901.3" fill="none"/><circle cx="490.4" cy="901.3" fill="none"/><circle cx="490.5" cy="901.3" fill="none"/><circle cx="490.6" cy="901.0" fill="none"/><circle cx="490.6" cy="901.1" fill="none"/><circle cx="490.7" cy="901.8" fill="none"/><circle cx="490.8" cy="902.0" fill="none"/><circle cx="490.9" cy="900.3" fill="none"/><circle cx="491.0" cy="900.6" fill="none"/><circle cx="491.0" cy="898.8"/><circle cx="491.1" cy="897.7"/><circle cx="491.2" cy="899.4" fill="none"/><circle cx="491.3" cy="896.3"/><circle cx="491.4" cy="896.5"/><circle cx="491.5" cy="900.8" fill="none"/><circle cx="491.5" cy="901.2" fill="none"/><circle cx="491.6" cy="900.4" fill="none"/><circle cx="491.7" cy="901.7" fill="none"/><circle cx="491.8" cy="901.3" fill="none"/><circle cx="491.9" cy="900.0" fill="none"/><circle cx="491.9" cy="900.4" fill="none"/><circle cx="492.0" cy="900.0" fill="none"/><circle cx="492.1" cy="900.2" fill="none"/><circle cx="492.2" cy="899.5" fill="none"/><circle cx="492.3" cy="898.9"/><circle cx="492.3" cy="899.8" fill="none"/><circle cx="492.4" cy="901.9" fill="none"/><circle cx="492.5" cy="901.9" fill="none"/><circle cx="492.6" cy="901.8" fill="none"/><circle cx="492.7" cy="900.5" fill="none"/><circle cx="492.7" cy="900.4" fill="none"/><circle cx="492.8" cy="901.9" fill="none"/><circle cx="492.9" cy="901.3" fill="none"/><circle cx="493.0" cy="901.6" fill="none"/><circle cx="493.1" cy="901.5" fill="none"/><circle cx="493.1" cy="900.6" fill="none"/><circle cx="493.2" cy="899.6" fill="none"/><circle cx="493.3" cy="892.2"/><circle cx="493.4" cy="890.8"/><circle cx="493.5" cy="895.1"/><circle cx="493.5" cy="894.5"/><circle cx="493.6" cy="896.0"/><circle cx="493.7" cy="899.7" fill="none"/><circle cx="493.8" cy="900.1" fill="none"/><circle cx="493.9" cy="898.4"/><circle cx="493.9" cy="897.1"/><circle cx="494.0" cy="897.0"/><circle cx="494.1" cy="893.8"/><circle cx="494.2" cy="894.9"/><circle cx="494.3" cy="893.6"/><circle cx="494.3" cy="897.6"/><circle cx="494.4" cy="899.9" fill="none"/><circle cx="494.5" cy="899.4" fill="none"/><circle cx="494.6" cy="898.0"/><circle cx="494.7" cy="897.6"/><circle cx="494.7" cy="897.2"/><circle cx="494.8" cy="893.6"/><circle cx="494.9" cy="896.1"/><circle cx="495.0" cy="895.6"/><circle cx="495.1" cy="898.0"/><circle cx="495.2" cy="898.8"/><circle cx="495.2" cy="897.7"/><circle cx="495.3" cy="892.7"/><circle cx="495.4" cy="896.8"/><circle cx="495.5" cy="899.8" fill="none"/><circle cx="495.6" cy="898.1"/><circle cx="495.6" cy="894.9"/><circle cx="495.7" cy="896.1"/><circle cx="495.8" cy="898.3"/><circle cx="495.9" cy="898.6"/><circle cx="496.0" cy="899.4"/><circle cx="496.0" cy="901.2" fill="none"/><circle cx="496.1" cy="900.7" fill="none"/><circle cx="496.2" cy="899.2"/><circle cx="496.3" cy="900.3" fill="none"/><circle cx="496.4" cy="897.8"/><circle cx="496.4" cy="901.1" fill="none"/><circle cx="496.5" cy="899.8" fill="none"/><circle cx="496.6" cy="901.4" fill="none"/><circle cx="496.7" cy="901.5" fill="none"/><circle cx="496.8" cy="901.8" fill="none"/><circle cx="496.8" cy="902.0" fill="none"/><circle cx="496.9" cy="899.5"/><circle cx="497.0" cy="899.8" fill="none"/><circle cx="497.1" cy="896.7"/><circle cx="497.2" cy="891.0"/><circle cx="497.2" cy="893.3"/><circle cx="497.3" cy="897.2"/><circle cx="497.4" cy="899.0"/><circle cx="497.5" cy="900.6" fill="none"/><circle cx="497.6" cy="900.1" fill="none"/><circle cx="497.6" cy="898.1"/><circle cx="497.7" cy="900.1" fill="none"/><circle cx="497.8" cy="901.0" fill="none"/><circle cx="497.9" cy="900.9" fill="none"/><circle cx="498.0" cy="898.3"/><circle cx="498.0" cy="899.4"/><circle cx="498.1" cy="896.2"/><circle cx="498.2" cy="899.9" fill="none"/><circle cx="498.3" cy="899.4"/><circle cx="498.4" cy="896.4"/><circle cx="498.4" cy="899.5"/><circle cx="498.5" cy="900.4" fill="none"/><circle cx="498.6" cy="899.0"/><circle cx="498.7" cy="899.7" fill="none"/><circle cx="498.8" cy="899.1"/><circle cx="498.8" cy="898.4"/><circle cx="498.9" cy="896.5"/><circle cx="499.5" cy="892.1"/><circle cx="499.1" cy="898.2"/><circle cx="499.2" cy="898.8"/><circle cx="499.3" cy="897.0"/><circle cx="499.3" cy="896.4"/><circle cx="499.4" cy="896.1"/><circle cx="499.5" cy="899.1"/><circle cx="499.6" cy="898.3"/><circle cx="499.7" cy="900.3" fill="none"/><circle cx="499.7" cy="897.7"/><circle cx="499.8" cy="899.2"/><circle cx="499.9" cy="902.0" fill="none"/><circle cx="500.0" cy="902.6" fill="none"/><circle cx="500.1" cy="902.0" fill="none"/><circle cx="500.1" cy="900.1" fill="none"/><circle cx="500.2" cy="899.6"/><circle cx="500.3" cy="898.9"/><circle cx="500.4" cy="899.1"/><circle cx="500.5" cy="899.6"/><circle cx="500.5" cy="900.2" fill="none"/><circle cx="500.6" cy="901.7" fill="none"/><circle cx="500.7" cy="901.4" fill="none"/><circle cx="500.8" cy="900.6" fill="none"/><circle cx="500.9" cy="901.0" fill="none"/><circle cx="500.9" cy="900.5" fill="none"/><circle cx="501.0" cy="899.4"/><circle cx="501.1" cy="901.4" fill="none"/><circle cx="501.2" cy="901.0" fill="none"/><circle cx="501.3" cy="901.1" fill="none"/><circle cx="501.3" cy="899.5"/><circle cx="501.4" cy="898.9"/><circle cx="501.5" cy="898.6"/><circle cx="501.6" cy="901.3" fill="none"/><circle cx="501.7" cy="900.2" fill="none"/><circle cx="501.7" cy="901.1" fill="none"/><circle cx="501.8" cy="901.6" fill="none"/><circle cx="501.9" cy="901.5" fill="none"/><circle cx="502.0" cy="900.8" fill="none"/><circle cx="502.1" cy="901.2" fill="none"/><circle cx="502.1" cy="898.1"/><circle cx="502.2" cy="894.2"/><circle cx="502.3" cy="898.2"/><circle cx="502.4" cy="898.8"/><circle cx="502.5" cy="900.5" fill="none"/><circle cx="502.5" cy="901.6" fill="none"/><circle cx="502.6" cy="901.9" fill="none"/><circle cx="502.7" cy="900.9" fill="none"/><circle cx="502.8" cy="900.9" fill="none"/><circle cx="502.9" cy="901.4" fill="none"/><circle cx="503.0" cy="901.6" fill="none"/><circle cx="503.0" cy="902.0" fill="none"/><circle cx="503.1" cy="901.8" fill="none"/><circle cx="503.2" cy="901.1" fill="none"/><circle cx="503.3" cy="898.8"/><circle cx="503.4" cy="898.6"/><circle cx="503.4" cy="899.8" fill="none"/><circle cx="503.5" cy="900.8" fill="none"/><circle cx="503.6" cy="895.6"/><circle cx="503.7" cy="898.4"/><circle cx="503.8" cy="899.2"/><circle cx="503.8" cy="901.4" fill="none"/><circle cx="503.9" cy="901.4" fill="none"/><circle cx="504.0" cy="901.5" fill="none"/><circle cx="504.1" cy="901.1" fill="none"/><circle cx="504.2" cy="899.4"/><circle cx="504.2" cy="898.6"/><circle cx="504.3" cy="900.4" fill="none"/><circle cx="504.4" cy="901.7" fill="none"/><circle cx="504.5" cy="901.5" fill="none"/><circle cx="504.6" cy="900.8" fill="none"/><circle cx="504.6" cy="901.3" fill="none"/><circle cx="504.7" cy="901.4" fill="none"/><circle cx="504.8" cy="900.9" fill="none"/><circle cx="504.9" cy="901.5" fill="none"/><circle cx="505.0" cy="900.7" fill="none"/><circle cx="505.0" cy="901.3" fill="none"/><circle cx="505.1" cy="898.7"/><circle cx="505.2" cy="899.4"/><circle cx="505.3" cy="900.4" fill="none"/><circle cx="505.4" cy="900.7" fill="none"/><circle cx="505.4" cy="901.5" fill="none"/><circle cx="505.5" cy="901.1" fill="none"/><circle cx="505.6" cy="901.8" fill="none"/><circle cx="505.7" cy="900.8" fill="none"/><circle cx="505.8" cy="900.8" fill="none"/><circle cx="505.8" cy="901.8" fill="none"/><circle cx="505.9" cy="901.0" fill="none"/><circle cx="506.0" cy="900.5" fill="none"/><circle cx="506.1" cy="901.6" fill="none"/><circle cx="506.2" cy="900.9" fill="none"/><circle cx="506.2" cy="901.0" fill="none"/><circle cx="506.3" cy="900.6" fill="none"/><circle cx="506.4" cy="901.7" fill="none"/><circle cx="506.5" cy="900.3" fill="none"/><circle cx="506.6" cy="901.0" fill="none"/><circle cx="506.7" cy="900.5" fill="none"/><circle cx="506.7" cy="898.3"/><circle cx="506.8" cy="899.2"/><circle cx="506.9" cy="898.5"/><circle cx="507.0" cy="896.4"/><circle cx="507.1" cy="899.7"/><circle cx="507.1" cy="900.7" fill="none"/><circle cx="507.2" cy="900.3" fill="none"/><circle cx="507.3" cy="899.1"/><circle cx="507.4" cy="900.3" fill="none"/><circle cx="507.5" cy="898.1"/><circle cx="507.5" cy="896.8"/><circle cx="507.6" cy="898.3"/><circle cx="507.7" cy="899.9" fill="none"/><circle cx="507.8" cy="896.7"/><circle cx="507.9" cy="899.4"/><circle cx="507.9" cy="898.5"/><circle cx="508.0" cy="901.6" fill="none"/><circle cx="508.1" cy="901.2" fill="none"/><circle cx="508.2" cy="900.9" fill="none"/><circle cx="508.3" cy="900.9" fill="none"/><circle cx="508.3" cy="899.6"/><circle cx="508.4" cy="899.0"/><circle cx="508.5" cy="900.9" fill="none"/><circle cx="508.6" cy="899.3"/><circle cx="508.7" cy="899.7"/><circle cx="508.7" cy="897.0"/><circle cx="508.8" cy="898.9"/><circle cx="508.9" cy="899.7"/><circle cx="509.0" cy="899.1"/><circle cx="509.1" cy="900.7" fill="none"/><circle cx="509.1" cy="900.1" fill="none"/><circle cx="509.2" cy="900.4" fill="none"/><circle cx="509.3" cy="901.3" fill="none"/><circle cx="509.4" cy="900.2" fill="none"/><circle cx="509.5" cy="899.4"/><circle cx="509.5" cy="901.0" fill="none"/><circle cx="509.6" cy="899.9" fill="none"/><circle cx="509.7" cy="897.9"/><circle cx="509.8" cy="897.4"/><circle cx="509.9" cy="899.9" fill="none"/><circle cx="509.9" cy="900.4" fill="none"/><circle cx="510.5" cy="892.9"/><circle cx="510.1" cy="899.9" fill="none"/><circle cx="510.2" cy="901.5" fill="none"/><circle cx="510.3" cy="901.0" fill="none"/><circle cx="510.3" cy="900.3" fill="none"/><circle cx="510.4" cy="901.9" fill="none"/><circle cx="510.5" cy="900.6" fill="none"/><circle cx="510.6" cy="900.0" fill="none"/><circle cx="510.7" cy="901.6" fill="none"/><circle cx="510.8" cy="901.6" fill="none"/><circle cx="510.8" cy="900.6" fill="none"/><circle cx="510.9" cy="901.4" fill="none"/><circle cx="511.0" cy="902.2" fill="none"/><circle cx="511.1" cy="902.2" fill="none"/><circle cx="511.2" cy="902.1" fill="none"/><circle cx="511.2" cy="901.6" fill="none"/><circle cx="511.3" cy="900.9" fill="none"/><circle cx="511.4" cy="901.4" fill="none"/><circle cx="511.5" cy="902.3" fill="none"/><circle cx="511.6" cy="902.2" fill="none"/><circle cx="511.6" cy="902.2" fill="none"/><circle cx="511.7" cy="901.8" fill="none"/><circle cx="511.8" cy="900.5" fill="none"/><circle cx="511.9" cy="901.5" fill="none"/><circle cx="512.0" cy="899.4"/><circle cx="512.0" cy="899.2"/><circle cx="512.1" cy="897.7"/><circle cx="512.2" cy="901.4" fill="none"/><circle cx="512.3" cy="901.3" fill="none"/><circle cx="512.4" cy="900.4" fill="none"/><circle cx="512.4" cy="901.0" fill="none"/><circle cx="512.5" cy="900.9" fill="none"/><circle cx="512.6" cy="901.2" fill="none"/><circle cx="512.7" cy="901.3" fill="none"/><circle cx="512.8" cy="901.5" fill="none"/><circle cx="512.8" cy="900.4" fill="none"/><circle cx="512.9" cy="901.1" fill="none"/><circle cx="513.0" cy="901.3" fill="none"/><circle cx="513.1" cy="899.7"/><circle cx="513.2" cy="900.0" fill="none"/><circle cx="513.2" cy="900.6" fill="none"/><circle cx="513.3" cy="895.9"/><circle cx="513.4" cy="901.1" fill="none"/><circle cx="513.5" cy="900.3" fill="none"/><circle cx="513.6" cy="900.2" fill="none"/><circle cx="513.6" cy="895.2"/><circle cx="513.7" cy="896.4"/><circle cx="513.8" cy="899.5"/><circle cx="513.9" cy="900.1" fill="none"/><circle cx="514.0" cy="901.1" fill="none"/><circle cx="514.0" cy="898.6"/><circle cx="514.1" cy="899.0"/><circle cx="514.2" cy="899.2"/><circle cx="514.3" cy="899.9" fill="none"/><circle cx="514.4" cy="899.2"/><circle cx="514.5" cy="900.7" fill="none"/><circle cx="514.5" cy="900.5" fill="none"/><circle cx="514.6" cy="900.9" fill="none"/><circle cx="514.7" cy="900.4" fill="none"/><circle cx="514.8" cy="900.6" fill="none"/><circle cx="514.9" cy="900.2" fill="none"/><circle cx="514.9" cy="898.2"/><circle cx="515.0" cy="898.9"/><circle cx="515.1" cy="898.3"/><circle cx="515.2" cy="899.7"/><circle cx="515.3" cy="900.7" fill="none"/><circle cx="515.3" cy="900.8" fill="none"/><circle cx="515.4" cy="901.0" fill="none"/><circle cx="515.5" cy="900.7" fill="none"/><circle cx="515.6" cy="900.9" fill="none"/><circle cx="515.7" cy="901.1" fill="none"/><circle cx="515.7" cy="901.7" fill="none"/><circle cx="515.8" cy="900.8" fill="none"/><circle cx="515.9" cy="901.3" fill="none"/><circle cx="516.0" cy="901.4" fill="none"/><circle cx="516.1" cy="900.0" fill="none"/><circle cx="516.1" cy="896.3"/><circle cx="516.2" cy="893.6"/><circle cx="516.3" cy="893.2"/><circle cx="516.4" cy="890.3"/><circle cx="516.5" cy="896.9"/><circle cx="516.5" cy="894.8"/><circle cx="516.6" cy="894.9"/><circle cx="516.7" cy="897.1"/><circle cx="516.8" cy="897.9"/><circle cx="516.9" cy="897.8"/><circle cx="516.9" cy="900.4" fill="none"/><circle cx="517.0" cy="899.3"/><circle cx="517.1" cy="898.9"/><circle cx="517.2" cy="899.3"/><circle cx="517.3" cy="901.0" fill="none"/><circle cx="517.3" cy="900.2" fill="none"/><circle cx="517.4" cy="901.0" fill="none"/><circle cx="517.5" cy="899.1"/><circle cx="517.6" cy="900.0" fill="none"/><circle cx="517.7" cy="899.9" fill="none"/><circle cx="517.7" cy="901.9" fill="none"/><circle cx="517.8" cy="901.1" fill="none"/><circle cx="517.9" cy="901.0" fill="none"/><circle cx="518.0" cy="899.7"/><circle cx="518.1" cy="897.6"/><circle cx="518.1" cy="900.1" fill="none"/><circle cx="518.2" cy="901.4" fill="none"/><circle cx="518.3" cy="901.6" fill="none"/><circle cx="518.4" cy="900.7" fill="none"/><circle cx="518.5" cy="900.6" fill="none"/><circle cx="518.6" cy="899.9" fill="none"/><circle cx="518.6" cy="900.6" fill="none"/><circle cx="518.7" cy="901.0" fill="none"/><circle cx="518.8" cy="901.5" fill="none"/><circle cx="518.9" cy="899.8" fill="none"/><circle cx="519.0" cy="898.2"/><circle cx="519.0" cy="897.8"/><circle cx="519.1" cy="892.1"/><circle cx="519.2" cy="888.9"/><circle cx="519.3" cy="896.6"/><circle cx="519.4" cy="895.0"/><circle cx="519.4" cy="895.3"/><circle cx="519.5" cy="894.7"/><circle cx="519.6" cy="898.9"/><circle cx="519.7" cy="898.2"/><circle cx="519.8" cy="898.9"/><circle cx="519.8" cy="895.9"/><circle cx="519.9" cy="897.0"/><circle cx="520.0" cy="897.4"/><circle cx="520.1" cy="895.3"/><circle cx="520.2" cy="898.4"/><circle cx="520.2" cy="895.8"/><circle cx="520.3" cy="891.0"/><circle cx="520.4" cy="894.0"/><circle cx="520.5" cy="897.1"/><circle cx="520.6" cy="898.6"/><circle cx="520.6" cy="899.6"/><circle cx="520.7" cy="899.1"/><circle cx="520.8" cy="900.0" fill="none"/><circle cx="520.9" cy="896.3"/><circle cx="521.0" cy="896.8"/><circle cx="521.0" cy="896.2"/><circle cx="521.1" cy="898.0"/><circle cx="521.2" cy="897.9"/><circle cx="521.3" cy="897.6"/><circle cx="521.4" cy="898.9"/><circle cx="521.4" cy="899.9" fill="none"/><circle cx="521.5" cy="901.4" fill="none"/><circle cx="521.6" cy="901.8" fill="none"/><circle cx="521.7" cy="901.4" fill="none"/><circle cx="521.8" cy="898.8"/><circle cx="521.8" cy="899.2"/><circle cx="521.9" cy="900.2" fill="none"/><circle cx="522.0" cy="899.3"/><circle cx="522.1" cy="898.6"/><circle cx="522.2" cy="898.9"/><circle cx="522.3" cy="899.0"/><circle cx="522.3" cy="901.3" fill="none"/><circle cx="522.4" cy="899.3"/><circle cx="522.5" cy="901.1" fill="none"/><circle cx="522.6" cy="901.8" fill="none"/><circle cx="522.7" cy="902.0" fill="none"/><circle cx="522.7" cy="902.2" fill="none"/><circle cx="522.8" cy="902.1" fill="none"/><circle cx="522.9" cy="901.9" fill="none"/><circle cx="523.0" cy="900.7" fill="none"/><circle cx="523.1" cy="901.6" fill="none"/><circle cx="523.1" cy="901.4" fill="none"/><circle cx="523.2" cy="901.3" fill="none"/><circle cx="523.3" cy="901.2" fill="none"/><circle cx="523.4" cy="901.0" fill="none"/><circle cx="523.5" cy="897.9"/><circle cx="523.5" cy="899.3"/><circle cx="523.6" cy="899.4"/><circle cx="523.7" cy="899.4"/><circle cx="523.8" cy="897.0"/><circle cx="523.9" cy="894.9"/><circle cx="523.9" cy="896.6"/><circle cx="524.0" cy="896.9"/><circle cx="524.1" cy="897.4"/><circle cx="524.2" cy="899.2"/><circle cx="524.3" cy="899.6"/><circle cx="524.3" cy="898.2"/><circle cx="524.4" cy="901.3" fill="none"/><circle cx="524.5" cy="901.4" fill="none"/><circle cx="524.6" cy="900.0" fill="none"/><circle cx="524.7" cy="899.9" fill="none"/><circle cx="524.7" cy="899.9" fill="none"/><circle cx="524.8" cy="899.7"/><circle cx="524.9" cy="897.4"/><circle cx="525.0" cy="896.4"/><circle cx="525.1" cy="899.6"/><circle cx="525.1" cy="897.8"/><circle cx="525.2" cy="899.3"/><circle cx="525.3" cy="900.4" fill="none"/><circle cx="525.4" cy="900.7" fill="none"/><circle cx="525.5" cy="901.6" fill="none"/><circle cx="525.5" cy="901.2" fill="none"/><circle cx="525.6" cy="901.2" fill="none"/><circle cx="525.7" cy="902.0" fill="none"/><circle cx="525.8" cy="901.4" fill="none"/><circle cx="525.9" cy="899.6"/><circle cx="525.9" cy="901.1" fill="none"/><circle cx="526.0" cy="901.7" fill="none"/><circle cx="526.1" cy="902.4" fill="none"/><circle cx="526.2" cy="901.4" fill="none"/><circle cx="526.3" cy="901.1" fill="none"/><circle cx="526.4" cy="901.6" fill="none"/><circle cx="526.4" cy="900.3" fill="none"/><circle cx="526.5" cy="900.0" fill="none"/><circle cx="526.6" cy="894.1"/><circle cx="526.7" cy="897.3"/><circle cx="526.8" cy="896.8"/><circle cx="526.8" cy="898.5"/><circle cx="526.9" cy="896.7"/><circle cx="527.0" cy="899.6"/><circle cx="527.1" cy="897.4"/><circle cx="527.2" cy="899.0"/><circle cx="527.2" cy="899.2"/><circle cx="527.3" cy="899.3"/><circle cx="527.4" cy="899.6"/><circle cx="527.5" cy="900.3" fill="none"/><circle cx="527.6" cy="900.9" fill="none"/><circle cx="527.6" cy="901.0" fill="none"/><circle cx="527.7" cy="900.4" fill="none"/><circle cx="527.8" cy="900.5" fill="none"/><circle cx="527.9" cy="899.3"/><circle cx="528.0" cy="899.6"/><circle cx="528.0" cy="898.0"/><circle cx="528.1" cy="899.6"/><circle cx="528.2" cy="897.9"/><circle cx="528.3" cy="901.4" fill="none"/><circle cx="528.4" cy="902.0" fill="none"/><circle cx="528.4" cy="901.6" fill="none"/><circle cx="528.5" cy="900.6" fill="none"/><circle cx="528.6" cy="898.4"/><circle cx="528.7" cy="899.3"/><circle cx="528.8" cy="897.4"/><circle cx="528.8" cy="898.6"/><circle cx="528.9" cy="900.7" fill="none"/><circle cx="529.0" cy="899.1"/><circle cx="529.1" cy="898.8"/><circle cx="529.2" cy="899.7"/><circle cx="529.2" cy="899.3"/><circle cx="529.3" cy="899.1"/><circle cx="529.4" cy="899.6"/><circle cx="529.5" cy="899.9" fill="none"/><circle cx="529.6" cy="900.8" fill="none"/><circle cx="529.6" cy="900.0" fill="none"/><circle cx="529.7" cy="901.2" fill="none"/><circle cx="529.8" cy="901.5" fill="none"/><circle cx="529.9" cy="899.7"/><circle cx="530.0" cy="900.2" fill="none"/><circle cx="530.1" cy="898.6"/><circle cx="530.1" cy="900.8" fill="none"/><circle cx="530.2" cy="902.0" fill="none"/><circle cx="530.3" cy="901.3" fill="none"/><circle cx="530.4" cy="901.2" fill="none"/><circle cx="530.5" cy="901.2" fill="none"/><circle cx="530.5" cy="901.8" fill="none"/><circle cx="530.6" cy="901.1" fill="none"/><circle cx="530.7" cy="902.1" fill="none"/><circle cx="530.8" cy="901.7" fill="none"/><circle cx="530.9" cy="900.0" fill="none"/><circle cx="530.9" cy="900.5" fill="none"/><circle cx="531.0" cy="899.8" fill="none"/><circle cx="531.1" cy="901.8" fill="none"/><circle cx="531.2" cy="902.0" fill="none"/><circle cx="531.3" cy="901.9" fill="none"/><circle cx="531.3" cy="901.1" fill="none"/><circle cx="531.4" cy="901.4" fill="none"/><circle cx="531.5" cy="901.0" fill="none"/><circle cx="531.6" cy="900.7" fill="none"/><circle cx="531.7" cy="901.2" fill="none"/><circle cx="531.7" cy="900.7" fill="none"/><circle cx="531.8" cy="901.6" fill="none"/><circle cx="531.9" cy="900.9" fill="none"/><circle cx="532.0" cy="899.2"/><circle cx="532.5" cy="882.5"/><circle cx="532.1" cy="901.0" fill="none"/><circle cx="532.2" cy="901.2" fill="none"/><circle cx="532.3" cy="900.9" fill="none"/><circle cx="532.4" cy="900.7" fill="none"/><circle cx="532.5" cy="900.6" fill="none"/><circle cx="532.5" cy="901.3" fill="none"/><circle cx="532.6" cy="900.9" fill="none"/><circle cx="532.7" cy="899.4"/><circle cx="532.8" cy="900.1" fill="none"/><circle cx="532.9" cy="897.5"/><circle cx="532.9" cy="896.3"/><circle cx="533.0" cy="895.3"/><circle cx="533.1" cy="896.2"/><circle cx="533.2" cy="898.2"/><circle cx="533.3" cy="896.4"/><circle cx="533.3" cy="898.3"/><circle cx="533.4" cy="899.8" fill="none"/><circle cx="533.5" cy="897.7"/><circle cx="533.6" cy="897.3"/><circle cx="533.7" cy="901.0" fill="none"/><circle cx="533.8" cy="899.5"/><circle cx="533.8" cy="899.4"/><circle cx="533.9" cy="900.1" fill="none"/><circle cx="534.0" cy="900.1" fill="none"/><circle cx="534.1" cy="900.1" fill="none"/><circle cx="534.2" cy="901.1" fill="none"/><circle cx="534.2" cy="899.8" fill="none"/><circle cx="534.3" cy="896.5"/><circle cx="534.4" cy="894.1"/><circle cx="534.5" cy="895.4"/><circle cx="534.6" cy="899.7"/><circle cx="534.6" cy="900.6" fill="none"/><circle cx="534.7" cy="901.8" fill="none"/><circle cx="534.8" cy="901.6" fill="none"/><circle cx="534.9" cy="901.3" fill="none"/><circle cx="535.0" cy="900.9" fill="none"/><circle cx="535.0" cy="901.8" fill="none"/><circle cx="535.1" cy="901.7" fill="none"/><circle cx="535.2" cy="902.2" fill="none"/><circle cx="535.3" cy="902.4" fill="none"/><circle cx="535.4" cy="902.1" fill="none"/><circle cx="535.4" cy="902.0" fill="none"/><circle cx="535.5" cy="900.7" fill="none"/><circle cx="535.6" cy="898.8"/><circle cx="535.7" cy="898.3"/><circle cx="535.8" cy="896.7"/><circle cx="535.8" cy="897.9"/><circle cx="535.9" cy="901.4" fill="none"/><circle cx="536.0" cy="901.7" fill="none"/><circle cx="536.1" cy="901.3" fill="none"/><circle cx="536.2" cy="898.7"/><circle cx="536.2" cy="900.2" fill="none"/><circle cx="536.3" cy="901.4" fill="none"/><circle cx="536.4" cy="902.4" fill="none"/><circle cx="536.5" cy="902.2" fill="none"/><circle cx="536.6" cy="901.9" fill="none"/><circle cx="536.6" cy="901.9" fill="none"/><circle cx="536.7" cy="901.5" fill="none"/><circle cx="536.8" cy="899.8" fill="none"/><circle cx="536.9" cy="900.8" fill="none"/><circle cx="537.0" cy="901.8" fill="none"/><circle cx="537.0" cy="900.5" fill="none"/><circle cx="537.1" cy="901.4" fill="none"/><circle cx="537.2" cy="901.0" fill="none"/><circle cx="537.3" cy="898.6"/><circle cx="537.4" cy="899.2"/><circle cx="537.4" cy="897.2"/><circle cx="537.5" cy="899.0"/><circle cx="537.6" cy="898.2"/><circle cx="537.7" cy="897.8"/><circle cx="537.8" cy="896.7"/><circle cx="537.9" cy="899.9" fill="none"/><circle cx="537.9" cy="898.9"/><circle cx="538.0" cy="900.6" fill="none"/><circle cx="538.1" cy="900.9" fill="none"/><circle cx="538.2" cy="901.5" fill="none"/><circle cx="538.3" cy="901.9" fill="none"/><circle cx="538.3" cy="902.1" fill="none"/><circle cx="538.4" cy="901.9" fill="none"/><circle cx="538.5" cy="900.2" fill="none"/><circle cx="538.6" cy="901.2" fill="none"/><circle cx="538.7" cy="899.3"/><circle cx="538.7" cy="900.7" fill="none"/><circle cx="538.8" cy="899.4"/><circle cx="538.9" cy="901.5" fill="none"/><circle cx="539.0" cy="900.8" fill="none"/><circle cx="539.1" cy="900.5" fill="none"/><circle cx="539.1" cy="898.6"/><circle cx="539.2" cy="901.5" fill="none"/><circle cx="539.3" cy="901.4" fill="none"/><circle cx="539.4" cy="902.1" fill="none"/><circle cx="539.5" cy="901.4" fill="none"/><circle cx="539.5" cy="902.2" fill="none"/><circle cx="539.6" cy="902.4" fill="none"/><circle cx="539.7" cy="901.9" fill="none"/><circle cx="539.8" cy="901.2" fill="none"/><circle cx="539.9" cy="900.9" fill="none"/><circle cx="539.9" cy="900.4" fill="none"/><circle cx="540.0" cy="901.1" fill="none"/><circle cx="540.1" cy="899.1"/><circle cx="540.5" cy="884.0"/><circle cx="540.3" cy="901.6" fill="none"/><circle cx="540.3" cy="901.7" fill="none"/><circle cx="540.4" cy="901.8" fill="none"/><circle cx="540.5" cy="900.6" fill="none"/><circle cx="540.6" cy="899.5"/><circle cx="540.7" cy="899.0"/><circle cx="540.7" cy="900.9" fill="none"/><circle cx="540.8" cy="900.0" fill="none"/><circle cx="540.9" cy="901.0" fill="none"/><circle cx="541.0" cy="901.1" fill="none"/><circle cx="541.1" cy="900.6" fill="none"/><circle cx="541.1" cy="901.8" fill="none"/><circle cx="541.2" cy="901.2" fill="none"/><circle cx="541.3" cy="901.3" fill="none"/><circle cx="541.4" cy="901.9" fill="none"/><circle cx="541.5" cy="900.7" fill="none"/><circle cx="541.6" cy="900.3" fill="none"/><circle cx="541.6" cy="900.0" fill="none"/><circle cx="541.7" cy="901.5" fill="none"/><circle cx="541.8" cy="900.6" fill="none"/><circle cx="541.9" cy="900.8" fill="none"/><circle cx="542.0" cy="901.8" fill="none"/><circle cx="542.0" cy="901.0" fill="none"/><circle cx="542.1" cy="900.6" fill="none"/><circle cx="542.2" cy="900.3" fill="none"/><circle cx="542.3" cy="899.5"/><circle cx="542.4" cy="900.7" fill="none"/><circle cx="542.4" cy="900.7" fill="none"/><circle cx="542.5" cy="900.4" fill="none"/><circle cx="542.6" cy="899.5"/><circle cx="542.7" cy="901.2" fill="none"/><circle cx="542.8" cy="901.9" fill="none"/><circle cx="542.8" cy="900.6" fill="none"/><circle cx="542.9" cy="900.9" fill="none"/><circle cx="543.0" cy="902.1" fill="none"/><circle cx="543.1" cy="901.3" fill="none"/><circle cx="543.2" cy="901.7" fill="none"/><circle cx="543.2" cy="901.7" fill="none"/><circle cx="543.3" cy="901.3" fill="none"/><circle cx="543.4" cy="901.7" fill="none"/><circle cx="543.5" cy="902.3" fill="none"/><circle cx="543.6" cy="902.3" fill="none"/><circle cx="543.6" cy="902.0" fill="none"/><circle cx="543.7" cy="902.3" fill="none"/><circle cx="543.5" cy="879.4"/><circle cx="543.9" cy="901.2" fill="none"/><circle cx="544.0" cy="900.7" fill="none"/><circle cx="544.0" cy="900.9" fill="none"/><circle cx="544.1" cy="901.4" fill="none"/><circle cx="544.2" cy="900.8" fill="none"/><circle cx="544.3" cy="900.4" fill="none"/><circle cx="544.4" cy="901.7" fill="none"/><circle cx="544.4" cy="902.0" fill="none"/><circle cx="544.5" cy="901.7" fill="none"/><circle cx="544.6" cy="901.1" fill="none"/><circle cx="544.7" cy="899.8"/><circle cx="544.8" cy="898.1"/><circle cx="544.8" cy="899.4"/><circle cx="544.9" cy="900.2" fill="none"/><circle cx="545.0" cy="899.8"/><circle cx="545.1" cy="901.4" fill="none"/><circle cx="545.2" cy="901.9" fill="none"/><circle cx="545.2" cy="900.9" fill="none"/><circle cx="545.3" cy="901.8" fill="none"/><circle cx="545.4" cy="901.4" fill="none"/><circle cx="545.5" cy="900.9" fill="none"/><circle cx="545.6" cy="901.9" fill="none"/><circle cx="545.7" cy="901.6" fill="none"/><circle cx="545.7" cy="900.9" fill="none"/><circle cx="545.8" cy="898.9"/><circle cx="545.9" cy="896.0"/><circle cx="546.0" cy="897.7"/><circle cx="546.1" cy="899.2"/><circle cx="546.1" cy="899.7"/><circle cx="546.2" cy="901.0" fill="none"/><circle cx="546.3" cy="901.5" fill="none"/><circle cx="546.4" cy="901.9" fill="none"/><circle cx="546.5" cy="899.6"/><circle cx="546.5" cy="899.9" fill="none"/><circle cx="546.6" cy="900.1" fill="none"/><circle cx="546.7" cy="897.4"/><circle cx="546.8" cy="899.9" fill="none"/><circle cx="546.9" cy="899.2"/><circle cx="546.9" cy="897.9"/><circle cx="547.0" cy="898.6"/><circle cx="547.1" cy="899.4"/><circle cx="547.2" cy="898.3"/><circle cx="547.3" cy="894.8"/><circle cx="547.3" cy="898.1"/><circle cx="547.4" cy="889.6"/><circle cx="547.5" cy="889.7"/><circle cx="547.6" cy="898.5"/><circle cx="547.7" cy="899.3"/><circle cx="547.7" cy="900.4" fill="none"/><circle cx="547.8" cy="898.5"/><circle cx="547.9" cy="893.0"/><circle cx="548.0" cy="894.1"/><circle cx="548.1" cy="897.3"/><circle cx="548.1" cy="899.6"/><circle cx="548.2" cy="898.0"/><circle cx="548.3" cy="900.2" fill="none"/><circle cx="548.4" cy="896.0"/><circle cx="548.5" cy="894.7"/><circle cx="548.5" cy="889.8"/><circle cx="548.6" cy="894.1"/><circle cx="548.7" cy="889.8"/><circle cx="548.8" cy="895.7"/><circle cx="548.9" cy="896.8"/><circle cx="548.9" cy="896.5"/><circle cx="549.0" cy="898.8"/><circle cx="549.1" cy="899.8"/><circle cx="549.2" cy="896.8"/><circle cx="549.3" cy="900.1" fill="none"/><circle cx="549.4" cy="896.2"/><circle cx="549.4" cy="898.8"/><circle cx="549.5" cy="900.3" fill="none"/><circle cx="549.6" cy="901.6" fill="none"/><circle cx="549.5" cy="887.5"/><circle cx="549.8" cy="902.3" fill="none"/><circle cx="549.8" cy="901.9" fill="none"/><circle cx="549.9" cy="901.3" fill="none"/><circle cx="550.0" cy="900.6" fill="none"/><circle cx="550.1" cy="900.5" fill="none"/><circle cx="550.2" cy="900.5" fill="none"/><circle cx="550.2" cy="898.3"/><circle cx="550.3" cy="899.0"/><circle cx="550.4" cy="899.3"/><circle cx="550.5" cy="899.9"/><circle cx="550.6" cy="900.9" fill="none"/><circle cx="550.6" cy="901.1" fill="none"/><circle cx="550.7" cy="901.3" fill="none"/><circle cx="550.8" cy="901.2" fill="none"/><circle cx="550.9" cy="894.2"/><circle cx="551.0" cy="892.3"/><circle cx="551.0" cy="898.6"/><circle cx="551.1" cy="901.0" fill="none"/><circle cx="551.2" cy="901.3" fill="none"/><circle cx="551.3" cy="901.1" fill="none"/><circle cx="551.4" cy="900.6" fill="none"/><circle cx="551.4" cy="900.4" fill="none"/><circle cx="551.5" cy="901.8" fill="none"/><circle cx="551.6" cy="902.3" fill="none"/><circle cx="551.7" cy="902.2" fill="none"/><circle cx="551.8" cy="902.2" fill="none"/><circle cx="551.8" cy="902.6" fill="none"/><circle cx="551.9" cy="902.6" fill="none"/><circle cx="552.0" cy="902.3" fill="none"/><circle cx="552.1" cy="902.4" fill="none"/><circle cx="552.2" cy="902.3" fill="none"/><circle cx="552.2" cy="901.8" fill="none"/><circle cx="552.3" cy="900.5" fill="none"/><circle cx="552.4" cy="901.4" fill="none"/><circle cx="552.5" cy="901.2" fill="none"/><circle cx="552.6" cy="901.1" fill="none"/><circle cx="552.6" cy="901.5" fill="none"/><circle cx="552.7" cy="901.8" fill="none"/><circle cx="552.8" cy="900.3" fill="none"/><circle cx="552.9" cy="901.1" fill="none"/><circle cx="553.0" cy="901.0" fill="none"/><circle cx="553.1" cy="900.8" fill="none"/><circle cx="553.1" cy="898.3"/><circle cx="553.2" cy="899.1"/><circle cx="553.3" cy="895.9"/><circle cx="553.4" cy="894.8"/><circle cx="553.5" cy="898.7"/><circle cx="553.5" cy="898.0"/><circle cx="553.6" cy="900.3" fill="none"/><circle cx="553.7" cy="900.5" fill="none"/><circle cx="553.8" cy="900.9" fill="none"/><circle cx="553.9" cy="899.0"/><circle cx="553.9" cy="900.7" fill="none"/><circle cx="554.0" cy="899.4"/><circle cx="554.1" cy="899.6"/><circle cx="554.2" cy="898.7"/><circle cx="554.3" cy="901.7" fill="none"/><circle cx="554.3" cy="901.6" fill="none"/><circle cx="554.4" cy="901.5" fill="none"/><circle cx="554.5" cy="898.0"/><circle cx="554.6" cy="893.9"/><circle cx="554.7" cy="897.2"/><circle cx="554.7" cy="898.5"/><circle cx="554.8" cy="901.4" fill="none"/><circle cx="554.9" cy="901.0" fill="none"/><circle cx="555.0" cy="901.6" fill="none"/><circle cx="555.1" cy="900.2" fill="none"/><circle cx="555.1" cy="901.5" fill="none"/><circle cx="555.2" cy="901.1" fill="none"/><circle cx="555.3" cy="901.1" fill="none"/><circle cx="555.4" cy="901.2" fill="none"/><circle cx="555.5" cy="901.4" fill="none"/><circle cx="555.5" cy="901.4" fill="none"/><circle cx="555.6" cy="902.1" fill="none"/><circle cx="555.7" cy="901.5" fill="none"/><circle cx="555.8" cy="900.0"/><circle cx="555.9" cy="901.2" fill="none"/><circle cx="555.9" cy="901.6" fill="none"/><circle cx="556.0" cy="902.1" fill="none"/><circle cx="556.1" cy="901.6" fill="none"/><circle cx="556.2" cy="901.3" fill="none"/><circle cx="556.3" cy="902.0" fill="none"/><circle cx="556.3" cy="902.4" fill="none"/><circle cx="556.4" cy="902.1" fill="none"/><circle cx="556.5" cy="901.2" fill="none"/><circle cx="556.6" cy="899.5"/><circle cx="556.7" cy="900.4" fill="none"/><circle cx="556.7" cy="900.9" fill="none"/><circle cx="556.8" cy="898.3"/><circle cx="556.9" cy="896.1"/><circle cx="557.0" cy="899.6"/><circle cx="557.1" cy="901.0" fill="none"/><circle cx="557.2" cy="902.0" fill="none"/><circle cx="557.2" cy="901.5" fill="none"/><circle cx="557.3" cy="901.5" fill="none"/><circle cx="557.4" cy="901.9" fill="none"/><circle cx="557.5" cy="901.8" fill="none"/><circle cx="557.6" cy="902.2" fill="none"/><circle cx="557.6" cy="901.2" fill="none"/><circle cx="557.7" cy="901.1" fill="none"/><circle cx="557.8" cy="900.3" fill="none"/><circle cx="557.9" cy="901.7" fill="none"/><circle cx="558.0" cy="902.0" fill="none"/><circle cx="558.0" cy="901.3" fill="none"/><circle cx="558.1" cy="900.6" fill="none"/><circle cx="558.2" cy="900.8" fill="none"/><circle cx="558.3" cy="901.6" fill="none"/><circle cx="558.4" cy="901.8" fill="none"/><circle cx="558.4" cy="901.2" fill="none"/><circle cx="558.5" cy="901.1" fill="none"/><circle cx="558.6" cy="901.3" fill="none"/><circle cx="558.7" cy="900.5" fill="none"/><circle cx="558.8" cy="901.7" fill="none"/><circle cx="558.8" cy="901.9" fill="none"/><circle cx="558.9" cy="901.7" fill="none"/><circle cx="559.0" cy="900.0"/><circle cx="559.1" cy="901.0" fill="none"/><circle cx="559.2" cy="899.5"/><circle cx="559.2" cy="900.5" fill="none"/><circle cx="559.3" cy="899.5"/><circle cx="559.4" cy="898.7"/><circle cx="559.5" cy="896.8"/><circle cx="559.6" cy="897.0"/><circle cx="559.6" cy="897.4"/><circle cx="559.7" cy="899.0"/><circle cx="559.8" cy="897.4"/><circle cx="559.9" cy="896.1"/><circle cx="560.0" cy="898.8"/><circle cx="560.0" cy="901.4" fill="none"/><circle cx="560.1" cy="900.1"/><circle cx="560.2" cy="899.9"/><circle cx="560.3" cy="900.7" fill="none"/><circle cx="560.4" cy="901.3" fill="none"/><circle cx="560.4" cy="901.1" fill="none"/><circle cx="560.5" cy="901.4" fill="none"/><circle cx="560.6" cy="900.7" fill="none"/><circle cx="560.7" cy="901.0" fill="none"/><circle cx="560.8" cy="900.6" fill="none"/><circle cx="560.9" cy="902.3" fill="none"/><circle cx="560.9" cy="902.3" fill="none"/><circle cx="561.0" cy="902.5" fill="none"/><circle cx="561.1" cy="902.4" fill="none"/><circle cx="561.2" cy="902.0" fill="none"/><circle cx="561.3" cy="901.8" fill="none"/><circle cx="561.3" cy="901.2" fill="none"/><circle cx="561.4" cy="901.5" fill="none"/><circle cx="561.5" cy="902.1" fill="none"/><circle cx="561.6" cy="901.7" fill="none"/><circle cx="561.7" cy="901.8" fill="none"/><circle cx="561.7" cy="901.2" fill="none"/><circle cx="561.8" cy="900.3" fill="none"/><circle cx="561.9" cy="899.8"/><circle cx="562.0" cy="901.8" fill="none"/><circle cx="562.1" cy="901.3" fill="none"/><circle cx="562.1" cy="901.9" fill="none"/><circle cx="562.2" cy="901.0" fill="none"/><circle cx="562.3" cy="901.2" fill="none"/><circle cx="562.4" cy="900.9" fill="none"/><circle cx="562.5" cy="899.9"/><circle cx="562.5" cy="900.2" fill="none"/><circle cx="562.6" cy="898.1"/><circle cx="562.7" cy="900.7" fill="none"/><circle cx="562.8" cy="901.4" fill="none"/><circle cx="562.9" cy="898.0"/><circle cx="562.9" cy="897.4"/><circle cx="563.0" cy="894.2"/><circle cx="563.1" cy="895.8"/><circle cx="563.2" cy="898.9"/><circle cx="563.3" cy="896.5"/><circle cx="563.3" cy="894.4"/><circle cx="563.4" cy="896.3"/><circle cx="563.5" cy="899.2"/><circle cx="563.6" cy="898.7"/><circle cx="563.7" cy="896.6"/><circle cx="563.7" cy="899.9"/><circle cx="563.8" cy="900.6" fill="none"/><circle cx="563.9" cy="901.1" fill="none"/><circle cx="564.0" cy="900.3" fill="none"/><circle cx="564.1" cy="897.9"/><circle cx="564.1" cy="900.0"/><circle cx="564.2" cy="899.5"/><circle cx="564.3" cy="896.3"/><circle cx="564.4" cy="899.3"/><circle cx="564.5" cy="897.5"/><circle cx="564.5" cy="900.1" fill="none"/><circle cx="564.6" cy="901.3" fill="none"/><circle cx="564.7" cy="901.3" fill="none"/><circle cx="564.8" cy="900.1" fill="none"/><circle cx="564.9" cy="900.2" fill="none"/><circle cx="565.0" cy="901.2" fill="none"/><circle cx="565.0" cy="901.9" fill="none"/><circle cx="565.1" cy="901.2" fill="none"/><circle cx="565.2" cy="898.4"/><circle cx="565.3" cy="895.4"/><circle cx="565.4" cy="897.6"/><circle cx="565.4" cy="899.9"/><circle cx="565.5" cy="899.6"/><circle cx="565.6" cy="901.1" fill="none"/><circle cx="565.7" cy="901.6" fill="none"/><circle cx="565.8" cy="901.8" fill="none"/><circle cx="565.8" cy="901.2" fill="none"/><circle cx="565.9" cy="898.4"/><circle cx="566.0" cy="900.3" fill="none"/><circle cx="566.1" cy="901.3" fill="none"/><circle cx="566.2" cy="899.8"/><circle cx="566.2" cy="900.9" fill="none"/><circle cx="566.3" cy="899.2"/><circle cx="566.4" cy="900.4" fill="none"/><circle cx="566.5" cy="901.4" fill="none"/><circle cx="566.5" cy="867.7"/><circle cx="566.6" cy="901.6" fill="none"/><circle cx="566.7" cy="902.1" fill="none"/><circle cx="566.8" cy="902.3" fill="none"/><circle cx="566.9" cy="902.1" fill="none"/><circle cx="567.0" cy="901.5" fill="none"/><circle cx="567.0" cy="899.9"/><circle cx="567.1" cy="900.9" fill="none"/><circle cx="567.2" cy="900.9" fill="none"/><circle cx="567.3" cy="900.4" fill="none"/><circle cx="567.4" cy="898.4"/><circle cx="567.4" cy="899.1"/><circle cx="567.5" cy="901.0" fill="none"/><circle cx="567.6" cy="899.6"/><circle cx="567.7" cy="901.0" fill="none"/><circle cx="567.8" cy="900.7" fill="none"/><circle cx="567.8" cy="900.0" fill="none"/><circle cx="567.9" cy="898.3"/><circle cx="568.0" cy="899.8"/><circle cx="568.1" cy="900.8" fill="none"/><circle cx="568.2" cy="901.2" fill="none"/><circle cx="568.2" cy="901.7" fill="none"/><circle cx="568.3" cy="898.6"/><circle cx="568.4" cy="899.2"/><circle cx="568.5" cy="899.2"/><circle cx="568.6" cy="900.7" fill="none"/><circle cx="568.7" cy="900.4" fill="none"/><circle cx="568.7" cy="899.8"/><circle cx="568.8" cy="900.0" fill="none"/><circle cx="568.9" cy="897.7"/><circle cx="569.0" cy="899.1"/><circle cx="569.1" cy="897.1"/><circle cx="569.1" cy="899.0"/><circle cx="569.2" cy="900.6" fill="none"/><circle cx="569.3" cy="900.3" fill="none"/><circle cx="569.4" cy="901.8" fill="none"/><circle cx="569.5" cy="902.2" fill="none"/><circle cx="569.5" cy="901.9" fill="none"/><circle cx="569.5" cy="891.0"/><circle cx="569.7" cy="901.8" fill="none"/><circle cx="569.8" cy="901.0" fill="none"/><circle cx="569.9" cy="899.8"/><circle cx="569.9" cy="898.9"/><circle cx="570.0" cy="898.2"/><circle cx="570.1" cy="900.4" fill="none"/><circle cx="570.2" cy="900.8" fill="none"/><circle cx="570.3" cy="901.4" fill="none"/><circle cx="570.3" cy="901.9" fill="none"/><circle cx="570.4" cy="902.2" fill="none"/><circle cx="570.5" cy="900.4" fill="none"/><circle cx="570.6" cy="901.2" fill="none"/><circle cx="570.7" cy="900.9" fill="none"/><circle cx="570.7" cy="900.0" fill="none"/><circle cx="570.8" cy="899.7"/><circle cx="570.9" cy="900.8" fill="none"/><circle cx="571.0" cy="900.5" fill="none"/><circle cx="571.1" cy="901.7" fill="none"/><circle cx="571.1" cy="902.1" fill="none"/><circle cx="571.2" cy="901.9" fill="none"/><circle cx="571.3" cy="901.0" fill="none"/><circle cx="571.4" cy="899.7"/><circle cx="571.5" cy="898.9"/><circle cx="571.5" cy="899.1"/><circle cx="571.6" cy="898.8"/><circle cx="571.7" cy="896.4"/><circle cx="571.8" cy="899.7"/><circle cx="571.9" cy="900.5" fill="none"/><circle cx="571.9" cy="901.4" fill="none"/><circle cx="572.0" cy="901.7" fill="none"/><circle cx="572.1" cy="901.8" fill="none"/><circle cx="572.2" cy="901.3" fill="none"/><circle cx="572.3" cy="901.7" fill="none"/><circle cx="572.4" cy="901.0" fill="none"/><circle cx="572.4" cy="901.4" fill="none"/><circle cx="572.5" cy="900.0" fill="none"/><circle cx="572.6" cy="898.6"/><circle cx="572.7" cy="900.2" fill="none"/><circle cx="572.8" cy="900.8" fill="none"/><circle cx="572.8" cy="900.8" fill="none"/><circle cx="572.9" cy="900.2" fill="none"/><circle cx="573.0" cy="900.5" fill="none"/><circle cx="573.1" cy="899.5"/><circle cx="573.2" cy="901.1" fill="none"/><circle cx="573.2" cy="901.7" fill="none"/><circle cx="573.3" cy="900.7" fill="none"/><circle cx="573.4" cy="899.8"/><circle cx="573.5" cy="899.8"/><circle cx="573.6" cy="900.7" fill="none"/><circle cx="573.6" cy="901.2" fill="none"/><circle cx="573.7" cy="901.0" fill="none"/><circle cx="573.8" cy="901.5" fill="none"/><circle cx="573.9" cy="901.4" fill="none"/><circle cx="574.0" cy="901.2" fill="none"/><circle cx="574.0" cy="897.9"/><circle cx="574.1" cy="899.4"/><circle cx="574.2" cy="900.6" fill="none"/><circle cx="574.3" cy="901.0" fill="none"/><circle cx="574.4" cy="899.4"/><circle cx="574.4" cy="901.3" fill="none"/><circle cx="574.5" cy="900.4" fill="none"/><circle cx="574.6" cy="899.9" fill="none"/><circle cx="574.7" cy="899.4"/><circle cx="574.8" cy="897.5"/><circle cx="574.8" cy="899.9" fill="none"/><circle cx="574.9" cy="899.0"/><circle cx="575.0" cy="900.6" fill="none"/><circle cx="575.1" cy="899.5"/><circle cx="575.2" cy="899.7"/><circle cx="575.2" cy="897.9"/><circle cx="575.3" cy="899.5"/><circle cx="575.4" cy="901.1" fill="none"/><circle cx="575.5" cy="900.8" fill="none"/><circle cx="575.6" cy="900.9" fill="none"/><circle cx="575.6" cy="901.1" fill="none"/><circle cx="575.7" cy="900.1" fill="none"/><circle cx="575.8" cy="899.5"/><circle cx="575.9" cy="900.4" fill="none"/><circle cx="576.0" cy="899.7"/><circle cx="576.0" cy="899.0"/><circle cx="576.1" cy="896.3"/><circle cx="576.2" cy="896.6"/><circle cx="576.3" cy="898.7"/><circle cx="576.4" cy="901.0" fill="none"/><circle cx="576.5" cy="899.5"/><circle cx="576.5" cy="901.1" fill="none"/><circle cx="576.6" cy="901.6" fill="none"/><circle cx="576.7" cy="901.4" fill="none"/><circle cx="576.8" cy="901.4" fill="none"/><circle cx="576.9" cy="902.0" fill="none"/><circle cx="576.9" cy="902.5" fill="none"/><circle cx="577.0" cy="902.0" fill="none"/><circle cx="577.1" cy="901.6" fill="none"/><circle cx="577.2" cy="901.2" fill="none"/><circle cx="577.3" cy="896.7"/><circle cx="577.3" cy="898.6"/><circle cx="577.4" cy="898.5"/><circle cx="577.5" cy="897.0"/><circle cx="577.6" cy="895.1"/><circle cx="577.7" cy="896.4"/><circle cx="577.7" cy="900.2" fill="none"/><circle cx="577.8" cy="899.9" fill="none"/><circle cx="577.9" cy="899.8" fill="none"/><circle cx="578.0" cy="899.4"/><circle cx="578.1" cy="901.4" fill="none"/><circle cx="578.1" cy="899.1"/><circle cx="578.2" cy="900.0" fill="none"/><circle cx="578.3" cy="900.5" fill="none"/><circle cx="578.4" cy="896.2"/><circle cx="578.5" cy="889.3"/><circle cx="578.5" cy="895.1"/><circle cx="578.6" cy="895.4"/><circle cx="578.7" cy="900.2" fill="none"/><circle cx="578.8" cy="900.4" fill="none"/><circle cx="578.9" cy="900.7" fill="none"/><circle cx="578.9" cy="902.0" fill="none"/><circle cx="579.0" cy="900.6" fill="none"/><circle cx="579.1" cy="901.9" fill="none"/><circle cx="579.2" cy="898.7"/><circle cx="579.3" cy="901.0" fill="none"/><circle cx="579.3" cy="902.3" fill="none"/><circle cx="579.4" cy="901.9" fill="none"/><circle cx="579.5" cy="900.6" fill="none"/><circle cx="579.6" cy="902.0" fill="none"/><circle cx="579.7" cy="901.6" fill="none"/><circle cx="579.7" cy="901.3" fill="none"/><circle cx="579.8" cy="901.6" fill="none"/><circle cx="579.9" cy="901.3" fill="none"/><circle cx="580.0" cy="901.2" fill="none"/><circle cx="580.1" cy="901.1" fill="none"/><circle cx="580.2" cy="901.3" fill="none"/><circle cx="580.2" cy="901.6" fill="none"/><circle cx="580.3" cy="901.0" fill="none"/><circle cx="580.4" cy="900.1" fill="none"/><circle cx="580.5" cy="901.3" fill="none"/><circle cx="580.6" cy="901.9" fill="none"/><circle cx="580.6" cy="899.6"/><circle cx="580.7" cy="900.4" fill="none"/><circle cx="580.8" cy="901.2" fill="none"/><circle cx="580.9" cy="902.1" fill="none"/><circle cx="581.0" cy="901.0" fill="none"/><circle cx="581.0" cy="900.4" fill="none"/><circle cx="581.1" cy="901.2" fill="none"/><circle cx="581.2" cy="899.3"/><circle cx="581.3" cy="897.7"/><circle cx="581.4" cy="900.9" fill="none"/><circle cx="581.4" cy="901.3" fill="none"/><circle cx="581.5" cy="900.8" fill="none"/><circle cx="581.6" cy="900.1" fill="none"/><circle cx="581.7" cy="898.9"/><circle cx="581.8" cy="901.6" fill="none"/><circle cx="581.8" cy="902.0" fill="none"/><circle cx="581.9" cy="901.4" fill="none"/><circle cx="582.0" cy="900.8" fill="none"/><circle cx="577.5" cy="896.0"/><circle cx="578.0" cy="871.6"/><circle cx="578.5" cy="857.7"/><circle cx="578.8" cy="839.5"/><circle cx="579.3" cy="881.7"/><circle cx="579.8" cy="851.5"/><circle cx="580.4" cy="879.8"/><circle cx="580.8" cy="889.8"/><circle cx="581.3" cy="898.4"/><circle cx="581.7" cy="887.5"/><circle cx="582.0" cy="843.7"/><circle cx="582.4" cy="832.5"/><circle cx="582.7" cy="770.1"/><circle cx="583.0" cy="732.9"/><circle cx="583.3" cy="744.9"/><circle cx="583.5" cy="710.0"/><circle cx="583.8" cy="689.9"/><circle cx="583.6" cy="669.0"/><circle cx="583.9" cy="631.8"/><circle cx="584.0" cy="606.2"/><circle cx="583.6" cy="604.6"/><circle cx="584.5" cy="613.1"/><circle cx="584.6" cy="656.2"/><circle cx="584.2" cy="637.6"/><circle cx="583.5" cy="660.0"/><circle cx="584.0" cy="672.4"/><circle cx="585.2" cy="683.7"/><circle cx="584.4" cy="697.6"/><circle cx="585.8" cy="717.0"/><circle cx="584.8" cy="725.1"/><circle cx="585.2" cy="736.0"/><circle cx="584.4" cy="752.6"/><circle cx="585.0" cy="762.3"/><circle cx="585.8" cy="801.1"/><circle cx="582.8" cy="819.7"/><circle cx="585.0" cy="856.5"/><circle cx="582.5" cy="864.2"/><circle cx="585.4" cy="868.5"/><circle cx="582.8" cy="873.9"/><circle cx="585.6" cy="879.8"/><circle cx="583.0" cy="885.6"/><circle cx="585.8" cy="887.5"/><circle cx="584.0" cy="892.1"/><circle cx="586.0" cy="899.1"/></g>
</svg>
<!-- /CHART -->
<div class="card" style="left:620px;top:516px;width:405px;height:439px;">
  <div class="abs ctitle" style="left:16px;top:17px;">Common Words</div>
  <div class="abs csub" style="left:16px;top:42px;">Frequently used words across the dataset.</div>
</div>
<svg class="cloud" style="position:absolute;left:0;top:0" width="1429" height="969"><g font-family="Liberation Serif" text-anchor="middle">
<text transform="translate(685.3,611.7)" fill="#7f7f7f" font-size="17.9">something</text>
<text transform="translate(803.8,602.8)" fill="#bcbd22" font-size="16.6">always</text>
<text transform="translate(861.7,599.5)" fill="#bcbd22" font-size="13.2">big</text>
<text transform="translate(849.9,616.4)" fill="#ff7f0e" font-size="16.7">might</text>
<text transform="translate(731.6,640.6)" fill="#7f7f7f" font-size="17.6">said</text>
<text transform="translate(723.9,675.9)" fill="#7f7f7f" font-size="27.7">really</text>
<text transform="translate(667.7,691.6)" fill="#ff7f0e" font-size="14.8">done</text>
<text transform="translate(764.9,659.2)" fill="#1f77b4" font-size="26.7">well</text>
<text transform="translate(858.5,679.4)" fill="#bcbd22" font-size="26.3">around</text>
<text transform="translate(848.5,699.5)" fill="#d62728" font-size="25.5">street</text>
<text transform="translate(743.8,703.8)" fill="#9467bd" font-size="35.6">good</text>
<text transform="translate(895.7,694.5)" fill="#9467bd" font-size="14.2">food</text>
<text transform="translate(963.4,678.4)" fill="#bcbd22" font-size="16.7">council</text>
<text transform="translate(746.7,719.4)" fill="#8c564b" font-size="19.6">year</text>
<text transform="translate(760.7,739.5)" fill="#9467bd" font-size="27.9">could</text>
<text transform="translate(765.7,766.5)" fill="#8c564b" font-size="48.0">people</text>
<text transform="translate(743.5,780.3)" fill="#1f77b4" font-size="20.9">never</text>
<text transform="translate(705.8,796.2)" fill="#bcbd22" font-size="19.7">make</text>
<text transform="translate(751.4,805.4)" fill="#7f7f7f" font-size="22.7">still</text>
<text transform="translate(870.7,738.8)" fill="#ff7f0e" font-size="56.9">cork</text>
<text transform="translate(871.5,765.5)" fill="#1f77b4" font-size="31.6">going</text>
<text transform="translate(876.4,778.5)" fill="#bcbd22" font-size="13.8">best</text>
<text transform="translate(883.0,796.5)" fill="#2ca02c" font-size="29.3">back</text>
<text transform="translate(688.9,812.4)" fill="#d62728" font-size="18.1">want</text>
<text transform="translate(672.9,824.6)" fill="#2ca02c" font-size="12.5">live</text>
<text transform="translate(673.6,838.8)" fill="#17becf" font-size="16.3">many</text>
<text transform="translate(739.8,833.5)" fill="#2ca02c" font-size="31.0">also</text>
<text transform="translate(670.9,854.3)" fill="#ff7f0e" font-size="14.5">long</text>
<text transform="translate(697.3,873.5)" fill="#e377c2" font-size="18.8">day</text>
<text transform="translate(665.0,876.0)" fill="#ff7f0e" font-size="12.5">lane</text>
<text transform="translate(682.5,890.4)" fill="#e377c2" font-size="14.4">actually</text>
<text transform="translate(738.6,888.6)" fill="#e377c2" font-size="17.4">next</text>
<text transform="translate(711.7,904.6)" fill="#1f77b4" font-size="12.7">douglas</text>
<text transform="translate(901.3,813.4)" fill="#9467bd" font-size="26.4">new</text>
<text transform="translate(946.7,861.7)" fill="#e377c2" font-size="23.9">last</text>
<text transform="translate(894.8,887.3)" fill="#8c564b" font-size="16.3">better</text>
<text transform="translate(889.6,900.9)" fill="#17becf" font-size="12.7">money</text>
<text transform="translate(877.8,915.7)" fill="#1f77b4" font-size="15.9">someone</text>
<text transform="translate(970.0,824.6)" fill="#1f77b4" font-size="17.8">house</text>
<text transform="translate(973.6,877.7)" fill="#9467bd" font-size="16.5">ireland</text>
<text transform="translate(662.9,636.1) rotate(90)" fill="#9467bd" font-size="13.3">times</text>
<text transform="translate(679.6,653.1) rotate(90)" fill="#d62728" font-size="15.9">getting</text>
<text transform="translate(699.5,637.9) rotate(90)" fill="#9467bd" font-size="17.5">dublin</text>
<text transform="translate(751.3,631.4) rotate(90)" fill="#1f77b4" font-size="16.5">first</text>
<text transform="translate(662.3,670.9) rotate(90)" fill="#1f77b4" font-size="13.1">put</text>
<text transform="translate(689.5,700.8) rotate(90)" fill="#e377c2" font-size="18.2">right</text>
<text transform="translate(768.5,620.8) rotate(90)" fill="#d62728" font-size="18.2">take</text>
<text transform="translate(795.1,633.9) rotate(90)" fill="#ff7f0e" font-size="23.5">even</text>
<text transform="translate(814.3,633.7) rotate(90)" fill="#9467bd" font-size="20.1">bus</text>
<text transform="translate(831.0,642.4) rotate(90)" fill="#e377c2" font-size="23.5">way</text>
<text transform="translate(782.7,682.8) rotate(90)" fill="#1f77b4" font-size="19.1">area</text>
<text transform="translate(800.0,695.8) rotate(90)" fill="#d62728" font-size="32.4">know</text>
<text transform="translate(884.0,631.0) rotate(90)" fill="#bcbd22" font-size="19.3">though</text>
<text transform="translate(906.9,602.7) rotate(90)" fill="#d62728" font-size="13.4">play</text>
<text transform="translate(908.1,630.0) rotate(90)" fill="#d62728" font-size="19.5">etc</text>
<text transform="translate(927.9,630.2) rotate(90)" fill="#e377c2" font-size="16.6">nice</text>
<text transform="translate(944.7,628.9) rotate(90)" fill="#ff7f0e" font-size="21.7">anyone</text>
<text transform="translate(904.4,665.9) rotate(90)" fill="#ff7f0e" font-size="13.3">open</text>
<text transform="translate(916.1,680.4) rotate(90)" fill="#9467bd" font-size="34.0">time</text>
<text transform="translate(973.1,636.8) rotate(90)" fill="#2ca02c" font-size="14.5">old</text>
<text transform="translate(979.2,700.8) rotate(90)" fill="#8c564b" font-size="13.6">public</text>
<text transform="translate(961.2,700.7) rotate(90)" fill="#1f77b4" font-size="20.3">sure</text>
<text transform="translate(944.5,706.8) rotate(90)" fill="#2ca02c" font-size="20.6">say</text>
<text transform="translate(664.8,724.8) rotate(90)" fill="#d62728" font-size="14.7">probably</text>
<text transform="translate(685.2,747.8) rotate(90)" fill="#7f7f7f" font-size="24.3">place</text>
<text transform="translate(672.8,776.8) rotate(90)" fill="#7f7f7f" font-size="15.1">another</text>
<text transform="translate(711.8,733.1) rotate(90)" fill="#ff7f0e" font-size="17.2">lot</text>
<text transform="translate(777.7,810.0) rotate(90)" fill="#e377c2" font-size="27.2">years</text>
<text transform="translate(796.3,807.7) rotate(90)" fill="#1f77b4" font-size="35.4">think</text>
<text transform="translate(834.5,789.3) rotate(90)" fill="#ff7f0e" font-size="19.8">got</text>
<text transform="translate(925.3,755.2) rotate(90)" fill="#2ca02c" font-size="48.0">city</text>
<text transform="translate(951.9,736.7) rotate(90)" fill="#2ca02c" font-size="23.4">bit</text>
<text transform="translate(969.3,760.1) rotate(90)" fill="#e377c2" font-size="15.6">thanks</text>
<text transform="translate(954.0,785.4) rotate(90)" fill="#7f7f7f" font-size="22.1">work</text>
<text transform="translate(982.0,792.0) rotate(90)" fill="#9467bd" font-size="13.9">maybe</text>
<text transform="translate(930.3,817.3) rotate(90)" fill="#d62728" font-size="27.0">road</text>
<text transform="translate(986.6,729.8) rotate(90)" fill="#ff7f0e" font-size="12.8">cars</text>
<text transform="translate(698.8,838.9) rotate(90)" fill="#9467bd" font-size="23.7">great</text>
<text transform="translate(741.6,856.4) rotate(90)" fill="#17becf" font-size="19.6">park</text>
<text transform="translate(723.0,862.0) rotate(90)" fill="#1f77b4" font-size="15.7">used</text>
<text transform="translate(738.9,902.1) rotate(90)" fill="#7f7f7f" font-size="12.2">bad</text>
<text transform="translate(752.9,914.0) rotate(90)" fill="#1f77b4" font-size="13.7">enough</text>
<text transform="translate(780.2,920.9) rotate(90)" fill="#2ca02c" font-size="14.5">night</text>
<text transform="translate(762.9,866.1) rotate(90)" fill="#9467bd" font-size="21.6">centre</text>
<text transform="translate(781.4,855.1) rotate(90)" fill="#17becf" font-size="15.9">use</text>
<text transform="translate(796.9,876.1) rotate(90)" fill="#9467bd" font-size="20.1">looking</text>
<text transform="translate(818.0,850.9) rotate(90)" fill="#ff7f0e" font-size="21.4">car</text>
<text transform="translate(826.2,891.1) rotate(90)" fill="#d62728" font-size="18.1">traffic</text>
<text transform="translate(783.5,884.3) rotate(90)" fill="#d62728" font-size="13.3">went</text>
<text transform="translate(815.5,897.8) rotate(90)" fill="#17becf" font-size="13.4">ago</text>
<text transform="translate(829.5,821.1) rotate(90)" fill="#8c564b" font-size="16.5">two</text>
<text transform="translate(842.6,838.5) rotate(90)" fill="#e377c2" font-size="43.3">like</text>
<text transform="translate(869.0,855.5) rotate(90)" fill="#2ca02c" font-size="12.8">seems</text>
<text transform="translate(882.6,846.7) rotate(90)" fill="#7f7f7f" font-size="25.1">much</text>
<text transform="translate(906.5,846.2) rotate(90)" fill="#bcbd22" font-size="31.4">see</text>
<text transform="translate(929.0,889.6) rotate(90)" fill="#8c564b" font-size="22.2">need</text>
<text transform="translate(854.4,890.4) rotate(90)" fill="#8c564b" font-size="16.0">look</text>
<text transform="translate(914.6,907.1) rotate(90)" fill="#ff7f0e" font-size="15.4">week</text>
<text transform="translate(952.9,896.9) rotate(90)" fill="#8c564b" font-size="14.6">every</text>
<text transform="translate(975.5,845.1) rotate(90)" fill="#7f7f7f" font-size="13.6">thing</text>
</g></svg>
<div class="card" style="left:1037px;top:516px;width:301px;height:420px;overflow:hidden;">
  <div class="abs ctitle" style="left:16px;top:17px;">Most Active Users</div>
  <div class="abs csub" style="left:16px;top:42px;">Who posted the most events.</div>
  <div class="uitem" style="top:71px;"><div class="uname">the beer revolu</div><div class="usub">Boards.ie • 1623 events</div></div><div class="uitem" style="top:134px;"><div class="uname">[Deleted User]</div><div class="usub">Boards.ie • 1038 events</div></div><div class="uitem" style="top:197px;"><div class="uname">namloc1980</div><div class="usub">Boards.ie • 841 events</div></div><div class="uitem" style="top:260px;"><div class="uname">Karl Stein</div><div class="usub">Boards.ie • 677 events</div></div><div class="uitem" style="top:323px;"><div class="uname">sporina</div><div class="usub">Boards.ie • 559 events</div></div><div class="uitem" style="top:386px;"><div class="uname">corks finest</div><div class="usub">Boards.ie • 538 events</div></div>
</div>
<div class="card" style="left:98px;top:967px;width:1240px;height:100px;"></div>

</div>
</body></html>
